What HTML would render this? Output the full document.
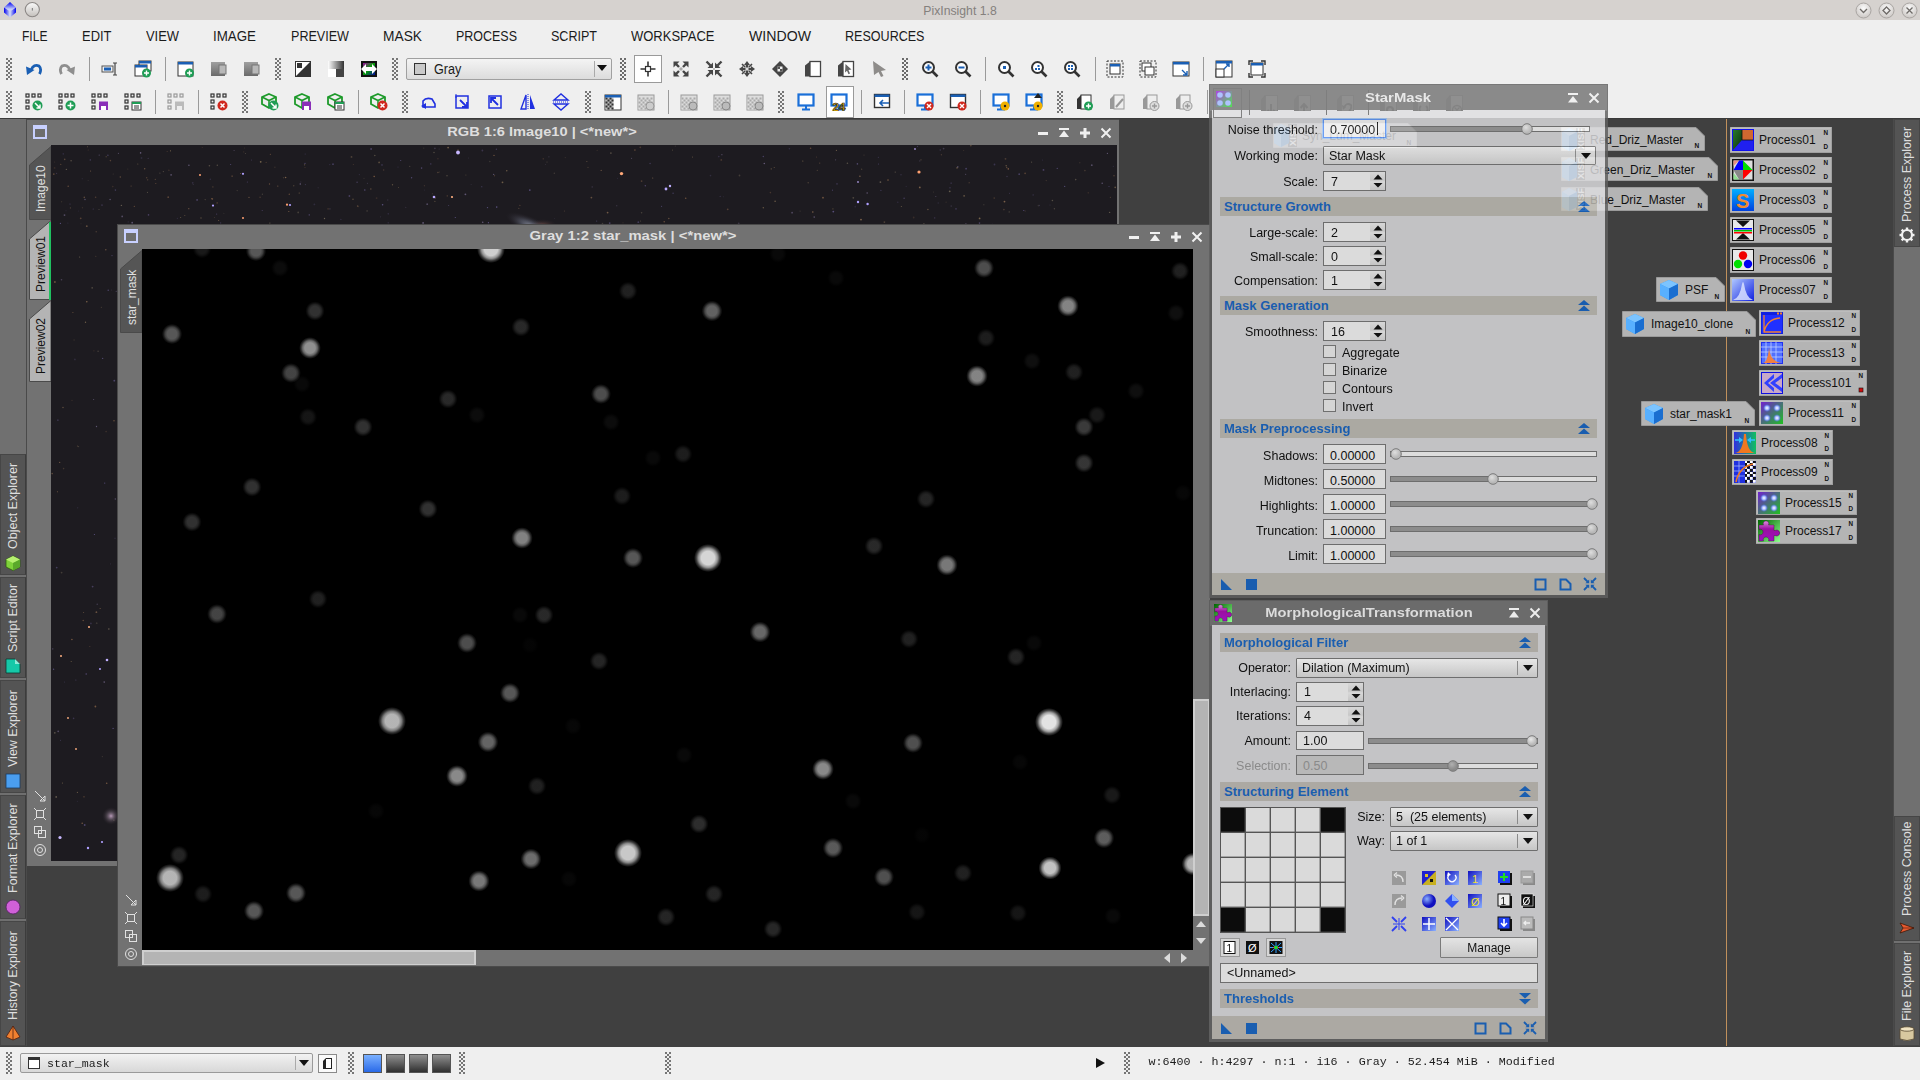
<!DOCTYPE html>
<html><head><meta charset="utf-8"><style>
html,body{margin:0;padding:0;}
body{width:1920px;height:1080px;overflow:hidden;position:relative;background:#404040;font-family:"Liberation Sans",sans-serif;}
div{position:absolute;box-sizing:border-box;}
.t{white-space:nowrap;}
</style></head><body>
<div style="left:0px;top:0px;width:1920px;height:20px;background:#d6d2cf;"></div>
<svg style="position:absolute;left:0px;top:0px;" width="44" height="20" viewBox="0 0 44 20"><defs><linearGradient id="lg1" x1="0" y1="0" x2="0" y2="1"><stop offset="0" stop-color="#0000f0"/><stop offset="0.75" stop-color="#c8d0f8"/></linearGradient><linearGradient id="lg2" x1="0" y1="0" x2="1" y2="0"><stop offset="0" stop-color="#0000f0"/><stop offset="1" stop-color="#d8e0f8"/></linearGradient><linearGradient id="lg3" x1="1" y1="0" x2="0" y2="0"><stop offset="0" stop-color="#0000f0"/><stop offset="1" stop-color="#d8e0f8"/></linearGradient><linearGradient id="cg" x1="0" y1="0" x2="0" y2="1"><stop offset="0" stop-color="#fafafa"/><stop offset="1" stop-color="#c4c0bc"/></linearGradient></defs><polygon points="10,2 16,7.5 10,11.5 4,7.5" fill="url(#lg1)"/><polygon points="4,7.5 10,11.5 10,17.5 4,12.5" fill="url(#lg2)"/><polygon points="16,7.5 10,11.5 10,17.5 16,12.5" fill="url(#lg3)"/><circle cx="32.3" cy="9.6" r="7.1" fill="url(#cg)" stroke="#8c8886" stroke-width="1.1"/><rect x="31.8" y="8" width="1.2" height="2.6" fill="#888"/></svg>
<div class="t" style="left:459.5px;width:1000px;text-align:center;top:5.04px;font-size:12px;line-height:12px;color:#84807d;font-weight:normal;font-family:'Liberation Sans',sans-serif;transform:scaleX(1.02);">PixInsight 1.8</div>
<svg style="position:absolute;left:1853.5px;top:0.5px;" width="19" height="19" viewBox="0 0 19 19"><defs><radialGradient id="cgv" cx="50%" cy="35%" r="60%"><stop offset="0" stop-color="#fbfbfb"/><stop offset="1" stop-color="#cfcbc8"/></radialGradient></defs><circle cx="9.5" cy="9.5" r="7.5" fill="url(#cgv)" stroke="#a9a5a2" stroke-width="1"/><polyline points="6,8 9.5,11.5 13,8" fill="none" stroke="#6e6a67" stroke-width="1.3"/></svg>
<svg style="position:absolute;left:1876.5px;top:0.5px;" width="19" height="19" viewBox="0 0 19 19"><defs><radialGradient id="cgd" cx="50%" cy="35%" r="60%"><stop offset="0" stop-color="#fbfbfb"/><stop offset="1" stop-color="#cfcbc8"/></radialGradient></defs><circle cx="9.5" cy="9.5" r="7.5" fill="url(#cgd)" stroke="#a9a5a2" stroke-width="1"/><polygon points="9.5,6 13,9.5 9.5,13 6,9.5" fill="none" stroke="#6e6a67" stroke-width="1.3"/></svg>
<svg style="position:absolute;left:1899.5px;top:0.5px;" width="19" height="19" viewBox="0 0 19 19"><defs><radialGradient id="cgx" cx="50%" cy="35%" r="60%"><stop offset="0" stop-color="#fbfbfb"/><stop offset="1" stop-color="#cfcbc8"/></radialGradient></defs><circle cx="9.5" cy="9.5" r="7.5" fill="url(#cgx)" stroke="#a9a5a2" stroke-width="1"/><path d="M6.5,6.5 L12.5,12.5 M12.5,6.5 L6.5,12.5" stroke="#6e6a67" stroke-width="1.3"/></svg>
<div style="left:0px;top:20px;width:1920px;height:99px;background:#efefef;"></div>
<div class="t" style="left:22px;top:29.15px;font-size:14px;line-height:14px;color:#1b1b1b;font-weight:normal;font-family:'Liberation Sans',sans-serif;transform-origin:0 0;transform:scaleX(0.8621);">FILE</div>
<div class="t" style="left:82px;top:29.15px;font-size:14px;line-height:14px;color:#1b1b1b;font-weight:normal;font-family:'Liberation Sans',sans-serif;transform-origin:0 0;transform:scaleX(0.9251);">EDIT</div>
<div class="t" style="left:146px;top:29.15px;font-size:14px;line-height:14px;color:#1b1b1b;font-weight:normal;font-family:'Liberation Sans',sans-serif;transform-origin:0 0;transform:scaleX(0.9223);">VIEW</div>
<div class="t" style="left:213px;top:29.15px;font-size:14px;line-height:14px;color:#1b1b1b;font-weight:normal;font-family:'Liberation Sans',sans-serif;transform-origin:0 0;transform:scaleX(0.9529);">IMAGE</div>
<div class="t" style="left:291px;top:29.15px;font-size:14px;line-height:14px;color:#1b1b1b;font-weight:normal;font-family:'Liberation Sans',sans-serif;transform-origin:0 0;transform:scaleX(0.8981);">PREVIEW</div>
<div class="t" style="left:383px;top:29.15px;font-size:14px;line-height:14px;color:#1b1b1b;font-weight:normal;font-family:'Liberation Sans',sans-serif;transform-origin:0 0;transform:scaleX(0.9827);">MASK</div>
<div class="t" style="left:456px;top:29.15px;font-size:14px;line-height:14px;color:#1b1b1b;font-weight:normal;font-family:'Liberation Sans',sans-serif;transform-origin:0 0;transform:scaleX(0.8909);">PROCESS</div>
<div class="t" style="left:551px;top:29.15px;font-size:14px;line-height:14px;color:#1b1b1b;font-weight:normal;font-family:'Liberation Sans',sans-serif;transform-origin:0 0;transform:scaleX(0.896);">SCRIPT</div>
<div class="t" style="left:631px;top:29.15px;font-size:14px;line-height:14px;color:#1b1b1b;font-weight:normal;font-family:'Liberation Sans',sans-serif;transform-origin:0 0;transform:scaleX(0.928);">WORKSPACE</div>
<div class="t" style="left:749px;top:29.15px;font-size:14px;line-height:14px;color:#1b1b1b;font-weight:normal;font-family:'Liberation Sans',sans-serif;transform-origin:0 0;transform:scaleX(1.0091);">WINDOW</div>
<div class="t" style="left:845px;top:29.15px;font-size:14px;line-height:14px;color:#1b1b1b;font-weight:normal;font-family:'Liberation Sans',sans-serif;transform-origin:0 0;transform:scaleX(0.8964);">RESOURCES</div>
<svg style="position:absolute;left:6px;top:58.0px;opacity:0.9;" width="6" height="22" viewBox="0 0 6 22"><rect x="0" y="0" width="2" height="2" fill="#6a6a6a"/><rect x="4" y="0" width="2" height="2" fill="#6a6a6a"/><rect x="2" y="2" width="2" height="2" fill="#6a6a6a"/><rect x="0" y="4" width="2" height="2" fill="#6a6a6a"/><rect x="4" y="4" width="2" height="2" fill="#6a6a6a"/><rect x="2" y="6" width="2" height="2" fill="#6a6a6a"/><rect x="0" y="8" width="2" height="2" fill="#6a6a6a"/><rect x="4" y="8" width="2" height="2" fill="#6a6a6a"/><rect x="2" y="10" width="2" height="2" fill="#6a6a6a"/><rect x="0" y="12" width="2" height="2" fill="#6a6a6a"/><rect x="4" y="12" width="2" height="2" fill="#6a6a6a"/><rect x="2" y="14" width="2" height="2" fill="#6a6a6a"/><rect x="0" y="16" width="2" height="2" fill="#6a6a6a"/><rect x="4" y="16" width="2" height="2" fill="#6a6a6a"/><rect x="2" y="18" width="2" height="2" fill="#6a6a6a"/><rect x="0" y="20" width="2" height="2" fill="#6a6a6a"/><rect x="4" y="20" width="2" height="2" fill="#6a6a6a"/></svg>
<svg style="position:absolute;left:275px;top:58.0px;opacity:0.9;" width="6" height="22" viewBox="0 0 6 22"><rect x="0" y="0" width="2" height="2" fill="#6a6a6a"/><rect x="4" y="0" width="2" height="2" fill="#6a6a6a"/><rect x="2" y="2" width="2" height="2" fill="#6a6a6a"/><rect x="0" y="4" width="2" height="2" fill="#6a6a6a"/><rect x="4" y="4" width="2" height="2" fill="#6a6a6a"/><rect x="2" y="6" width="2" height="2" fill="#6a6a6a"/><rect x="0" y="8" width="2" height="2" fill="#6a6a6a"/><rect x="4" y="8" width="2" height="2" fill="#6a6a6a"/><rect x="2" y="10" width="2" height="2" fill="#6a6a6a"/><rect x="0" y="12" width="2" height="2" fill="#6a6a6a"/><rect x="4" y="12" width="2" height="2" fill="#6a6a6a"/><rect x="2" y="14" width="2" height="2" fill="#6a6a6a"/><rect x="0" y="16" width="2" height="2" fill="#6a6a6a"/><rect x="4" y="16" width="2" height="2" fill="#6a6a6a"/><rect x="2" y="18" width="2" height="2" fill="#6a6a6a"/><rect x="0" y="20" width="2" height="2" fill="#6a6a6a"/><rect x="4" y="20" width="2" height="2" fill="#6a6a6a"/></svg>
<svg style="position:absolute;left:392px;top:58.0px;opacity:0.9;" width="6" height="22" viewBox="0 0 6 22"><rect x="0" y="0" width="2" height="2" fill="#6a6a6a"/><rect x="4" y="0" width="2" height="2" fill="#6a6a6a"/><rect x="2" y="2" width="2" height="2" fill="#6a6a6a"/><rect x="0" y="4" width="2" height="2" fill="#6a6a6a"/><rect x="4" y="4" width="2" height="2" fill="#6a6a6a"/><rect x="2" y="6" width="2" height="2" fill="#6a6a6a"/><rect x="0" y="8" width="2" height="2" fill="#6a6a6a"/><rect x="4" y="8" width="2" height="2" fill="#6a6a6a"/><rect x="2" y="10" width="2" height="2" fill="#6a6a6a"/><rect x="0" y="12" width="2" height="2" fill="#6a6a6a"/><rect x="4" y="12" width="2" height="2" fill="#6a6a6a"/><rect x="2" y="14" width="2" height="2" fill="#6a6a6a"/><rect x="0" y="16" width="2" height="2" fill="#6a6a6a"/><rect x="4" y="16" width="2" height="2" fill="#6a6a6a"/><rect x="2" y="18" width="2" height="2" fill="#6a6a6a"/><rect x="0" y="20" width="2" height="2" fill="#6a6a6a"/><rect x="4" y="20" width="2" height="2" fill="#6a6a6a"/></svg>
<svg style="position:absolute;left:620px;top:58.0px;opacity:0.9;" width="6" height="22" viewBox="0 0 6 22"><rect x="0" y="0" width="2" height="2" fill="#6a6a6a"/><rect x="4" y="0" width="2" height="2" fill="#6a6a6a"/><rect x="2" y="2" width="2" height="2" fill="#6a6a6a"/><rect x="0" y="4" width="2" height="2" fill="#6a6a6a"/><rect x="4" y="4" width="2" height="2" fill="#6a6a6a"/><rect x="2" y="6" width="2" height="2" fill="#6a6a6a"/><rect x="0" y="8" width="2" height="2" fill="#6a6a6a"/><rect x="4" y="8" width="2" height="2" fill="#6a6a6a"/><rect x="2" y="10" width="2" height="2" fill="#6a6a6a"/><rect x="0" y="12" width="2" height="2" fill="#6a6a6a"/><rect x="4" y="12" width="2" height="2" fill="#6a6a6a"/><rect x="2" y="14" width="2" height="2" fill="#6a6a6a"/><rect x="0" y="16" width="2" height="2" fill="#6a6a6a"/><rect x="4" y="16" width="2" height="2" fill="#6a6a6a"/><rect x="2" y="18" width="2" height="2" fill="#6a6a6a"/><rect x="0" y="20" width="2" height="2" fill="#6a6a6a"/><rect x="4" y="20" width="2" height="2" fill="#6a6a6a"/></svg>
<svg style="position:absolute;left:902px;top:58.0px;opacity:0.9;" width="6" height="22" viewBox="0 0 6 22"><rect x="0" y="0" width="2" height="2" fill="#6a6a6a"/><rect x="4" y="0" width="2" height="2" fill="#6a6a6a"/><rect x="2" y="2" width="2" height="2" fill="#6a6a6a"/><rect x="0" y="4" width="2" height="2" fill="#6a6a6a"/><rect x="4" y="4" width="2" height="2" fill="#6a6a6a"/><rect x="2" y="6" width="2" height="2" fill="#6a6a6a"/><rect x="0" y="8" width="2" height="2" fill="#6a6a6a"/><rect x="4" y="8" width="2" height="2" fill="#6a6a6a"/><rect x="2" y="10" width="2" height="2" fill="#6a6a6a"/><rect x="0" y="12" width="2" height="2" fill="#6a6a6a"/><rect x="4" y="12" width="2" height="2" fill="#6a6a6a"/><rect x="2" y="14" width="2" height="2" fill="#6a6a6a"/><rect x="0" y="16" width="2" height="2" fill="#6a6a6a"/><rect x="4" y="16" width="2" height="2" fill="#6a6a6a"/><rect x="2" y="18" width="2" height="2" fill="#6a6a6a"/><rect x="0" y="20" width="2" height="2" fill="#6a6a6a"/><rect x="4" y="20" width="2" height="2" fill="#6a6a6a"/></svg>
<div style="left:89px;top:57.0px;width:1px;height:24px;background:#9a9a9a;"></div>
<div style="left:165px;top:57.0px;width:1px;height:24px;background:#9a9a9a;"></div>
<div style="left:985px;top:57.0px;width:1px;height:24px;background:#9a9a9a;"></div>
<div style="left:1095px;top:57.0px;width:1px;height:24px;background:#9a9a9a;"></div>
<div style="left:1203px;top:57.0px;width:1px;height:24px;background:#9a9a9a;"></div>
<svg style="position:absolute;left:6px;top:91.0px;opacity:0.9;" width="6" height="22" viewBox="0 0 6 22"><rect x="0" y="0" width="2" height="2" fill="#6a6a6a"/><rect x="4" y="0" width="2" height="2" fill="#6a6a6a"/><rect x="2" y="2" width="2" height="2" fill="#6a6a6a"/><rect x="0" y="4" width="2" height="2" fill="#6a6a6a"/><rect x="4" y="4" width="2" height="2" fill="#6a6a6a"/><rect x="2" y="6" width="2" height="2" fill="#6a6a6a"/><rect x="0" y="8" width="2" height="2" fill="#6a6a6a"/><rect x="4" y="8" width="2" height="2" fill="#6a6a6a"/><rect x="2" y="10" width="2" height="2" fill="#6a6a6a"/><rect x="0" y="12" width="2" height="2" fill="#6a6a6a"/><rect x="4" y="12" width="2" height="2" fill="#6a6a6a"/><rect x="2" y="14" width="2" height="2" fill="#6a6a6a"/><rect x="0" y="16" width="2" height="2" fill="#6a6a6a"/><rect x="4" y="16" width="2" height="2" fill="#6a6a6a"/><rect x="2" y="18" width="2" height="2" fill="#6a6a6a"/><rect x="0" y="20" width="2" height="2" fill="#6a6a6a"/><rect x="4" y="20" width="2" height="2" fill="#6a6a6a"/></svg>
<svg style="position:absolute;left:242px;top:91.0px;opacity:0.9;" width="6" height="22" viewBox="0 0 6 22"><rect x="0" y="0" width="2" height="2" fill="#6a6a6a"/><rect x="4" y="0" width="2" height="2" fill="#6a6a6a"/><rect x="2" y="2" width="2" height="2" fill="#6a6a6a"/><rect x="0" y="4" width="2" height="2" fill="#6a6a6a"/><rect x="4" y="4" width="2" height="2" fill="#6a6a6a"/><rect x="2" y="6" width="2" height="2" fill="#6a6a6a"/><rect x="0" y="8" width="2" height="2" fill="#6a6a6a"/><rect x="4" y="8" width="2" height="2" fill="#6a6a6a"/><rect x="2" y="10" width="2" height="2" fill="#6a6a6a"/><rect x="0" y="12" width="2" height="2" fill="#6a6a6a"/><rect x="4" y="12" width="2" height="2" fill="#6a6a6a"/><rect x="2" y="14" width="2" height="2" fill="#6a6a6a"/><rect x="0" y="16" width="2" height="2" fill="#6a6a6a"/><rect x="4" y="16" width="2" height="2" fill="#6a6a6a"/><rect x="2" y="18" width="2" height="2" fill="#6a6a6a"/><rect x="0" y="20" width="2" height="2" fill="#6a6a6a"/><rect x="4" y="20" width="2" height="2" fill="#6a6a6a"/></svg>
<svg style="position:absolute;left:402px;top:91.0px;opacity:0.9;" width="6" height="22" viewBox="0 0 6 22"><rect x="0" y="0" width="2" height="2" fill="#6a6a6a"/><rect x="4" y="0" width="2" height="2" fill="#6a6a6a"/><rect x="2" y="2" width="2" height="2" fill="#6a6a6a"/><rect x="0" y="4" width="2" height="2" fill="#6a6a6a"/><rect x="4" y="4" width="2" height="2" fill="#6a6a6a"/><rect x="2" y="6" width="2" height="2" fill="#6a6a6a"/><rect x="0" y="8" width="2" height="2" fill="#6a6a6a"/><rect x="4" y="8" width="2" height="2" fill="#6a6a6a"/><rect x="2" y="10" width="2" height="2" fill="#6a6a6a"/><rect x="0" y="12" width="2" height="2" fill="#6a6a6a"/><rect x="4" y="12" width="2" height="2" fill="#6a6a6a"/><rect x="2" y="14" width="2" height="2" fill="#6a6a6a"/><rect x="0" y="16" width="2" height="2" fill="#6a6a6a"/><rect x="4" y="16" width="2" height="2" fill="#6a6a6a"/><rect x="2" y="18" width="2" height="2" fill="#6a6a6a"/><rect x="0" y="20" width="2" height="2" fill="#6a6a6a"/><rect x="4" y="20" width="2" height="2" fill="#6a6a6a"/></svg>
<svg style="position:absolute;left:585px;top:91.0px;opacity:0.9;" width="6" height="22" viewBox="0 0 6 22"><rect x="0" y="0" width="2" height="2" fill="#6a6a6a"/><rect x="4" y="0" width="2" height="2" fill="#6a6a6a"/><rect x="2" y="2" width="2" height="2" fill="#6a6a6a"/><rect x="0" y="4" width="2" height="2" fill="#6a6a6a"/><rect x="4" y="4" width="2" height="2" fill="#6a6a6a"/><rect x="2" y="6" width="2" height="2" fill="#6a6a6a"/><rect x="0" y="8" width="2" height="2" fill="#6a6a6a"/><rect x="4" y="8" width="2" height="2" fill="#6a6a6a"/><rect x="2" y="10" width="2" height="2" fill="#6a6a6a"/><rect x="0" y="12" width="2" height="2" fill="#6a6a6a"/><rect x="4" y="12" width="2" height="2" fill="#6a6a6a"/><rect x="2" y="14" width="2" height="2" fill="#6a6a6a"/><rect x="0" y="16" width="2" height="2" fill="#6a6a6a"/><rect x="4" y="16" width="2" height="2" fill="#6a6a6a"/><rect x="2" y="18" width="2" height="2" fill="#6a6a6a"/><rect x="0" y="20" width="2" height="2" fill="#6a6a6a"/><rect x="4" y="20" width="2" height="2" fill="#6a6a6a"/></svg>
<svg style="position:absolute;left:778px;top:91.0px;opacity:0.9;" width="6" height="22" viewBox="0 0 6 22"><rect x="0" y="0" width="2" height="2" fill="#6a6a6a"/><rect x="4" y="0" width="2" height="2" fill="#6a6a6a"/><rect x="2" y="2" width="2" height="2" fill="#6a6a6a"/><rect x="0" y="4" width="2" height="2" fill="#6a6a6a"/><rect x="4" y="4" width="2" height="2" fill="#6a6a6a"/><rect x="2" y="6" width="2" height="2" fill="#6a6a6a"/><rect x="0" y="8" width="2" height="2" fill="#6a6a6a"/><rect x="4" y="8" width="2" height="2" fill="#6a6a6a"/><rect x="2" y="10" width="2" height="2" fill="#6a6a6a"/><rect x="0" y="12" width="2" height="2" fill="#6a6a6a"/><rect x="4" y="12" width="2" height="2" fill="#6a6a6a"/><rect x="2" y="14" width="2" height="2" fill="#6a6a6a"/><rect x="0" y="16" width="2" height="2" fill="#6a6a6a"/><rect x="4" y="16" width="2" height="2" fill="#6a6a6a"/><rect x="2" y="18" width="2" height="2" fill="#6a6a6a"/><rect x="0" y="20" width="2" height="2" fill="#6a6a6a"/><rect x="4" y="20" width="2" height="2" fill="#6a6a6a"/></svg>
<svg style="position:absolute;left:1057px;top:91.0px;opacity:0.9;" width="6" height="22" viewBox="0 0 6 22"><rect x="0" y="0" width="2" height="2" fill="#6a6a6a"/><rect x="4" y="0" width="2" height="2" fill="#6a6a6a"/><rect x="2" y="2" width="2" height="2" fill="#6a6a6a"/><rect x="0" y="4" width="2" height="2" fill="#6a6a6a"/><rect x="4" y="4" width="2" height="2" fill="#6a6a6a"/><rect x="2" y="6" width="2" height="2" fill="#6a6a6a"/><rect x="0" y="8" width="2" height="2" fill="#6a6a6a"/><rect x="4" y="8" width="2" height="2" fill="#6a6a6a"/><rect x="2" y="10" width="2" height="2" fill="#6a6a6a"/><rect x="0" y="12" width="2" height="2" fill="#6a6a6a"/><rect x="4" y="12" width="2" height="2" fill="#6a6a6a"/><rect x="2" y="14" width="2" height="2" fill="#6a6a6a"/><rect x="0" y="16" width="2" height="2" fill="#6a6a6a"/><rect x="4" y="16" width="2" height="2" fill="#6a6a6a"/><rect x="2" y="18" width="2" height="2" fill="#6a6a6a"/><rect x="0" y="20" width="2" height="2" fill="#6a6a6a"/><rect x="4" y="20" width="2" height="2" fill="#6a6a6a"/></svg>
<div style="left:155px;top:90.0px;width:1px;height:24px;background:#9a9a9a;"></div>
<div style="left:198px;top:90.0px;width:1px;height:24px;background:#9a9a9a;"></div>
<div style="left:358px;top:90.0px;width:1px;height:24px;background:#9a9a9a;"></div>
<div style="left:668px;top:90.0px;width:1px;height:24px;background:#9a9a9a;"></div>
<div style="left:861px;top:90.0px;width:1px;height:24px;background:#9a9a9a;"></div>
<div style="left:904px;top:90.0px;width:1px;height:24px;background:#9a9a9a;"></div>
<div style="left:980px;top:90.0px;width:1px;height:24px;background:#9a9a9a;"></div>
<div style="left:1207px;top:90.0px;width:1px;height:24px;background:#9a9a9a;"></div>
<svg style="position:absolute;left:25.0px;top:60.0px;" width="18" height="18" viewBox="0 0 18 18"><path d="M6,10 Q9,3.5 14,6 Q17,9 14.5,14" fill="none" stroke="#1a5fb4" stroke-width="2.8"/><polygon points="1,6.5 9.5,10 2,15" fill="#1a5fb4"/></svg>
<svg style="position:absolute;left:58.0px;top:60.0px;" width="18" height="18" viewBox="0 0 18 18"><path d="M12,10 Q9,3.5 4,6 Q1,9 3.5,14" fill="none" stroke="#8e8e8e" stroke-width="2.8"/><polygon points="17,6.5 8.5,10 16,15" fill="#8e8e8e"/></svg>
<svg style="position:absolute;left:101.0px;top:60.0px;" width="18" height="18" viewBox="0 0 18 18"><rect x="1" y="6" width="11" height="6" fill="none" stroke="#555" stroke-width="1"/><rect x="3" y="7.5" width="7" height="3" fill="#1a5fb4"/><path d="M12,3 h4 M14,3 v12 M12,15 h4" stroke="#444" stroke-width="1.2"/></svg>
<svg style="position:absolute;left:134.0px;top:60.0px;" width="18" height="18" viewBox="0 0 18 18"><rect x="5" y="1" width="12" height="10" fill="#fff" stroke="#333"/><rect x="5" y="1" width="12" height="2.5" fill="#1a5fb4"/><rect x="1" y="5" width="12" height="11" fill="#fff" stroke="#333"/><rect x="1" y="5" width="12" height="2.5" fill="#1a5fb4"/><circle cx="12.5" cy="13" r="4.5" fill="#1f9d55"/><path d="M12.5,10.5 v5 M10,13 h5" stroke="#fff" stroke-width="1.4"/></svg>
<svg style="position:absolute;left:177.0px;top:60.0px;" width="18" height="18" viewBox="0 0 18 18"><rect x="1" y="2" width="15" height="14" fill="#fff" stroke="#333"/><rect x="1" y="2" width="15" height="2.5" fill="#1a5fb4"/><circle cx="12.5" cy="13" r="4.5" fill="#1f9d55"/><path d="M12.5,10.5 v5 M10,13 h5" stroke="#fff" stroke-width="1.4"/></svg>
<svg style="position:absolute;left:210.0px;top:60.0px;" width="18" height="18" viewBox="0 0 18 18"><defs><linearGradient id="gg" x1="0" y1="0" x2="0" y2="1"><stop offset="0" stop-color="#a0a0a0"/><stop offset="1" stop-color="#6a6a6a"/></linearGradient></defs><rect x="1" y="2" width="14" height="14" fill="url(#gg)"/><rect x="9" y="5" width="7" height="9" fill="#b8b8b8" stroke="#777"/></svg>
<svg style="position:absolute;left:243.0px;top:60.0px;" width="18" height="18" viewBox="0 0 18 18"><defs><linearGradient id="gg" x1="0" y1="0" x2="0" y2="1"><stop offset="0" stop-color="#a0a0a0"/><stop offset="1" stop-color="#6a6a6a"/></linearGradient></defs><rect x="1" y="2" width="14" height="14" fill="url(#gg)"/><rect x="9" y="5" width="7" height="9" fill="#b8b8b8" stroke="#777"/></svg>
<svg style="position:absolute;left:294.0px;top:60.0px;" width="18" height="18" viewBox="0 0 18 18"><rect x="1" y="1" width="16" height="16" fill="#333"/><polygon points="2,16 16,2 2,2" fill="#fff"/><rect x="3" y="3" width="5" height="5" fill="#333"/><rect x="10" y="10" width="5" height="5" fill="#333"/></svg>
<svg style="position:absolute;left:327.0px;top:60.0px;" width="18" height="18" viewBox="0 0 18 18"><defs><linearGradient id="g2" x1="0" y1="0" x2="1" y2="0"><stop offset="0" stop-color="#fff"/><stop offset="1" stop-color="#333"/></linearGradient></defs><rect x="1" y="1" width="16" height="16" fill="url(#g2)"/><rect x="1" y="9" width="8" height="8" fill="#fff"/><rect x="9" y="9" width="8" height="8" fill="#444"/></svg>
<svg style="position:absolute;left:360.0px;top:60.0px;" width="18" height="18" viewBox="0 0 18 18"><defs><linearGradient id="g3" x1="0" y1="0" x2="1" y2="1"><stop offset="0" stop-color="#f0f"/><stop offset="0.5" stop-color="#0f0"/><stop offset="1" stop-color="#00f"/></linearGradient></defs><rect x="1" y="1" width="16" height="16" fill="#111"/><rect x="3" y="3" width="12" height="12" fill="url(#g3)" opacity="0.6"/><polygon points="1,9 6,4 6,7 12,7 12,4 17,9 12,14 12,11 6,11 6,14" fill="#fff"/></svg>
<div style="left:406px;top:58px;width:206px;height:22px;background:linear-gradient(#f4f4f4,#dcdcdc);border:1px solid #a0a0a0;border-radius:2px;"></div>
<div style="left:414px;top:63px;width:12px;height:12px;background:#c9c9c9;border:1px solid #333;"></div>
<div class="t" style="left:434px;top:62.15px;font-size:14px;line-height:14px;color:#1b1b1b;font-weight:normal;font-family:'Liberation Sans',sans-serif;transform-origin:0 0;transform:scaleX(0.9);">Gray</div>
<div style="left:594px;top:61px;width:1px;height:16px;background:#aaa;"></div>
<svg style="position:absolute;left:596px;top:64px;" width="12" height="8" viewBox="0 0 12 8"><polygon points="1,1 11,1 6,7" fill="#111"/></svg>
<svg style="position:absolute;left:620px;top:58.0px;opacity:0.9;" width="6" height="22" viewBox="0 0 6 22"><rect x="0" y="0" width="2" height="2" fill="#6a6a6a"/><rect x="4" y="0" width="2" height="2" fill="#6a6a6a"/><rect x="2" y="2" width="2" height="2" fill="#6a6a6a"/><rect x="0" y="4" width="2" height="2" fill="#6a6a6a"/><rect x="4" y="4" width="2" height="2" fill="#6a6a6a"/><rect x="2" y="6" width="2" height="2" fill="#6a6a6a"/><rect x="0" y="8" width="2" height="2" fill="#6a6a6a"/><rect x="4" y="8" width="2" height="2" fill="#6a6a6a"/><rect x="2" y="10" width="2" height="2" fill="#6a6a6a"/><rect x="0" y="12" width="2" height="2" fill="#6a6a6a"/><rect x="4" y="12" width="2" height="2" fill="#6a6a6a"/><rect x="2" y="14" width="2" height="2" fill="#6a6a6a"/><rect x="0" y="16" width="2" height="2" fill="#6a6a6a"/><rect x="4" y="16" width="2" height="2" fill="#6a6a6a"/><rect x="2" y="18" width="2" height="2" fill="#6a6a6a"/><rect x="0" y="20" width="2" height="2" fill="#6a6a6a"/><rect x="4" y="20" width="2" height="2" fill="#6a6a6a"/></svg>
<div style="left:634px;top:55px;width:28px;height:28px;background:#fff;border:1px solid #9a9a9a;"></div>
<svg style="position:absolute;left:639.0px;top:60.0px;" width="18" height="18" viewBox="0 0 18 18"><path d="M9,1.5 V16.5 M1.5,9 H16.5" stroke="#333" stroke-width="1.6"/><rect x="6.5" y="6.5" width="5" height="5" fill="#fff" stroke="#333" stroke-width="1.2"/></svg>
<svg style="position:absolute;left:672.0px;top:60.0px;" width="18" height="18" viewBox="0 0 18 18"><polygon points="1.5,1.5 7.5,1.5 1.5,7.5" fill="#454545"/><polygon points="16.5,1.5 10.5,1.5 16.5,7.5" fill="#454545"/><polygon points="1.5,16.5 7.5,16.5 1.5,10.5" fill="#454545"/><polygon points="16.5,16.5 10.5,16.5 16.5,10.5" fill="#454545"/><path d="M3,3 L7,7 M15,3 L11,7 M3,15 L7,11 M15,15 L11,11" stroke="#454545" stroke-width="2.4"/><rect x="7.5" y="7.5" width="3" height="3" fill="#aaa"/></svg>
<svg style="position:absolute;left:705.0px;top:60.0px;" width="18" height="18" viewBox="0 0 18 18"><path d="M1.5,1.5 L5.5,5.5 M16.5,1.5 L12.5,5.5 M1.5,16.5 L5.5,12.5 M16.5,16.5 L12.5,12.5" stroke="#454545" stroke-width="2.4"/><polygon points="8,8 8,2.5 2.5,8" fill="#454545"/><polygon points="10,8 10,2.5 15.5,8" fill="#454545"/><polygon points="8,10 8,15.5 2.5,10" fill="#454545"/><polygon points="10,10 10,15.5 15.5,10" fill="#454545"/><rect x="8" y="8" width="2" height="2" fill="#bbb"/></svg>
<svg style="position:absolute;left:738.0px;top:60.0px;" width="18" height="18" viewBox="0 0 18 18"><path d="M9,4 V14 M4,9 H14" stroke="#454545" stroke-width="2.6"/><polygon points="9,1 12,5 6,5" fill="#454545"/><polygon points="9,17 12,13 6,13" fill="#454545"/><polygon points="1,9 5,6 5,12" fill="#454545"/><polygon points="17,9 13,6 13,12" fill="#454545"/><path d="M4,4 L7,7 M14,4 L11,7 M4,14 L7,11 M14,14 L11,11" stroke="#454545" stroke-width="1.6"/><rect x="7.5" y="7.5" width="3" height="3" fill="#ddd"/></svg>
<svg style="position:absolute;left:771.0px;top:60.0px;" width="18" height="18" viewBox="0 0 18 18"><polygon points="9,1 17,9 9,17 1,9" fill="#454545"/><rect x="6.5" y="6.5" width="5" height="5" fill="#eee"/><rect x="6.5" y="6.5" width="2.5" height="2.5" fill="#555"/><rect x="9" y="9" width="2.5" height="2.5" fill="#555"/></svg>
<svg style="position:absolute;left:804.0px;top:60.0px;" width="18" height="18" viewBox="0 0 18 18"><polygon points="1,5.5 6,1.5 6,16.5 1,16.5" fill="#454545"/><rect x="6" y="1.5" width="10.5" height="15" fill="#fff" stroke="#454545" stroke-width="1.3"/></svg>
<svg style="position:absolute;left:837.0px;top:60.0px;" width="18" height="18" viewBox="0 0 18 18"><polygon points="1,5.5 6,1.5 6,16.5 1,16.5" fill="#454545"/><rect x="6" y="1.5" width="10.5" height="15" fill="#fff" stroke="#454545" stroke-width="1.3"/><polygon points="8.5,4 14.5,9.5 11.5,10 13,13.5 11.5,14.2 10,10.8 8,12.5" fill="#666"/></svg>
<svg style="position:absolute;left:870.0px;top:60.0px;" width="18" height="18" viewBox="0 0 18 18"><polygon points="3,1 16,10 11,11 13.5,16 11,17 8.5,12 4,15" fill="#8e8c8a"/></svg>
<svg style="position:absolute;left:902px;top:58.0px;opacity:0.9;" width="6" height="22" viewBox="0 0 6 22"><rect x="0" y="0" width="2" height="2" fill="#6a6a6a"/><rect x="4" y="0" width="2" height="2" fill="#6a6a6a"/><rect x="2" y="2" width="2" height="2" fill="#6a6a6a"/><rect x="0" y="4" width="2" height="2" fill="#6a6a6a"/><rect x="4" y="4" width="2" height="2" fill="#6a6a6a"/><rect x="2" y="6" width="2" height="2" fill="#6a6a6a"/><rect x="0" y="8" width="2" height="2" fill="#6a6a6a"/><rect x="4" y="8" width="2" height="2" fill="#6a6a6a"/><rect x="2" y="10" width="2" height="2" fill="#6a6a6a"/><rect x="0" y="12" width="2" height="2" fill="#6a6a6a"/><rect x="4" y="12" width="2" height="2" fill="#6a6a6a"/><rect x="2" y="14" width="2" height="2" fill="#6a6a6a"/><rect x="0" y="16" width="2" height="2" fill="#6a6a6a"/><rect x="4" y="16" width="2" height="2" fill="#6a6a6a"/><rect x="2" y="18" width="2" height="2" fill="#6a6a6a"/><rect x="0" y="20" width="2" height="2" fill="#6a6a6a"/><rect x="4" y="20" width="2" height="2" fill="#6a6a6a"/></svg>
<svg style="position:absolute;left:921.0px;top:60.0px;" width="18" height="18" viewBox="0 0 18 18"><circle cx="7.5" cy="7.5" r="5.5" fill="#fff" stroke="#333" stroke-width="2"/><path d="M11.5,11.5 L16.5,16.5" stroke="#333" stroke-width="2.6"/><path d="M7.5,4.5 v6 M4.5,7.5 h6" stroke="#1a5fb4" stroke-width="2"/></svg>
<svg style="position:absolute;left:954.0px;top:60.0px;" width="18" height="18" viewBox="0 0 18 18"><circle cx="7.5" cy="7.5" r="5.5" fill="#fff" stroke="#333" stroke-width="2"/><path d="M11.5,11.5 L16.5,16.5" stroke="#333" stroke-width="2.6"/><path d="M4.5,7.5 h6" stroke="#1a5fb4" stroke-width="2"/></svg>
<svg style="position:absolute;left:997.0px;top:60.0px;" width="18" height="18" viewBox="0 0 18 18"><circle cx="7.5" cy="7.5" r="5.5" fill="#fff" stroke="#333" stroke-width="2"/><path d="M11.5,11.5 L16.5,16.5" stroke="#333" stroke-width="2.6"/><rect x="6" y="6" width="3" height="3" fill="#1a5fb4"/></svg>
<svg style="position:absolute;left:1030.0px;top:60.0px;" width="18" height="18" viewBox="0 0 18 18"><circle cx="7.5" cy="7.5" r="5.5" fill="#fff" stroke="#333" stroke-width="2"/><path d="M11.5,11.5 L16.5,16.5" stroke="#333" stroke-width="2.6"/><rect x="7.5" y="5" width="2" height="2" fill="#1a5fb4"/><rect x="5" y="8" width="2" height="2" fill="#1a5fb4"/><rect x="8" y="8" width="2" height="2" fill="#1a5fb4"/></svg>
<svg style="position:absolute;left:1063.0px;top:60.0px;" width="18" height="18" viewBox="0 0 18 18"><circle cx="7.5" cy="7.5" r="5.5" fill="#fff" stroke="#333" stroke-width="2"/><path d="M11.5,11.5 L16.5,16.5" stroke="#333" stroke-width="2.6"/><rect x="5" y="5" width="2" height="2" fill="#1a5fb4"/><rect x="8" y="5" width="2" height="2" fill="#1a5fb4"/><rect x="5" y="8" width="2" height="2" fill="#1a5fb4"/><rect x="8" y="8" width="2" height="2" fill="#1a5fb4"/></svg>
<svg style="position:absolute;left:1106.0px;top:60.0px;" width="18" height="18" viewBox="0 0 18 18"><rect x="1" y="1" width="16" height="16" fill="none" stroke="#333" stroke-dasharray="2,1.5"/><rect x="4" y="4" width="10" height="10" fill="#fff" stroke="#333"/><rect x="4" y="4" width="10" height="2.5" fill="#1a5fb4"/></svg>
<svg style="position:absolute;left:1139.0px;top:60.0px;" width="18" height="18" viewBox="0 0 18 18"><rect x="1" y="1" width="16" height="16" fill="none" stroke="#333" stroke-dasharray="2,1.5"/><rect x="3" y="3" width="9" height="8" fill="#fff" stroke="#333"/><rect x="6" y="7" width="9" height="8" fill="#fff" stroke="#333"/></svg>
<svg style="position:absolute;left:1172.0px;top:60.0px;" width="18" height="18" viewBox="0 0 18 18"><rect x="1" y="2" width="16" height="14" fill="#fff" stroke="#333"/><rect x="1" y="2" width="16" height="2.5" fill="#1a5fb4"/><path d="M10,10 L15,15 M15,11 v4 h-4" stroke="#1a5fb4" stroke-width="1.4" fill="none"/></svg>
<svg style="position:absolute;left:1215.0px;top:60.0px;" width="18" height="18" viewBox="0 0 18 18"><rect x="1" y="1" width="16" height="16" fill="#fff" stroke="#333"/><rect x="1" y="1" width="16" height="2.5" fill="#1a5fb4"/><rect x="1" y="9" width="8" height="8" fill="#fff" stroke="#333"/><path d="M9,9 L14,4 M11,4 h3 v3" stroke="#1a5fb4" stroke-width="1.4" fill="none"/></svg>
<svg style="position:absolute;left:1248.0px;top:60.0px;" width="18" height="18" viewBox="0 0 18 18"><path d="M1,5 v-4 h4 M13,1 h4 v4 M17,13 v4 h-4 M5,17 h-4 v-4" stroke="#333" stroke-width="1.4" fill="none"/><rect x="3" y="3" width="12" height="12" fill="#fff" stroke="#333"/><rect x="3" y="3" width="12" height="2.5" fill="#1a5fb4"/></svg>
<svg style="position:absolute;left:25.0px;top:93.0px;" width="18" height="18" viewBox="0 0 18 18"><rect x="1" y="1" width="3" height="3" fill="none" stroke="#333" stroke-width="1.2"/><rect x="7" y="1" width="3" height="3" fill="none" stroke="#333" stroke-width="1.2"/><rect x="13" y="1" width="3" height="3" fill="none" stroke="#333" stroke-width="1.2"/><rect x="1" y="7" width="3" height="3" fill="none" stroke="#333" stroke-width="1.2"/><rect x="1" y="13" width="3" height="3" fill="none" stroke="#333" stroke-width="1.2"/><circle cx="12.5" cy="12.5" r="5" fill="#1f9d55"/><path d="M10,10 L15,15 M15,11.5 v3.5 h-3.5" stroke="#fff" stroke-width="1.5" fill="none"/></svg>
<svg style="position:absolute;left:58.0px;top:93.0px;" width="18" height="18" viewBox="0 0 18 18"><rect x="1" y="1" width="3" height="3" fill="none" stroke="#333" stroke-width="1.2"/><rect x="7" y="1" width="3" height="3" fill="none" stroke="#333" stroke-width="1.2"/><rect x="13" y="1" width="3" height="3" fill="none" stroke="#333" stroke-width="1.2"/><rect x="1" y="7" width="3" height="3" fill="none" stroke="#333" stroke-width="1.2"/><rect x="1" y="13" width="3" height="3" fill="none" stroke="#333" stroke-width="1.2"/><circle cx="12.5" cy="12.5" r="5" fill="#1f9d55"/><path d="M12.5,9.5 v6 M9.5,12.5 h6" stroke="#fff" stroke-width="1.5"/></svg>
<svg style="position:absolute;left:91.0px;top:93.0px;" width="18" height="18" viewBox="0 0 18 18"><rect x="1" y="1" width="3" height="3" fill="none" stroke="#333" stroke-width="1.2"/><rect x="7" y="1" width="3" height="3" fill="none" stroke="#333" stroke-width="1.2"/><rect x="13" y="1" width="3" height="3" fill="none" stroke="#333" stroke-width="1.2"/><rect x="1" y="7" width="3" height="3" fill="none" stroke="#333" stroke-width="1.2"/><rect x="1" y="13" width="3" height="3" fill="none" stroke="#333" stroke-width="1.2"/><rect x="8" y="8.5" width="9" height="8.5" fill="#8a2fb8"/><rect x="10" y="13" width="5" height="4" fill="#fff"/></svg>
<svg style="position:absolute;left:124.0px;top:93.0px;" width="18" height="18" viewBox="0 0 18 18"><rect x="1" y="1" width="3" height="3" fill="none" stroke="#333" stroke-width="1.2"/><rect x="7" y="1" width="3" height="3" fill="none" stroke="#333" stroke-width="1.2"/><rect x="13" y="1" width="3" height="3" fill="none" stroke="#333" stroke-width="1.2"/><rect x="1" y="7" width="3" height="3" fill="none" stroke="#333" stroke-width="1.2"/><rect x="1" y="13" width="3" height="3" fill="none" stroke="#333" stroke-width="1.2"/><rect x="8" y="9" width="9" height="8" fill="#fff" stroke="#333"/><rect x="8" y="9" width="9" height="2" fill="#1f9d55"/><path d="M10,13 h5 M10,15 h5" stroke="#333"/></svg>
<svg style="position:absolute;left:167.0px;top:93.0px;" width="18" height="18" viewBox="0 0 18 18"><rect x="1" y="1" width="3" height="3" fill="none" stroke="#999" stroke-width="1.2"/><rect x="7" y="1" width="3" height="3" fill="none" stroke="#999" stroke-width="1.2"/><rect x="13" y="1" width="3" height="3" fill="none" stroke="#999" stroke-width="1.2"/><rect x="1" y="7" width="3" height="3" fill="none" stroke="#999" stroke-width="1.2"/><rect x="1" y="13" width="3" height="3" fill="none" stroke="#999" stroke-width="1.2"/><rect x="8" y="8.5" width="9" height="8.5" fill="#bbb"/><rect x="10" y="13" width="5" height="4" fill="#eee"/></svg>
<svg style="position:absolute;left:210.0px;top:93.0px;" width="18" height="18" viewBox="0 0 18 18"><rect x="1" y="1" width="3" height="3" fill="none" stroke="#333" stroke-width="1.2"/><rect x="7" y="1" width="3" height="3" fill="none" stroke="#333" stroke-width="1.2"/><rect x="13" y="1" width="3" height="3" fill="none" stroke="#333" stroke-width="1.2"/><rect x="1" y="7" width="3" height="3" fill="none" stroke="#333" stroke-width="1.2"/><rect x="1" y="13" width="3" height="3" fill="none" stroke="#333" stroke-width="1.2"/><circle cx="12.5" cy="12.5" r="5" fill="#d0281e"/><path d="M10.5,10.5 L14.5,14.5 M14.5,10.5 L10.5,14.5" stroke="#fff" stroke-width="1.5"/></svg>
<svg style="position:absolute;left:261.0px;top:93.0px;" width="18" height="18" viewBox="0 0 18 18"><polygon points="8,1 15,4 15,11 8,15 1,11 1,4" fill="none" stroke="#1d9a2a" stroke-width="1.8"/><path d="M1,4 L8,7.5 L15,4 M8,7.5 V15" stroke="#1d9a2a" stroke-width="1.6" fill="none"/><circle cx="12.5" cy="12.5" r="5" fill="#1f9d55"/><path d="M10,10 L15,15 M15,11.5 v3.5 h-3.5" stroke="#fff" stroke-width="1.5" fill="none"/></svg>
<svg style="position:absolute;left:294.0px;top:93.0px;" width="18" height="18" viewBox="0 0 18 18"><polygon points="8,1 15,4 15,11 8,15 1,11 1,4" fill="none" stroke="#1d9a2a" stroke-width="1.8"/><path d="M1,4 L8,7.5 L15,4 M8,7.5 V15" stroke="#1d9a2a" stroke-width="1.6" fill="none"/><rect x="8" y="8.5" width="9" height="8.5" fill="#8a2fb8"/><rect x="10" y="13" width="5" height="4" fill="#fff"/></svg>
<svg style="position:absolute;left:327.0px;top:93.0px;" width="18" height="18" viewBox="0 0 18 18"><polygon points="8,1 15,4 15,11 8,15 1,11 1,4" fill="none" stroke="#1d9a2a" stroke-width="1.8"/><path d="M1,4 L8,7.5 L15,4 M8,7.5 V15" stroke="#1d9a2a" stroke-width="1.6" fill="none"/><rect x="8" y="9" width="9" height="8" fill="#fff" stroke="#333"/><rect x="8" y="9" width="9" height="2" fill="#1f9d55"/><path d="M10,13 h5 M10,15 h5" stroke="#333"/></svg>
<svg style="position:absolute;left:370.0px;top:93.0px;" width="18" height="18" viewBox="0 0 18 18"><polygon points="8,1 15,4 15,11 8,15 1,11 1,4" fill="none" stroke="#1d9a2a" stroke-width="1.8"/><path d="M1,4 L8,7.5 L15,4 M8,7.5 V15" stroke="#1d9a2a" stroke-width="1.6" fill="none"/><circle cx="12.5" cy="12.5" r="5" fill="#d0281e"/><path d="M10.5,10.5 L14.5,14.5 M14.5,10.5 L10.5,14.5" stroke="#fff" stroke-width="1.5"/></svg>
<svg style="position:absolute;left:420.0px;top:93.0px;" width="18" height="18" viewBox="0 0 18 18"><path d="M3,14 L3,8 Q6,4 12,6 L15,11 L15,14 Z" fill="none" stroke="#2030e0" stroke-width="1.6"/><polygon points="1,13 6,10 6,16" fill="#2030e0"/></svg>
<svg style="position:absolute;left:453.0px;top:93.0px;" width="18" height="18" viewBox="0 0 18 18"><rect x="3" y="3" width="12" height="12" fill="none" stroke="#2030e0" stroke-width="1.5"/><path d="M7,7 L14,14 M14,9 v5 h-5" stroke="#2030e0" stroke-width="1.8" fill="none"/><path d="M3,1 v4" stroke="#2030e0"/></svg>
<svg style="position:absolute;left:486.0px;top:93.0px;" width="18" height="18" viewBox="0 0 18 18"><rect x="3" y="3" width="12" height="12" fill="none" stroke="#2030e0" stroke-width="1.5"/><path d="M12,12 L5,5 M5,10 v-5 h5" stroke="#2030e0" stroke-width="1.8" fill="none"/></svg>
<svg style="position:absolute;left:519.0px;top:93.0px;" width="18" height="18" viewBox="0 0 18 18"><polygon points="7,2 7,16 2,16" fill="none" stroke="#2030e0" stroke-width="1.4"/><polygon points="11,2 11,16 16,16" fill="#2030e0"/><path d="M9,1 v16" stroke="#2030e0" stroke-dasharray="1,1"/></svg>
<svg style="position:absolute;left:552.0px;top:93.0px;" width="18" height="18" viewBox="0 0 18 18"><polygon points="2,7 9,1 16,7" fill="none" stroke="#2030e0" stroke-width="1.4"/><polygon points="2,11 9,17 16,11" fill="none" stroke="#2030e0" stroke-width="1.4"/><path d="M1,9 h16" stroke="#2030e0" stroke-dasharray="1,1"/></svg>
<svg style="position:absolute;left:604.0px;top:93.0px;" width="18" height="18" viewBox="0 0 18 18"><rect x="1" y="2" width="16" height="15" fill="#fff" stroke="#333"/><rect x="1.5" y="4.5" width="8" height="12" fill="#bbb"/><rect x="1.5" y="4.5" width="2" height="2" fill="#333"/><rect x="5.5" y="4.5" width="2" height="2" fill="#333"/><rect x="3.5" y="6.5" width="2" height="2" fill="#333"/><rect x="7.5" y="6.5" width="2" height="2" fill="#333"/><rect x="1.5" y="8.5" width="2" height="2" fill="#333"/><rect x="5.5" y="8.5" width="2" height="2" fill="#333"/><rect x="3.5" y="10.5" width="2" height="2" fill="#333"/><rect x="7.5" y="10.5" width="2" height="2" fill="#333"/><rect x="1.5" y="12.5" width="2" height="2" fill="#333"/><rect x="5.5" y="12.5" width="2" height="2" fill="#333"/><rect x="3.5" y="14.5" width="2" height="2" fill="#333"/><rect x="7.5" y="14.5" width="2" height="2" fill="#333"/><rect x="1" y="2" width="16" height="2.5" fill="#1a5fb4"/></svg>
<svg style="position:absolute;left:637.0px;top:93.0px;" width="18" height="18" viewBox="0 0 18 18"><rect x="1" y="2" width="16" height="15" fill="#ddd" stroke="#999"/><rect x="1.5" y="4.5" width="14" height="12" fill="#ddd"/><rect x="1.5" y="4.5" width="2" height="2" fill="#aaa"/><rect x="5.5" y="4.5" width="2" height="2" fill="#aaa"/><rect x="9.5" y="4.5" width="2" height="2" fill="#aaa"/><rect x="13.5" y="4.5" width="2" height="2" fill="#aaa"/><rect x="3.5" y="6.5" width="2" height="2" fill="#aaa"/><rect x="7.5" y="6.5" width="2" height="2" fill="#aaa"/><rect x="11.5" y="6.5" width="2" height="2" fill="#aaa"/><rect x="1.5" y="8.5" width="2" height="2" fill="#aaa"/><rect x="5.5" y="8.5" width="2" height="2" fill="#aaa"/><rect x="9.5" y="8.5" width="2" height="2" fill="#aaa"/><rect x="13.5" y="8.5" width="2" height="2" fill="#aaa"/><rect x="3.5" y="10.5" width="2" height="2" fill="#aaa"/><rect x="7.5" y="10.5" width="2" height="2" fill="#aaa"/><rect x="11.5" y="10.5" width="2" height="2" fill="#aaa"/><rect x="1.5" y="12.5" width="2" height="2" fill="#aaa"/><rect x="5.5" y="12.5" width="2" height="2" fill="#aaa"/><rect x="9.5" y="12.5" width="2" height="2" fill="#aaa"/><rect x="13.5" y="12.5" width="2" height="2" fill="#aaa"/><rect x="3.5" y="14.5" width="2" height="2" fill="#aaa"/><rect x="7.5" y="14.5" width="2" height="2" fill="#aaa"/><rect x="11.5" y="14.5" width="2" height="2" fill="#aaa"/><circle cx="13" cy="13" r="4" fill="#ccc" stroke="#999"/></svg>
<svg style="position:absolute;left:680.0px;top:93.0px;" width="18" height="18" viewBox="0 0 18 18"><rect x="1" y="2" width="16" height="15" fill="#ddd" stroke="#999"/><rect x="1.5" y="4.5" width="14" height="12" fill="#ddd"/><rect x="1.5" y="4.5" width="2" height="2" fill="#aaa"/><rect x="5.5" y="4.5" width="2" height="2" fill="#aaa"/><rect x="9.5" y="4.5" width="2" height="2" fill="#aaa"/><rect x="13.5" y="4.5" width="2" height="2" fill="#aaa"/><rect x="3.5" y="6.5" width="2" height="2" fill="#aaa"/><rect x="7.5" y="6.5" width="2" height="2" fill="#aaa"/><rect x="11.5" y="6.5" width="2" height="2" fill="#aaa"/><rect x="1.5" y="8.5" width="2" height="2" fill="#aaa"/><rect x="5.5" y="8.5" width="2" height="2" fill="#aaa"/><rect x="9.5" y="8.5" width="2" height="2" fill="#aaa"/><rect x="13.5" y="8.5" width="2" height="2" fill="#aaa"/><rect x="3.5" y="10.5" width="2" height="2" fill="#aaa"/><rect x="7.5" y="10.5" width="2" height="2" fill="#aaa"/><rect x="11.5" y="10.5" width="2" height="2" fill="#aaa"/><rect x="1.5" y="12.5" width="2" height="2" fill="#aaa"/><rect x="5.5" y="12.5" width="2" height="2" fill="#aaa"/><rect x="9.5" y="12.5" width="2" height="2" fill="#aaa"/><rect x="13.5" y="12.5" width="2" height="2" fill="#aaa"/><rect x="3.5" y="14.5" width="2" height="2" fill="#aaa"/><rect x="7.5" y="14.5" width="2" height="2" fill="#aaa"/><rect x="11.5" y="14.5" width="2" height="2" fill="#aaa"/><circle cx="13" cy="13" r="4" fill="#bbb" stroke="#888"/></svg>
<svg style="position:absolute;left:713.0px;top:93.0px;" width="18" height="18" viewBox="0 0 18 18"><rect x="1" y="2" width="16" height="15" fill="#ddd" stroke="#999"/><rect x="1.5" y="4.5" width="14" height="12" fill="#ddd"/><rect x="1.5" y="4.5" width="2" height="2" fill="#aaa"/><rect x="5.5" y="4.5" width="2" height="2" fill="#aaa"/><rect x="9.5" y="4.5" width="2" height="2" fill="#aaa"/><rect x="13.5" y="4.5" width="2" height="2" fill="#aaa"/><rect x="3.5" y="6.5" width="2" height="2" fill="#aaa"/><rect x="7.5" y="6.5" width="2" height="2" fill="#aaa"/><rect x="11.5" y="6.5" width="2" height="2" fill="#aaa"/><rect x="1.5" y="8.5" width="2" height="2" fill="#aaa"/><rect x="5.5" y="8.5" width="2" height="2" fill="#aaa"/><rect x="9.5" y="8.5" width="2" height="2" fill="#aaa"/><rect x="13.5" y="8.5" width="2" height="2" fill="#aaa"/><rect x="3.5" y="10.5" width="2" height="2" fill="#aaa"/><rect x="7.5" y="10.5" width="2" height="2" fill="#aaa"/><rect x="11.5" y="10.5" width="2" height="2" fill="#aaa"/><rect x="1.5" y="12.5" width="2" height="2" fill="#aaa"/><rect x="5.5" y="12.5" width="2" height="2" fill="#aaa"/><rect x="9.5" y="12.5" width="2" height="2" fill="#aaa"/><rect x="13.5" y="12.5" width="2" height="2" fill="#aaa"/><rect x="3.5" y="14.5" width="2" height="2" fill="#aaa"/><rect x="7.5" y="14.5" width="2" height="2" fill="#aaa"/><rect x="11.5" y="14.5" width="2" height="2" fill="#aaa"/><circle cx="13" cy="13" r="4" fill="#bbb" stroke="#888"/></svg>
<svg style="position:absolute;left:746.0px;top:93.0px;" width="18" height="18" viewBox="0 0 18 18"><rect x="1" y="2" width="16" height="15" fill="#ddd" stroke="#999"/><rect x="1.5" y="4.5" width="14" height="12" fill="#ddd"/><rect x="1.5" y="4.5" width="2" height="2" fill="#aaa"/><rect x="5.5" y="4.5" width="2" height="2" fill="#aaa"/><rect x="9.5" y="4.5" width="2" height="2" fill="#aaa"/><rect x="13.5" y="4.5" width="2" height="2" fill="#aaa"/><rect x="3.5" y="6.5" width="2" height="2" fill="#aaa"/><rect x="7.5" y="6.5" width="2" height="2" fill="#aaa"/><rect x="11.5" y="6.5" width="2" height="2" fill="#aaa"/><rect x="1.5" y="8.5" width="2" height="2" fill="#aaa"/><rect x="5.5" y="8.5" width="2" height="2" fill="#aaa"/><rect x="9.5" y="8.5" width="2" height="2" fill="#aaa"/><rect x="13.5" y="8.5" width="2" height="2" fill="#aaa"/><rect x="3.5" y="10.5" width="2" height="2" fill="#aaa"/><rect x="7.5" y="10.5" width="2" height="2" fill="#aaa"/><rect x="11.5" y="10.5" width="2" height="2" fill="#aaa"/><rect x="1.5" y="12.5" width="2" height="2" fill="#aaa"/><rect x="5.5" y="12.5" width="2" height="2" fill="#aaa"/><rect x="9.5" y="12.5" width="2" height="2" fill="#aaa"/><rect x="13.5" y="12.5" width="2" height="2" fill="#aaa"/><rect x="3.5" y="14.5" width="2" height="2" fill="#aaa"/><rect x="7.5" y="14.5" width="2" height="2" fill="#aaa"/><rect x="11.5" y="14.5" width="2" height="2" fill="#aaa"/><circle cx="13" cy="13" r="4" fill="#bbb" stroke="#888"/></svg>
<svg style="position:absolute;left:797.0px;top:93.0px;" width="18" height="18" viewBox="0 0 18 18"><rect x="1.5" y="1.5" width="15" height="11" fill="#fff" stroke="#1a6fd8" stroke-width="2.2"/><path d="M9,13 v3 M5,16.5 h8" stroke="#1a6fd8" stroke-width="2"/></svg>
<div style="left:826px;top:86px;width:28px;height:32px;background:#fff;border:1px solid #9a9a9a;"></div>
<svg style="position:absolute;left:830.0px;top:93.0px;" width="18" height="18" viewBox="0 0 18 18"><rect x="1.5" y="1.5" width="15" height="11" fill="#fff" stroke="#1a6fd8" stroke-width="2.2"/><path d="M9,13 v3 M5,16.5 h8" stroke="#1a6fd8" stroke-width="2"/><text x="2.5" y="17.5" font-size="11.5" font-weight="bold" fill="#ffc000" stroke="#222" stroke-width="0.7" font-family="Liberation Sans">24</text></svg>
<svg style="position:absolute;left:873.0px;top:93.0px;" width="18" height="18" viewBox="0 0 18 18"><rect x="1.5" y="1.5" width="15" height="13" fill="#fff" stroke="#333" stroke-width="1.4"/><rect x="1.5" y="1.5" width="15" height="2.5" fill="#1a5fb4"/><path d="M16,10 h-9 M10,7 l-3,3 l3,3" stroke="#1a5fb4" stroke-width="1.6" fill="none"/></svg>
<svg style="position:absolute;left:916.0px;top:93.0px;" width="18" height="18" viewBox="0 0 18 18"><rect x="1.5" y="1.5" width="15" height="11" fill="#fff" stroke="#1a6fd8" stroke-width="2.2"/><path d="M9,13 v3 M5,16.5 h8" stroke="#1a6fd8" stroke-width="2"/><circle cx="13" cy="13" r="4.5" fill="#d0281e"/><path d="M11,11 L15,15 M15,11 L11,15" stroke="#fff" stroke-width="1.4"/></svg>
<svg style="position:absolute;left:949.0px;top:93.0px;" width="18" height="18" viewBox="0 0 18 18"><rect x="1.5" y="1.5" width="15" height="13" fill="#fff" stroke="#333" stroke-width="1.4"/><rect x="1.5" y="1.5" width="15" height="2.5" fill="#1a5fb4"/><circle cx="13" cy="13" r="4.5" fill="#d0281e"/><path d="M11,11 L15,15 M15,11 L11,15" stroke="#fff" stroke-width="1.4"/></svg>
<svg style="position:absolute;left:992.0px;top:93.0px;" width="18" height="18" viewBox="0 0 18 18"><rect x="1.5" y="1.5" width="15" height="11" fill="#fff" stroke="#1a6fd8" stroke-width="2.2"/><path d="M9,13 v3 M5,16.5 h8" stroke="#1a6fd8" stroke-width="2"/><circle cx="13" cy="13" r="4.5" fill="#f0b000"/><circle cx="13" cy="13" r="1.2" fill="#222"/></svg>
<svg style="position:absolute;left:1025.0px;top:93.0px;" width="18" height="18" viewBox="0 0 18 18"><rect x="1.5" y="1.5" width="15" height="11" fill="#fff" stroke="#1a6fd8" stroke-width="2.2"/><path d="M9,13 v3 M5,16.5 h8" stroke="#1a6fd8" stroke-width="2"/><circle cx="13" cy="13" r="4.5" fill="#f0b000"/><circle cx="13" cy="13" r="1.2" fill="#222"/><polygon points="13,0 17,5 9,5" fill="#222"/></svg>
<svg style="position:absolute;left:1076.0px;top:93.0px;" width="18" height="18" viewBox="0 0 18 18"><polygon points="1,6 5,2 15,2 15,16 1,16" fill="#333"/><rect x="5" y="2" width="10" height="14" fill="#fff" stroke="#333"/><circle cx="12.5" cy="13" r="4.5" fill="#1f9d55"/><path d="M12.5,10.5 v5 M10,13 h5" stroke="#fff" stroke-width="1.4"/></svg>
<svg style="position:absolute;left:1109.0px;top:93.0px;" width="18" height="18" viewBox="0 0 18 18"><polygon points="1,6 5,2 15,2 15,16 1,16" fill="#999"/><rect x="5" y="2" width="10" height="14" fill="#eee" stroke="#999"/><path d="M7,14 L14,6" stroke="#999" stroke-width="2"/></svg>
<svg style="position:absolute;left:1142.0px;top:93.0px;" width="18" height="18" viewBox="0 0 18 18"><polygon points="1,6 5,2 15,2 15,16 1,16" fill="#999"/><rect x="5" y="2" width="10" height="14" fill="#eee" stroke="#999"/><circle cx="12.5" cy="13" r="4.5" fill="#ddd" stroke="#999"/><path d="M12.5,10.5 v5 M10,13 h5" stroke="#999" stroke-width="1.4"/></svg>
<svg style="position:absolute;left:1175.0px;top:93.0px;" width="18" height="18" viewBox="0 0 18 18"><polygon points="1,6 5,2 15,2 15,16 1,16" fill="#999"/><rect x="5" y="2" width="10" height="14" fill="#eee" stroke="#999"/><circle cx="12.5" cy="13" r="4.5" fill="#ddd" stroke="#999"/><path d="M12.5,10.5 v5 M10,13 h5" stroke="#999" stroke-width="1.4"/></svg>
<div style="left:0px;top:118px;width:1920px;height:1px;background:#3a3a3a;"></div>
<div style="left:0px;top:119px;width:1920px;height:927px;background:#404040;"></div>
<div style="left:0px;top:119px;width:26px;height:335px;background:#707070;"></div>
<div style="left:26px;top:119px;width:1px;height:927px;background:#4a4a4a;"></div>
<div style="left:0px;top:454px;width:26px;height:592px;background:#6f6f6f;"></div>
<div style="left:0px;top:454px;width:26px;height:121px;background:#545454;border:1px solid #464646;border-right:1px solid #3c3c3c;"></div>
<svg style="position:absolute;left:5px;top:555px;" width="16" height="16" viewBox="0 0 16 16"><polygon points="8,1 15,4.5 15,12 8,15.5 1,12 1,4.5" fill="#7ed23a" stroke="#2d5a10" stroke-width="0.8"/><polygon points="8,1 15,4.5 8,8 1,4.5" fill="#b6f070"/><polygon points="8,8 15,4.5 15,12 8,15.5" fill="#5aa82a"/></svg>
<div class="t" style="left:7.2px;top:549px;font-size:12.5px;line-height:12.5px;color:#dedede;font-family:'Liberation Sans',sans-serif;font-weight:normal;transform-origin:0 0;transform:rotate(-90deg);">Object Explorer</div>
<div style="left:0px;top:577px;width:26px;height:101px;background:#545454;border:1px solid #464646;border-right:1px solid #3c3c3c;"></div>
<svg style="position:absolute;left:5px;top:658px;" width="16" height="16" viewBox="0 0 16 16"><polygon points="1,1 10,1 15,6 15,15 1,15" fill="#15c8a8" stroke="#0a3a30" stroke-width="0.8"/><polygon points="10,1 15,6 10,6" fill="#8fead8"/></svg>
<div class="t" style="left:7.2px;top:652px;font-size:12.5px;line-height:12.5px;color:#dedede;font-family:'Liberation Sans',sans-serif;font-weight:normal;transform-origin:0 0;transform:rotate(-90deg);">Script Editor</div>
<div style="left:0px;top:680px;width:26px;height:113px;background:#545454;border:1px solid #464646;border-right:1px solid #3c3c3c;"></div>
<svg style="position:absolute;left:5px;top:773px;" width="16" height="16" viewBox="0 0 16 16"><rect x="1" y="1" width="14" height="14" fill="#4a9ef0" stroke="#1a3a60" stroke-width="0.8"/></svg>
<div class="t" style="left:7.2px;top:767px;font-size:12.5px;line-height:12.5px;color:#dedede;font-family:'Liberation Sans',sans-serif;font-weight:normal;transform-origin:0 0;transform:rotate(-90deg);">View Explorer</div>
<div style="left:0px;top:795px;width:26px;height:124px;background:#545454;border:1px solid #464646;border-right:1px solid #3c3c3c;"></div>
<svg style="position:absolute;left:5px;top:899px;" width="16" height="16" viewBox="0 0 16 16"><circle cx="8" cy="8" r="7" fill="#d060d8" stroke="#502060" stroke-width="0.8"/></svg>
<div class="t" style="left:7.2px;top:893px;font-size:12.5px;line-height:12.5px;color:#dedede;font-family:'Liberation Sans',sans-serif;font-weight:normal;transform-origin:0 0;transform:rotate(-90deg);">Format Explorer</div>
<div style="left:0px;top:921px;width:26px;height:125px;background:#545454;border:1px solid #464646;border-right:1px solid #3c3c3c;"></div>
<svg style="position:absolute;left:5px;top:1025px;" width="16" height="16" viewBox="0 0 16 16"><polygon points="8,1 15,12 8,15 1,12" fill="#f08030" stroke="#502010" stroke-width="0.8"/><path d="M8,1 V15" stroke="#502010" stroke-width="0.8"/></svg>
<div class="t" style="left:7.2px;top:1020px;font-size:12.5px;line-height:12.5px;color:#dedede;font-family:'Liberation Sans',sans-serif;font-weight:normal;transform-origin:0 0;transform:rotate(-90deg);">History Explorer</div>
<div style="left:1894px;top:119px;width:26px;height:927px;background:#707070;"></div>
<div style="left:1893px;top:119px;width:1px;height:927px;background:#4a4a4a;"></div>
<div style="left:1894px;top:119px;width:26px;height:128px;background:#545454;border:1px solid #464646;"></div>
<svg style="position:absolute;left:1899px;top:227px;" width="16" height="16" viewBox="0 0 16 16"><circle cx="8" cy="8" r="5" fill="none" stroke="#f0f0f0" stroke-width="2.2"/><rect x="6.8" y="0.5" width="2.4" height="3" fill="#f0f0f0" transform="rotate(0 8 8)"/><rect x="6.8" y="0.5" width="2.4" height="3" fill="#f0f0f0" transform="rotate(45 8 8)"/><rect x="6.8" y="0.5" width="2.4" height="3" fill="#f0f0f0" transform="rotate(90 8 8)"/><rect x="6.8" y="0.5" width="2.4" height="3" fill="#f0f0f0" transform="rotate(135 8 8)"/><rect x="6.8" y="0.5" width="2.4" height="3" fill="#f0f0f0" transform="rotate(180 8 8)"/><rect x="6.8" y="0.5" width="2.4" height="3" fill="#f0f0f0" transform="rotate(225 8 8)"/><rect x="6.8" y="0.5" width="2.4" height="3" fill="#f0f0f0" transform="rotate(270 8 8)"/><rect x="6.8" y="0.5" width="2.4" height="3" fill="#f0f0f0" transform="rotate(315 8 8)"/></svg>
<div class="t" style="left:1900.8px;top:222px;font-size:12.5px;line-height:12.5px;color:#dedede;font-family:'Liberation Sans',sans-serif;font-weight:normal;transform-origin:0 0;transform:rotate(-90deg);">Process Explorer</div>
<div style="left:1894px;top:816px;width:26px;height:125px;background:#545454;border:1px solid #464646;"></div>
<svg style="position:absolute;left:1899px;top:920px;" width="16" height="16" viewBox="0 0 16 16"><polygon points="1,3 15,8 1,13 4,8" fill="#e85a30" stroke="#401808" stroke-width="0.8"/><path d="M4,8 L15,8" stroke="#401808" stroke-width="0.6"/></svg>
<div class="t" style="left:1900.8px;top:916px;font-size:12.5px;line-height:12.5px;color:#dedede;font-family:'Liberation Sans',sans-serif;font-weight:normal;transform-origin:0 0;transform:rotate(-90deg);">Process Console</div>
<div style="left:1894px;top:943px;width:26px;height:103px;background:#545454;border:1px solid #464646;"></div>
<svg style="position:absolute;left:1898px;top:1025px;" width="18" height="18" viewBox="0 0 18 18"><path d="M2,4 Q9,1 16,4 V14 Q9,17 2,14 Z" fill="#d8c8a0" stroke="#554830" stroke-width="0.8"/><ellipse cx="9" cy="4" rx="7" ry="2.2" fill="#efe2c0" stroke="#554830" stroke-width="0.8"/></svg>
<div class="t" style="left:1900.8px;top:1021px;font-size:12.5px;line-height:12.5px;color:#dedede;font-family:'Liberation Sans',sans-serif;font-weight:normal;transform-origin:0 0;transform:rotate(-90deg);">File Explorer</div>
<div style="left:1726px;top:119px;width:1px;height:927px;background:#c0905c;"></div>
<div style="left:26px;top:119px;width:1093px;height:747px;background:#727272;border-top:1px solid #4a4a4a;border-left:1px solid #4a4a4a;"></div>
<div style="left:33px;top:125px;width:14px;height:14px;background:#c8d0ff;border:2px solid #c8d0ff;border-top-width:4px;"><div style="left:0;top:0;width:10px;height:8px;background:#6e6e6e;"></div></div>
<div class="t" style="left:41.5px;width:1000px;text-align:center;top:125.00px;font-size:13px;line-height:13px;color:#dedede;font-weight:bold;font-family:'Liberation Sans',sans-serif;transform:scaleX(1.125);">RGB 1:6 Image10 | &lt;*new*&gt;</div>
<svg style="position:absolute;left:1037px;top:127px;" width="12" height="12" viewBox="0 0 12 12"><rect x="1" y="5" width="10" height="3" fill="#f0f0f0"/></svg>
<svg style="position:absolute;left:1058px;top:127px;" width="12" height="12" viewBox="0 0 12 12"><rect x="1" y="1" width="10" height="2" fill="#f0f0f0"/><polygon points="6,3.5 11,10 1,10" fill="#f0f0f0"/></svg>
<svg style="position:absolute;left:1079px;top:127px;" width="12" height="12" viewBox="0 0 12 12"><path d="M6,1 V11 M1,6 H11" stroke="#f0f0f0" stroke-width="3"/></svg>
<svg style="position:absolute;left:1100px;top:127px;" width="12" height="12" viewBox="0 0 12 12"><path d="M1.5,1.5 L10.5,10.5 M10.5,1.5 L1.5,10.5" stroke="#f0f0f0" stroke-width="2"/></svg>
<svg style="position:absolute;left:51px;top:145px;" width="1066" height="716" viewBox="0 0 1066 716"><rect width="1066" height="716" fill="#1d1b20"/><circle cx="160.8" cy="53.4" r="0.5" fill="#c89060" opacity="0.48"/><circle cx="61.8" cy="41.6" r="0.8" fill="#c89060" opacity="0.18"/><circle cx="96.7" cy="34.8" r="0.6" fill="#d0a070" opacity="0.38"/><circle cx="621.5" cy="5.1" r="0.6" fill="#c0a070" opacity="0.31"/><circle cx="915.1" cy="23.7" r="0.9" fill="#9080d0" opacity="0.37"/><circle cx="870.0" cy="14.8" r="0.6" fill="#c0a070" opacity="0.38"/><circle cx="583.9" cy="5.1" r="0.8" fill="#c89060" opacity="0.40"/><circle cx="455.8" cy="25.8" r="0.7" fill="#c0a070" opacity="0.52"/><circle cx="846.8" cy="57.3" r="0.7" fill="#9080d0" opacity="0.18"/><circle cx="932.9" cy="59.8" r="0.5" fill="#b0a080" opacity="0.39"/><circle cx="445.7" cy="62.1" r="0.8" fill="#9080d0" opacity="0.52"/><circle cx="712.3" cy="62.7" r="0.7" fill="#c0a070" opacity="0.47"/><circle cx="373.3" cy="40.7" r="0.5" fill="#d0a070" opacity="0.33"/><circle cx="32.2" cy="475.5" r="0.7" fill="#c89060" opacity="0.44"/><circle cx="1058.6" cy="67.4" r="0.7" fill="#b0a080" opacity="0.44"/><circle cx="492.2" cy="13.8" r="0.6" fill="#c89060" opacity="0.35"/><circle cx="137.9" cy="20.3" r="0.8" fill="#a090c0" opacity="0.52"/><circle cx="478.8" cy="45.1" r="0.9" fill="#9080d0" opacity="0.48"/><circle cx="442.7" cy="29.4" r="0.6" fill="#a090c0" opacity="0.53"/><circle cx="161.3" cy="54.0" r="0.9" fill="#c89060" opacity="0.34"/><circle cx="300.5" cy="11.9" r="0.9" fill="#c0a070" opacity="0.30"/><circle cx="133.8" cy="70.5" r="0.5" fill="#c0a070" opacity="0.41"/><circle cx="928.5" cy="78.1" r="0.8" fill="#8070b0" opacity="0.47"/><circle cx="420.1" cy="39.5" r="0.5" fill="#a090c0" opacity="0.17"/><circle cx="30.0" cy="78.7" r="0.5" fill="#c0a070" opacity="0.17"/><circle cx="572.0" cy="77.8" r="0.6" fill="#c0a070" opacity="0.16"/><circle cx="158.4" cy="20.7" r="0.8" fill="#b0a080" opacity="0.39"/><circle cx="905.0" cy="81.4" r="0.7" fill="#a090c0" opacity="0.34"/><circle cx="108.9" cy="28.1" r="0.6" fill="#b0a080" opacity="0.34"/><circle cx="218.8" cy="78.1" r="0.9" fill="#b0a080" opacity="0.21"/><circle cx="51.6" cy="213.4" r="0.7" fill="#8070b0" opacity="0.50"/><circle cx="968.2" cy="29.2" r="0.9" fill="#9080d0" opacity="0.36"/><circle cx="237.8" cy="66.5" r="0.6" fill="#d0a070" opacity="0.49"/><circle cx="50.3" cy="162.3" r="0.5" fill="#c0a070" opacity="0.35"/><circle cx="53.7" cy="338.1" r="0.7" fill="#9080d0" opacity="0.43"/><circle cx="998.9" cy="81.0" r="0.5" fill="#b0a080" opacity="0.18"/><circle cx="209.7" cy="16.8" r="0.9" fill="#c0a070" opacity="0.54"/><circle cx="32.6" cy="467.5" r="0.5" fill="#d0a070" opacity="0.41"/><circle cx="53.2" cy="537.1" r="0.8" fill="#a090c0" opacity="0.51"/><circle cx="22.6" cy="573.4" r="0.8" fill="#8070b0" opacity="0.31"/><circle cx="90.5" cy="13.0" r="0.9" fill="#9080d0" opacity="0.16"/><circle cx="54.8" cy="104.7" r="0.8" fill="#d0a070" opacity="0.39"/><circle cx="373.5" cy="45.0" r="0.5" fill="#9080d0" opacity="0.16"/><circle cx="995.2" cy="35.6" r="0.6" fill="#d0a070" opacity="0.23"/><circle cx="226.8" cy="41.1" r="0.7" fill="#d0a070" opacity="0.38"/><circle cx="889.3" cy="5.0" r="0.8" fill="#8070b0" opacity="0.29"/><circle cx="868.8" cy="42.4" r="0.9" fill="#d0a070" opacity="0.52"/><circle cx="161.9" cy="41.9" r="0.6" fill="#d0a070" opacity="0.33"/><circle cx="827.3" cy="12.3" r="0.5" fill="#9080d0" opacity="0.34"/><circle cx="347.5" cy="42.5" r="0.5" fill="#c0a070" opacity="0.34"/><circle cx="3.9" cy="137.0" r="0.9" fill="#c89060" opacity="0.46"/><circle cx="29.7" cy="73.3" r="0.9" fill="#c89060" opacity="0.33"/><circle cx="41.2" cy="142.8" r="0.9" fill="#b0a080" opacity="0.33"/><circle cx="34.5" cy="177.3" r="0.7" fill="#c0a070" opacity="0.50"/><circle cx="60.7" cy="145.1" r="0.5" fill="#a090c0" opacity="0.20"/><circle cx="336.8" cy="55.0" r="0.7" fill="#a090c0" opacity="0.18"/><circle cx="61.0" cy="110.6" r="0.7" fill="#8070b0" opacity="0.41"/><circle cx="941.1" cy="79.3" r="0.5" fill="#9080d0" opacity="0.45"/><circle cx="519.4" cy="81.2" r="0.8" fill="#d0a070" opacity="0.24"/><circle cx="27.5" cy="301.6" r="0.7" fill="#b0a080" opacity="0.28"/><circle cx="590.6" cy="36.1" r="0.9" fill="#c89060" opacity="0.30"/><circle cx="546.1" cy="5.3" r="0.5" fill="#d0a070" opacity="0.24"/><circle cx="289.9" cy="74.3" r="0.6" fill="#9080d0" opacity="0.26"/><circle cx="57.8" cy="484.0" r="0.9" fill="#b0a080" opacity="0.31"/><circle cx="38.8" cy="501.5" r="0.6" fill="#c89060" opacity="0.26"/><circle cx="77.2" cy="76.9" r="0.7" fill="#8070b0" opacity="0.19"/><circle cx="912.7" cy="5.5" r="0.5" fill="#d0a070" opacity="0.20"/><circle cx="589.6" cy="76.0" r="0.5" fill="#b0a080" opacity="0.40"/><circle cx="254.2" cy="9.0" r="0.6" fill="#9080d0" opacity="0.25"/><circle cx="332.6" cy="25.0" r="0.8" fill="#d0a070" opacity="0.23"/><circle cx="189.6" cy="28.5" r="0.5" fill="#c89060" opacity="0.55"/><circle cx="781.5" cy="45.2" r="0.6" fill="#9080d0" opacity="0.36"/><circle cx="7.2" cy="586.3" r="0.9" fill="#a090c0" opacity="0.41"/><circle cx="26.7" cy="362.8" r="0.6" fill="#8070b0" opacity="0.24"/><circle cx="887.2" cy="58.0" r="0.7" fill="#8070b0" opacity="0.21"/><circle cx="56.9" cy="10.2" r="0.7" fill="#8070b0" opacity="0.45"/><circle cx="59.1" cy="54.5" r="0.7" fill="#a090c0" opacity="0.50"/><circle cx="738.4" cy="3.7" r="0.8" fill="#9080d0" opacity="0.21"/><circle cx="388.2" cy="27.0" r="0.5" fill="#c0a070" opacity="0.28"/><circle cx="21.0" cy="255.3" r="0.5" fill="#c89060" opacity="0.28"/><circle cx="535.9" cy="16.5" r="0.5" fill="#c0a070" opacity="0.46"/><circle cx="95.7" cy="32.8" r="0.7" fill="#c89060" opacity="0.31"/><circle cx="248.2" cy="48.0" r="0.6" fill="#c0a070" opacity="0.49"/><circle cx="763.2" cy="72.1" r="0.8" fill="#a090c0" opacity="0.46"/><circle cx="772.0" cy="52.7" r="0.9" fill="#c89060" opacity="0.48"/><circle cx="782.3" cy="66.6" r="0.9" fill="#9080d0" opacity="0.51"/><circle cx="866.6" cy="1.3" r="0.6" fill="#8070b0" opacity="0.38"/><circle cx="44.6" cy="52.2" r="0.8" fill="#c89060" opacity="0.30"/><circle cx="669.2" cy="51.4" r="0.7" fill="#8070b0" opacity="0.25"/><circle cx="850.3" cy="61.4" r="0.5" fill="#c0a070" opacity="0.51"/><circle cx="70.4" cy="60.4" r="0.7" fill="#b0a080" opacity="0.47"/><circle cx="806.4" cy="18.9" r="0.8" fill="#8070b0" opacity="0.54"/><circle cx="5.2" cy="651.9" r="0.9" fill="#b0a080" opacity="0.46"/><circle cx="211.4" cy="49.2" r="0.7" fill="#b0a080" opacity="0.25"/><circle cx="142.2" cy="39.6" r="0.5" fill="#a090c0" opacity="0.26"/><circle cx="720.3" cy="23.9" r="0.8" fill="#c0a070" opacity="0.26"/><circle cx="126.3" cy="73.3" r="0.5" fill="#9080d0" opacity="0.27"/><circle cx="1.2" cy="328.6" r="0.8" fill="#d0a070" opacity="0.35"/><circle cx="26.3" cy="656.3" r="0.5" fill="#9080d0" opacity="0.18"/><circle cx="558.7" cy="78.1" r="0.9" fill="#9080d0" opacity="0.39"/><circle cx="120.1" cy="29.9" r="0.8" fill="#a090c0" opacity="0.51"/><circle cx="169.6" cy="77.9" r="0.7" fill="#8070b0" opacity="0.33"/><circle cx="443.6" cy="30.8" r="0.5" fill="#c89060" opacity="0.49"/><circle cx="360.6" cy="32.7" r="0.7" fill="#9080d0" opacity="0.44"/><circle cx="69.3" cy="32.0" r="0.7" fill="#d0a070" opacity="0.39"/><circle cx="51.4" cy="611.6" r="0.7" fill="#b0a080" opacity="0.19"/><circle cx="158.7" cy="79.6" r="0.6" fill="#a090c0" opacity="0.35"/><circle cx="837.0" cy="35.1" r="0.8" fill="#c89060" opacity="0.47"/><circle cx="64.0" cy="393.2" r="0.8" fill="#8070b0" opacity="0.18"/><circle cx="802.3" cy="52.8" r="0.9" fill="#b0a080" opacity="0.34"/><circle cx="503.3" cy="28.2" r="0.7" fill="#b0a080" opacity="0.25"/><circle cx="254.4" cy="39.6" r="0.6" fill="#8070b0" opacity="0.31"/><circle cx="80.1" cy="41.0" r="0.6" fill="#d0a070" opacity="0.35"/><circle cx="354.8" cy="62.3" r="0.6" fill="#a090c0" opacity="0.21"/><circle cx="186.2" cy="45.6" r="0.7" fill="#b0a080" opacity="0.25"/><circle cx="13.7" cy="14.4" r="0.8" fill="#d0a070" opacity="0.32"/><circle cx="223.9" cy="22.2" r="0.7" fill="#d0a070" opacity="0.17"/><circle cx="383.9" cy="56.3" r="0.6" fill="#c0a070" opacity="0.40"/><circle cx="956.0" cy="31.5" r="0.7" fill="#8070b0" opacity="0.33"/><circle cx="59.4" cy="15.6" r="0.8" fill="#c89060" opacity="0.32"/><circle cx="33.3" cy="52.4" r="0.8" fill="#d0a070" opacity="0.36"/><circle cx="16.9" cy="78.1" r="0.5" fill="#9080d0" opacity="0.21"/><circle cx="49.1" cy="463.5" r="0.5" fill="#d0a070" opacity="0.51"/><circle cx="42.2" cy="64.1" r="0.5" fill="#9080d0" opacity="0.38"/><circle cx="323.8" cy="10.5" r="0.8" fill="#b0a080" opacity="0.36"/><circle cx="119.5" cy="5.8" r="0.6" fill="#c0a070" opacity="0.53"/><circle cx="238.3" cy="49.3" r="0.8" fill="#c89060" opacity="0.36"/><circle cx="337.2" cy="68.8" r="0.6" fill="#9080d0" opacity="0.34"/><circle cx="31.2" cy="33.8" r="0.5" fill="#8070b0" opacity="0.27"/><circle cx="943.2" cy="53.1" r="0.8" fill="#c89060" opacity="0.25"/><circle cx="15.4" cy="24.4" r="0.7" fill="#b0a080" opacity="0.44"/><circle cx="211.2" cy="65.4" r="0.5" fill="#8070b0" opacity="0.49"/><circle cx="1033.9" cy="25.6" r="0.8" fill="#d0a070" opacity="0.23"/><circle cx="810.7" cy="24.2" r="0.6" fill="#c0a070" opacity="0.35"/><circle cx="33.0" cy="651.8" r="0.6" fill="#c89060" opacity="0.53"/><circle cx="3.7" cy="16.9" r="0.5" fill="#c0a070" opacity="0.21"/><circle cx="196.3" cy="36.9" r="0.5" fill="#8070b0" opacity="0.50"/><circle cx="63.3" cy="235.7" r="0.9" fill="#9080d0" opacity="0.41"/><circle cx="34.0" cy="54.5" r="0.7" fill="#a090c0" opacity="0.49"/><circle cx="116.1" cy="6.4" r="0.5" fill="#c89060" opacity="0.29"/><circle cx="808.9" cy="31.2" r="0.8" fill="#d0a070" opacity="0.48"/><circle cx="751.8" cy="16.0" r="0.6" fill="#c0a070" opacity="0.52"/><circle cx="786.0" cy="38.9" r="0.8" fill="#8070b0" opacity="0.31"/><circle cx="37.2" cy="5.1" r="0.5" fill="#c89060" opacity="0.25"/><circle cx="23.1" cy="195.0" r="0.7" fill="#c0a070" opacity="0.17"/><circle cx="20.2" cy="516.6" r="0.5" fill="#c0a070" opacity="0.52"/><circle cx="249.3" cy="39.0" r="0.8" fill="#a090c0" opacity="0.53"/><circle cx="62.1" cy="583.4" r="0.6" fill="#9080d0" opacity="0.52"/><circle cx="992.5" cy="24.9" r="0.9" fill="#8070b0" opacity="0.46"/><circle cx="918.1" cy="37.8" r="0.5" fill="#d0a070" opacity="0.46"/><circle cx="417.5" cy="13.1" r="0.5" fill="#a090c0" opacity="0.18"/><circle cx="580.6" cy="13.2" r="0.5" fill="#a090c0" opacity="0.50"/><circle cx="89.6" cy="7.9" r="0.8" fill="#a090c0" opacity="0.55"/><circle cx="141.7" cy="37.8" r="0.9" fill="#8070b0" opacity="0.24"/><circle cx="45.2" cy="86.8" r="0.7" fill="#d0a070" opacity="0.27"/><circle cx="397.6" cy="60.5" r="0.6" fill="#9080d0" opacity="0.33"/><circle cx="163.4" cy="72.5" r="0.5" fill="#c0a070" opacity="0.23"/><circle cx="1058.0" cy="41.6" r="0.5" fill="#9080d0" opacity="0.41"/><circle cx="1056.4" cy="8.4" r="0.6" fill="#a090c0" opacity="0.50"/><circle cx="62.2" cy="28.9" r="0.5" fill="#b0a080" opacity="0.24"/><circle cx="1037.2" cy="47.8" r="0.6" fill="#c89060" opacity="0.30"/><circle cx="277.1" cy="63.8" r="0.9" fill="#c89060" opacity="0.19"/><circle cx="372.8" cy="3.1" r="0.6" fill="#b0a080" opacity="0.21"/><circle cx="2.6" cy="524.3" r="0.7" fill="#9080d0" opacity="0.48"/><circle cx="396.3" cy="50.9" r="0.8" fill="#c89060" opacity="0.23"/><circle cx="67.4" cy="8.3" r="0.6" fill="#a090c0" opacity="0.42"/><circle cx="97.2" cy="13.4" r="0.7" fill="#8070b0" opacity="0.26"/><circle cx="445.4" cy="4.2" r="0.7" fill="#8070b0" opacity="0.38"/><circle cx="19.4" cy="62.9" r="0.6" fill="#d0a070" opacity="0.30"/><circle cx="431.7" cy="77.2" r="0.8" fill="#a090c0" opacity="0.51"/><circle cx="96.5" cy="47.4" r="0.6" fill="#b0a080" opacity="0.33"/><circle cx="55.1" cy="11.7" r="0.5" fill="#d0a070" opacity="0.51"/><circle cx="988.4" cy="60.5" r="0.7" fill="#9080d0" opacity="0.21"/><circle cx="183.1" cy="5.5" r="0.6" fill="#a090c0" opacity="0.35"/><circle cx="892.6" cy="3.6" r="0.9" fill="#a090c0" opacity="0.28"/><circle cx="26.4" cy="647.4" r="0.6" fill="#c0a070" opacity="0.43"/><circle cx="913.1" cy="50.9" r="0.8" fill="#c0a070" opacity="0.49"/><circle cx="232.5" cy="32.8" r="0.7" fill="#c0a070" opacity="0.21"/><circle cx="263.4" cy="59.4" r="0.9" fill="#9080d0" opacity="0.17"/><circle cx="45.7" cy="478.2" r="0.9" fill="#b0a080" opacity="0.20"/><circle cx="905.0" cy="63.8" r="0.9" fill="#8070b0" opacity="0.32"/><circle cx="414.9" cy="30.1" r="0.5" fill="#c0a070" opacity="0.33"/><circle cx="1051.2" cy="38.2" r="0.8" fill="#a090c0" opacity="0.46"/><circle cx="55.1" cy="286.6" r="0.8" fill="#c89060" opacity="0.20"/><circle cx="855.2" cy="41.4" r="0.6" fill="#8070b0" opacity="0.17"/><circle cx="781.9" cy="63.8" r="0.9" fill="#c0a070" opacity="0.18"/><circle cx="44.4" cy="561.5" r="0.9" fill="#c89060" opacity="0.49"/><circle cx="868.8" cy="15.9" r="0.6" fill="#a090c0" opacity="0.27"/><circle cx="768.7" cy="18.1" r="0.7" fill="#d0a070" opacity="0.29"/><circle cx="955.7" cy="22.5" r="0.7" fill="#d0a070" opacity="0.33"/><circle cx="980.6" cy="17.1" r="0.6" fill="#b0a080" opacity="0.40"/><circle cx="39.3" cy="14.9" r="0.7" fill="#9080d0" opacity="0.40"/><circle cx="954.5" cy="13.8" r="0.9" fill="#d0a070" opacity="0.26"/><circle cx="914.9" cy="79.2" r="0.9" fill="#a090c0" opacity="0.37"/><circle cx="955.2" cy="20.7" r="0.8" fill="#c0a070" opacity="0.40"/><circle cx="396.0" cy="30.8" r="0.7" fill="#b0a080" opacity="0.38"/><circle cx="86.8" cy="18.9" r="0.5" fill="#c0a070" opacity="0.45"/><circle cx="550.2" cy="25.4" r="0.7" fill="#d0a070" opacity="0.38"/><circle cx="796.4" cy="18.2" r="0.8" fill="#b0a080" opacity="0.40"/><circle cx="388.1" cy="3.9" r="0.5" fill="#a090c0" opacity="0.24"/><circle cx="2.8" cy="29.1" r="0.9" fill="#c89060" opacity="0.36"/><circle cx="622.1" cy="48.3" r="0.8" fill="#9080d0" opacity="0.30"/><circle cx="15.0" cy="65.7" r="0.5" fill="#8070b0" opacity="0.21"/><circle cx="154.2" cy="54.6" r="0.7" fill="#b0a080" opacity="0.31"/><circle cx="3.8" cy="587.8" r="0.9" fill="#b0a080" opacity="0.39"/><circle cx="999.0" cy="60.1" r="0.5" fill="#9080d0" opacity="0.22"/><circle cx="566.6" cy="33.3" r="0.5" fill="#9080d0" opacity="0.21"/><circle cx="587.3" cy="77.2" r="0.9" fill="#9080d0" opacity="0.32"/><circle cx="540.4" cy="52.6" r="0.9" fill="#d0a070" opacity="0.40"/><circle cx="320.1" cy="4.0" r="0.9" fill="#8070b0" opacity="0.46"/><circle cx="900.2" cy="61.1" r="0.8" fill="#a090c0" opacity="0.18"/><circle cx="1062.4" cy="21.4" r="0.7" fill="#8070b0" opacity="0.17"/><circle cx="62.9" cy="675.1" r="0.7" fill="#b0a080" opacity="0.43"/><circle cx="724.1" cy="56.2" r="0.7" fill="#c0a070" opacity="0.54"/><circle cx="1028.8" cy="17.8" r="0.7" fill="#c0a070" opacity="0.16"/><circle cx="57.2" cy="145.2" r="0.7" fill="#9080d0" opacity="0.45"/><circle cx="414.4" cy="49.3" r="0.9" fill="#a090c0" opacity="0.51"/><circle cx="895.1" cy="57.2" r="0.6" fill="#d0a070" opacity="0.16"/><circle cx="328.1" cy="17.4" r="0.9" fill="#c0a070" opacity="0.38"/><circle cx="9.8" cy="19.3" r="0.6" fill="#c89060" opacity="0.40"/><circle cx="151.2" cy="2.4" r="0.5" fill="#c89060" opacity="0.21"/><circle cx="785.4" cy="5.4" r="0.6" fill="#c0a070" opacity="0.45"/><circle cx="55.7" cy="638.2" r="0.8" fill="#c89060" opacity="0.50"/><circle cx="219.3" cy="9.2" r="0.5" fill="#c89060" opacity="0.53"/><circle cx="42.9" cy="205.8" r="0.6" fill="#c89060" opacity="0.20"/><circle cx="358.7" cy="21.4" r="0.7" fill="#b0a080" opacity="0.25"/><circle cx="810.0" cy="74.6" r="0.9" fill="#d0a070" opacity="0.54"/><circle cx="306.6" cy="61.1" r="0.8" fill="#d0a070" opacity="0.32"/><circle cx="104.8" cy="38.5" r="0.6" fill="#c89060" opacity="0.37"/><circle cx="882.5" cy="47.1" r="0.5" fill="#b0a080" opacity="0.22"/><circle cx="307.4" cy="61.5" r="0.8" fill="#c89060" opacity="0.15"/><circle cx="741.1" cy="67.7" r="0.9" fill="#a090c0" opacity="0.39"/><circle cx="1006.2" cy="23.3" r="0.6" fill="#9080d0" opacity="0.53"/><circle cx="117.2" cy="52.2" r="0.9" fill="#c89060" opacity="0.35"/><circle cx="42.7" cy="254.6" r="0.5" fill="#a090c0" opacity="0.52"/><circle cx="688.5" cy="30.5" r="0.9" fill="#b0a080" opacity="0.26"/><circle cx="404.3" cy="72.5" r="0.6" fill="#9080d0" opacity="0.53"/><circle cx="804.3" cy="61.7" r="0.9" fill="#8070b0" opacity="0.16"/><circle cx="165.6" cy="69.1" r="0.7" fill="#8070b0" opacity="0.37"/><circle cx="467.8" cy="63.4" r="0.7" fill="#c0a070" opacity="0.24"/><circle cx="943.5" cy="19.5" r="0.9" fill="#9080d0" opacity="0.26"/><circle cx="166.3" cy="20.3" r="0.7" fill="#b0a080" opacity="0.39"/><circle cx="349.7" cy="15.5" r="0.6" fill="#8070b0" opacity="0.55"/><circle cx="6.9" cy="275.1" r="0.7" fill="#9080d0" opacity="0.47"/><circle cx="209.1" cy="52.3" r="0.8" fill="#c89060" opacity="0.26"/><circle cx="13.5" cy="70.1" r="0.9" fill="#a090c0" opacity="0.43"/><circle cx="20.1" cy="15.8" r="0.8" fill="#b0a080" opacity="0.39"/><circle cx="258.3" cy="69.9" r="0.8" fill="#8070b0" opacity="0.38"/><circle cx="45.4" cy="467.2" r="0.9" fill="#d0a070" opacity="0.41"/><circle cx="46.2" cy="459.3" r="0.7" fill="#a090c0" opacity="0.32"/><circle cx="104.3" cy="34.4" r="0.6" fill="#d0a070" opacity="0.31"/><circle cx="451.5" cy="37.3" r="0.9" fill="#c0a070" opacity="0.49"/><circle cx="991.6" cy="15.0" r="0.5" fill="#8070b0" opacity="0.28"/><circle cx="522.2" cy="79.9" r="0.6" fill="#c89060" opacity="0.25"/><circle cx="833.4" cy="77.1" r="0.9" fill="#c0a070" opacity="0.29"/><circle cx="218.5" cy="39.0" r="0.7" fill="#c89060" opacity="0.41"/><circle cx="437.4" cy="77.7" r="0.6" fill="#9080d0" opacity="0.55"/><circle cx="813.0" cy="10.0" r="0.5" fill="#c0a070" opacity="0.29"/><circle cx="407.0" cy="5.0" r="0.8" fill="#c89060" opacity="0.32"/><circle cx="719.4" cy="47.6" r="0.8" fill="#c89060" opacity="0.24"/><circle cx="35.8" cy="156.7" r="0.8" fill="#d0a070" opacity="0.53"/><circle cx="137.8" cy="63.7" r="0.6" fill="#d0a070" opacity="0.47"/><circle cx="599.1" cy="18.5" r="0.8" fill="#9080d0" opacity="0.29"/><circle cx="313.8" cy="45.0" r="0.8" fill="#9080d0" opacity="0.46"/><circle cx="906.8" cy="21.9" r="0.8" fill="#a090c0" opacity="0.42"/><circle cx="513.4" cy="66.0" r="0.6" fill="#d0a070" opacity="0.26"/><circle cx="341.5" cy="39.8" r="0.7" fill="#c0a070" opacity="0.40"/><circle cx="323.2" cy="31.6" r="0.7" fill="#c89060" opacity="0.48"/><circle cx="9.5" cy="595.2" r="0.5" fill="#8070b0" opacity="0.38"/><circle cx="76.8" cy="24.0" r="0.6" fill="#c0a070" opacity="0.19"/><circle cx="12.6" cy="323.6" r="0.8" fill="#d0a070" opacity="0.21"/><circle cx="11.4" cy="638.1" r="0.5" fill="#c0a070" opacity="0.54"/><circle cx="952.9" cy="64.6" r="0.8" fill="#d0a070" opacity="0.27"/><circle cx="565.8" cy="60.8" r="0.5" fill="#a090c0" opacity="0.42"/><circle cx="282.0" cy="19.2" r="0.9" fill="#9080d0" opacity="0.34"/><circle cx="497.9" cy="11.8" r="0.6" fill="#a090c0" opacity="0.25"/><circle cx="919.8" cy="0.5" r="0.9" fill="#d0a070" opacity="0.28"/><circle cx="316.4" cy="38.2" r="0.5" fill="#a090c0" opacity="0.32"/><circle cx="384.2" cy="53.0" r="0.7" fill="#c89060" opacity="0.39"/><circle cx="6.4" cy="346.7" r="0.5" fill="#d0a070" opacity="0.51"/><circle cx="443.0" cy="10.4" r="0.7" fill="#c89060" opacity="0.49"/><circle cx="829.9" cy="45.4" r="0.7" fill="#9080d0" opacity="0.26"/><circle cx="590.6" cy="67.8" r="0.8" fill="#b0a080" opacity="0.29"/><circle cx="537.0" cy="22.3" r="0.6" fill="#c0a070" opacity="0.29"/><circle cx="844.2" cy="27.1" r="0.6" fill="#b0a080" opacity="0.44"/><circle cx="676.7" cy="64.3" r="0.9" fill="#c89060" opacity="0.31"/><circle cx="37.1" cy="35.6" r="0.5" fill="#b0a080" opacity="0.19"/><circle cx="982.2" cy="49.9" r="0.9" fill="#8070b0" opacity="0.17"/><circle cx="41.6" cy="441.6" r="0.9" fill="#8070b0" opacity="0.42"/><circle cx="5.6" cy="28.3" r="0.6" fill="#8070b0" opacity="0.33"/><circle cx="193.3" cy="3.0" r="0.5" fill="#d0a070" opacity="0.19"/><circle cx="876.9" cy="64.5" r="0.7" fill="#c0a070" opacity="0.43"/><circle cx="36.5" cy="1.7" r="0.5" fill="#c0a070" opacity="0.41"/><circle cx="556.6" cy="67.6" r="0.9" fill="#d0a070" opacity="0.47"/><circle cx="431.4" cy="5.5" r="0.9" fill="#8070b0" opacity="0.30"/><circle cx="44.8" cy="111.2" r="0.5" fill="#d0a070" opacity="0.31"/><circle cx="503.4" cy="73.5" r="0.5" fill="#8070b0" opacity="0.16"/><circle cx="713.5" cy="80.9" r="0.5" fill="#d0a070" opacity="0.19"/><circle cx="19.0" cy="59.0" r="0.6" fill="#9080d0" opacity="0.33"/><circle cx="24.9" cy="535.0" r="0.5" fill="#8070b0" opacity="0.49"/><circle cx="594.3" cy="40.8" r="0.7" fill="#8070b0" opacity="0.52"/><circle cx="3.6" cy="22.9" r="0.9" fill="#c89060" opacity="0.16"/><circle cx="331.6" cy="59.8" r="0.8" fill="#9080d0" opacity="0.53"/><circle cx="337.2" cy="77.8" r="0.6" fill="#8070b0" opacity="0.33"/><circle cx="850.0" cy="29.8" r="0.8" fill="#8070b0" opacity="0.22"/><circle cx="829.4" cy="37.1" r="0.9" fill="#b0a080" opacity="0.46"/><circle cx="298.4" cy="51.0" r="0.9" fill="#8070b0" opacity="0.43"/><circle cx="645.8" cy="80.2" r="0.7" fill="#d0a070" opacity="0.21"/><circle cx="1040.8" cy="20.2" r="0.9" fill="#a090c0" opacity="0.42"/><circle cx="249.8" cy="37.0" r="0.7" fill="#8070b0" opacity="0.15"/><circle cx="167.7" cy="75.5" r="0.5" fill="#d0a070" opacity="0.50"/><circle cx="150.0" cy="73.0" r="0.9" fill="#c0a070" opacity="0.21"/><circle cx="974.1" cy="28.4" r="0.8" fill="#c89060" opacity="0.37"/><circle cx="13.6" cy="537.1" r="0.5" fill="#9080d0" opacity="0.27"/><circle cx="496.0" cy="16.9" r="0.5" fill="#b0a080" opacity="0.38"/><circle cx="31.3" cy="62.8" r="0.5" fill="#d0a070" opacity="0.29"/><circle cx="617.8" cy="73.5" r="0.8" fill="#d0a070" opacity="0.36"/><circle cx="215.2" cy="17.4" r="0.7" fill="#c89060" opacity="0.22"/><circle cx="601.7" cy="33.0" r="0.6" fill="#c0a070" opacity="0.49"/><circle cx="1063.0" cy="30.7" r="0.8" fill="#c89060" opacity="0.30"/><circle cx="10.6" cy="427.6" r="0.9" fill="#b0a080" opacity="0.26"/><circle cx="35.8" cy="81.2" r="0.9" fill="#d0a070" opacity="0.38"/><circle cx="278.9" cy="63.9" r="0.8" fill="#a090c0" opacity="0.19"/><circle cx="872.9" cy="79.0" r="0.7" fill="#b0a080" opacity="0.49"/><circle cx="192.7" cy="6.9" r="0.7" fill="#c89060" opacity="0.16"/><circle cx="31.2" cy="678.2" r="0.8" fill="#c89060" opacity="0.50"/><circle cx="48.0" cy="64.4" r="0.5" fill="#b0a080" opacity="0.38"/><circle cx="45.5" cy="281.5" r="0.7" fill="#a090c0" opacity="0.49"/><circle cx="67.4" cy="158.8" r="0.7" fill="#c89060" opacity="0.53"/><circle cx="589.3" cy="2.3" r="0.9" fill="#c89060" opacity="0.25"/><circle cx="689.4" cy="80.8" r="0.7" fill="#c89060" opacity="0.19"/><circle cx="1001.4" cy="55.5" r="0.8" fill="#b0a080" opacity="0.39"/><circle cx="112.4" cy="26.6" r="0.7" fill="#b0a080" opacity="0.31"/><circle cx="179.7" cy="19.6" r="0.5" fill="#9080d0" opacity="0.52"/><circle cx="972.8" cy="65.5" r="0.6" fill="#9080d0" opacity="0.52"/><circle cx="659.5" cy="30.6" r="0.8" fill="#8070b0" opacity="0.21"/><circle cx="63.0" cy="275.7" r="0.8" fill="#c89060" opacity="0.40"/><circle cx="21.9" cy="167.5" r="0.6" fill="#c89060" opacity="0.40"/><circle cx="784.6" cy="14.8" r="0.6" fill="#a090c0" opacity="0.37"/><circle cx="159.3" cy="34.3" r="0.7" fill="#9080d0" opacity="0.21"/><circle cx="316.1" cy="65.9" r="0.7" fill="#b0a080" opacity="0.35"/><circle cx="514.3" cy="12.6" r="0.6" fill="#c0a070" opacity="0.17"/><circle cx="890.4" cy="9.8" r="0.7" fill="#d0a070" opacity="0.23"/><circle cx="278.8" cy="19.6" r="0.7" fill="#9080d0" opacity="0.19"/><circle cx="172.9" cy="68.3" r="0.5" fill="#b0a080" opacity="0.21"/><circle cx="541.3" cy="41.9" r="0.9" fill="#a090c0" opacity="0.15"/><circle cx="383.9" cy="3.3" r="0.9" fill="#a090c0" opacity="0.24"/><circle cx="899.0" cy="42.8" r="0.6" fill="#9080d0" opacity="0.43"/><circle cx="883.7" cy="72.9" r="0.7" fill="#8070b0" opacity="0.35"/><circle cx="146.1" cy="54.9" r="0.9" fill="#8070b0" opacity="0.47"/><circle cx="10.7" cy="56.8" r="0.5" fill="#c0a070" opacity="0.31"/><circle cx="370.6" cy="23.1" r="0.8" fill="#8070b0" opacity="0.50"/><circle cx="436.5" cy="62.6" r="0.7" fill="#9080d0" opacity="0.50"/><circle cx="600.3" cy="80.8" r="0.7" fill="#c89060" opacity="0.22"/><circle cx="914.7" cy="29.2" r="0.5" fill="#a090c0" opacity="0.54"/><circle cx="761.8" cy="67.0" r="0.8" fill="#d0a070" opacity="0.52"/><circle cx="957.3" cy="23.9" r="0.8" fill="#c89060" opacity="0.53"/><circle cx="27.3" cy="66.0" r="0.5" fill="#9080d0" opacity="0.16"/><circle cx="194.4" cy="8.4" r="0.5" fill="#b0a080" opacity="0.37"/><circle cx="987.4" cy="60.6" r="0.9" fill="#b0a080" opacity="0.16"/><circle cx="494.6" cy="19.5" r="0.5" fill="#a090c0" opacity="0.19"/><circle cx="48.2" cy="10.1" r="0.7" fill="#a090c0" opacity="0.38"/><circle cx="129.6" cy="72.5" r="0.6" fill="#c0a070" opacity="0.39"/><circle cx="610.6" cy="61.2" r="0.5" fill="#9080d0" opacity="0.53"/><circle cx="26.4" cy="301.1" r="0.5" fill="#d0a070" opacity="0.39"/><circle cx="1003.4" cy="63.7" r="0.7" fill="#b0a080" opacity="0.31"/><circle cx="898.7" cy="46.3" r="0.9" fill="#b0a080" opacity="0.48"/><circle cx="551.5" cy="78.5" r="0.8" fill="#b0a080" opacity="0.25"/><circle cx="12.3" cy="8.9" r="0.8" fill="#9080d0" opacity="0.18"/><circle cx="713.3" cy="18.5" r="0.8" fill="#a090c0" opacity="0.54"/><circle cx="862.7" cy="72.5" r="0.9" fill="#c89060" opacity="0.16"/><circle cx="723.2" cy="22.4" r="0.5" fill="#c0a070" opacity="0.47"/><circle cx="267.1" cy="42.7" r="0.5" fill="#a090c0" opacity="0.24"/><circle cx="325.6" cy="53.1" r="0.9" fill="#c89060" opacity="0.17"/><circle cx="5.7" cy="422.6" r="0.9" fill="#9080d0" opacity="0.33"/><circle cx="313.0" cy="33.3" r="0.5" fill="#b0a080" opacity="0.26"/><circle cx="306.1" cy="37.2" r="0.8" fill="#8070b0" opacity="0.38"/><circle cx="757.2" cy="37.8" r="0.8" fill="#c0a070" opacity="0.27"/><circle cx="331.0" cy="19.9" r="0.9" fill="#9080d0" opacity="0.23"/><circle cx="624.3" cy="1.0" r="0.6" fill="#b0a080" opacity="0.21"/><circle cx="347.0" cy="22.1" r="0.5" fill="#9080d0" opacity="0.27"/><circle cx="71.2" cy="71.4" r="0.9" fill="#a090c0" opacity="0.41"/><circle cx="468.9" cy="60.3" r="0.6" fill="#c89060" opacity="0.36"/><circle cx="712.3" cy="11.5" r="0.7" fill="#9080d0" opacity="0.40"/><circle cx="35.2" cy="529.0" r="0.8" fill="#8070b0" opacity="0.52"/><circle cx="672.3" cy="51.8" r="0.5" fill="#8070b0" opacity="0.20"/><circle cx="816.2" cy="48.0" r="0.9" fill="#a090c0" opacity="0.31"/><circle cx="906.0" cy="22.9" r="0.8" fill="#c0a070" opacity="0.39"/><circle cx="47.1" cy="206.3" r="0.8" fill="#b0a080" opacity="0.27"/><circle cx="634.7" cy="53.2" r="0.8" fill="#c89060" opacity="0.46"/><circle cx="319.8" cy="44.0" r="0.9" fill="#d0a070" opacity="0.21"/><circle cx="247.2" cy="67.4" r="0.9" fill="#b0a080" opacity="0.28"/><circle cx="65.2" cy="146.3" r="0.5" fill="#a090c0" opacity="0.51"/><circle cx="273.5" cy="73.5" r="0.7" fill="#b0a080" opacity="0.52"/><circle cx="1064.2" cy="42.4" r="0.8" fill="#c0a070" opacity="0.44"/><circle cx="381.3" cy="48.8" r="0.5" fill="#b0a080" opacity="0.33"/><circle cx="559.9" cy="8.1" r="0.9" fill="#b0a080" opacity="0.35"/><circle cx="10.5" cy="134.8" r="0.8" fill="#a090c0" opacity="0.34"/><circle cx="958.5" cy="48.2" r="0.5" fill="#8070b0" opacity="0.36"/><circle cx="339.1" cy="80.2" r="0.6" fill="#d0a070" opacity="0.27"/><circle cx="953.5" cy="56.6" r="0.9" fill="#d0a070" opacity="0.52"/><circle cx="28.6" cy="112.0" r="0.6" fill="#b0a080" opacity="0.48"/><circle cx="200.5" cy="15.0" r="0.5" fill="#8070b0" opacity="0.38"/><circle cx="1059.3" cy="52.2" r="0.5" fill="#c89060" opacity="0.43"/><circle cx="20.9" cy="494.5" r="0.8" fill="#c89060" opacity="0.52"/><circle cx="39.9" cy="478.4" r="0.9" fill="#9080d0" opacity="0.22"/><circle cx="928.6" cy="73.4" r="0.9" fill="#c0a070" opacity="0.55"/><circle cx="641.5" cy="11.9" r="0.5" fill="#c0a070" opacity="0.45"/><circle cx="81.2" cy="77.7" r="0.9" fill="#a090c0" opacity="0.48"/><circle cx="853.1" cy="53.3" r="0.7" fill="#8070b0" opacity="0.46"/><circle cx="254.0" cy="22.6" r="0.5" fill="#c89060" opacity="0.26"/><circle cx="64.4" cy="45.1" r="0.8" fill="#9080d0" opacity="0.33"/><circle cx="234.6" cy="32.5" r="0.8" fill="#d0a070" opacity="0.53"/><circle cx="254.0" cy="18.3" r="0.6" fill="#9080d0" opacity="0.52"/><circle cx="958.2" cy="66.9" r="0.7" fill="#b0a080" opacity="0.32"/><circle cx="33.7" cy="680.0" r="0.9" fill="#9080d0" opacity="0.42"/><circle cx="329.6" cy="71.8" r="0.6" fill="#a090c0" opacity="0.16"/><circle cx="181.1" cy="31.1" r="0.7" fill="#c89060" opacity="0.54"/><circle cx="386.9" cy="27.5" r="0.8" fill="#d0a070" opacity="0.30"/><circle cx="1024.7" cy="34.6" r="0.8" fill="#b0a080" opacity="0.37"/><circle cx="302.3" cy="19.4" r="0.5" fill="#c89060" opacity="0.26"/><circle cx="166.2" cy="57.9" r="0.9" fill="#c89060" opacity="0.23"/><circle cx="8.7" cy="317.4" r="0.6" fill="#d0a070" opacity="0.47"/><circle cx="376.2" cy="59.2" r="0.9" fill="#a090c0" opacity="0.40"/><circle cx="1013.7" cy="41.4" r="0.6" fill="#9080d0" opacity="0.49"/><circle cx="67.9" cy="426.7" r="0.7" fill="#a090c0" opacity="0.39"/><circle cx="430.8" cy="41.8" r="0.5" fill="#9080d0" opacity="0.50"/><circle cx="97.5" cy="69.9" r="0.8" fill="#8070b0" opacity="0.46"/><circle cx="765.6" cy="11.9" r="0.5" fill="#c89060" opacity="0.31"/><circle cx="827.4" cy="19.0" r="0.5" fill="#9080d0" opacity="0.42"/><circle cx="974.2" cy="66.0" r="0.5" fill="#d0a070" opacity="0.27"/><circle cx="93.7" cy="23.7" r="0.7" fill="#d0a070" opacity="0.44"/><circle cx="900.1" cy="38.1" r="0.6" fill="#8070b0" opacity="0.50"/><circle cx="12.0" cy="262.5" r="0.7" fill="#d0a070" opacity="0.42"/><circle cx="1.7" cy="503.9" r="0.8" fill="#a090c0" opacity="0.25"/><circle cx="670.3" cy="14.9" r="0.9" fill="#c89060" opacity="0.26"/><circle cx="759.6" cy="3.3" r="0.8" fill="#c89060" opacity="0.39"/><circle cx="323.1" cy="31.2" r="0.6" fill="#c89060" opacity="0.37"/><circle cx="242.7" cy="40.8" r="0.8" fill="#c0a070" opacity="0.25"/><circle cx="613.2" cy="76.7" r="0.7" fill="#c89060" opacity="0.48"/><circle cx="59.5" cy="418.9" r="0.6" fill="#8070b0" opacity="0.17"/><circle cx="39.6" cy="26.1" r="0.5" fill="#d0a070" opacity="0.52"/><circle cx="793.0" cy="81.8" r="0.7" fill="#c0a070" opacity="0.48"/><circle cx="372.1" cy="77.9" r="0.9" fill="#a090c0" opacity="0.52"/><circle cx="884.8" cy="51.5" r="0.6" fill="#a090c0" opacity="0.35"/><circle cx="545.7" cy="76.1" r="0.6" fill="#9080d0" opacity="0.35"/><circle cx="749.1" cy="66.1" r="0.6" fill="#b0a080" opacity="0.22"/><circle cx="43.4" cy="389.5" r="0.6" fill="#9080d0" opacity="0.54"/><circle cx="438.8" cy="16.5" r="0.8" fill="#b0a080" opacity="0.20"/><circle cx="253.6" cy="19.8" r="0.6" fill="#c0a070" opacity="0.43"/><circle cx="23.9" cy="214.4" r="0.9" fill="#8070b0" opacity="0.21"/><circle cx="670.9" cy="9.7" r="0.6" fill="#a090c0" opacity="0.45"/><circle cx="165.0" cy="80.3" r="0.6" fill="#d0a070" opacity="0.46"/><circle cx="308.4" cy="29.6" r="0.7" fill="#9080d0" opacity="0.17"/><circle cx="117.9" cy="25.3" r="0.8" fill="#c89060" opacity="0.21"/><circle cx="386.9" cy="13.8" r="0.8" fill="#c89060" opacity="0.17"/><circle cx="51.0" cy="60.1" r="0.9" fill="#8070b0" opacity="0.28"/><circle cx="687.7" cy="78.5" r="0.9" fill="#a090c0" opacity="0.23"/><circle cx="383.0" cy="7.5" r="0.7" fill="#b0a080" opacity="0.40"/><circle cx="83.3" cy="61.3" r="0.6" fill="#c89060" opacity="0.46"/><circle cx="198.0" cy="52.3" r="0.6" fill="#d0a070" opacity="0.51"/><circle cx="766.3" cy="25.4" r="0.6" fill="#c0a070" opacity="0.28"/><circle cx="379.8" cy="18.9" r="0.7" fill="#9080d0" opacity="0.37"/><circle cx="17.2" cy="41.3" r="0.8" fill="#c89060" opacity="0.38"/><circle cx="64.3" cy="354.0" r="0.7" fill="#a090c0" opacity="0.44"/><circle cx="667.8" cy="11.6" r="0.8" fill="#9080d0" opacity="0.22"/><circle cx="427.9" cy="80.3" r="0.6" fill="#d0a070" opacity="0.33"/><circle cx="397.1" cy="2.6" r="0.9" fill="#c0a070" opacity="0.49"/><circle cx="302.0" cy="54.3" r="0.7" fill="#c0a070" opacity="0.43"/><circle cx="9.4" cy="78.4" r="0.6" fill="#9080d0" opacity="0.51"/><circle cx="407.0" cy="7.5" r="1.9" fill="#c8b8ff"/><circle cx="570.5" cy="28.6" r="1.7" fill="#ffa878"/><circle cx="615.0" cy="44.0" r="1.4" fill="#b8a8ff"/><circle cx="619.0" cy="41.0" r="1.2" fill="#c0b0ff"/><circle cx="868.0" cy="27.0" r="1.6" fill="#ffa070"/><circle cx="383.0" cy="52.0" r="1.3" fill="#b8a8ff"/><circle cx="401.0" cy="52.0" r="1.1" fill="#ffb080"/><circle cx="807.0" cy="57.0" r="1.2" fill="#b0a0ff"/><circle cx="816.6" cy="59.0" r="1.2" fill="#b0a0ff"/><circle cx="807.0" cy="37.0" r="0.9" fill="#a090d0"/><circle cx="864.0" cy="4.0" r="0.9" fill="#a090d0"/><circle cx="192.0" cy="28.8" r="1.1" fill="#b0a0ff"/><circle cx="149.0" cy="30.0" r="1.0" fill="#ffa070"/><circle cx="162.0" cy="60.6" r="1.1" fill="#b0a0ff"/><circle cx="236.0" cy="59.7" r="1.1" fill="#ffa070"/><circle cx="239.0" cy="60.0" r="1.1" fill="#b0a0ff"/><circle cx="192.0" cy="73.0" r="1.0" fill="#ffa070"/><circle cx="56.0" cy="515.0" r="1.3" fill="#c0b0ff"/><circle cx="49.0" cy="524.0" r="1.0" fill="#b0a0ff"/><circle cx="10.0" cy="511.0" r="1.0" fill="#ffb080"/><circle cx="38.0" cy="482.0" r="1.0" fill="#ffb080"/><circle cx="9.0" cy="692.5" r="1.6" fill="#c8b8ff"/><circle cx="37.0" cy="703.0" r="1.2" fill="#b0a0ff"/><circle cx="51.0" cy="697.0" r="1.1" fill="#b0a0ff"/><circle cx="25.0" cy="604.0" r="0.9" fill="#ffb080"/><circle cx="17.0" cy="573.0" r="0.9" fill="#ffb080"/><defs><radialGradient id="gal"><stop offset="0" stop-color="#c8d0e0" stop-opacity="0.9"/><stop offset="0.45" stop-color="#8890a8" stop-opacity="0.5"/><stop offset="1" stop-color="#302830" stop-opacity="0"/></radialGradient><radialGradient id="galr"><stop offset="0" stop-color="#b07060" stop-opacity="0.45"/><stop offset="1" stop-color="#302830" stop-opacity="0"/></radialGradient><radialGradient id="gal2"><stop offset="0" stop-color="#c8a8c8" stop-opacity="0.9"/><stop offset="0.5" stop-color="#807080" stop-opacity="0.4"/><stop offset="1" stop-color="#302830" stop-opacity="0"/></radialGradient></defs><ellipse cx="482" cy="82" rx="30" ry="9" fill="url(#gal)" opacity="0.75" transform="rotate(25 482 82)"/><ellipse cx="492" cy="80" rx="14" ry="6" fill="url(#galr)"/><circle cx="60" cy="671" r="9" fill="url(#gal2)"/></svg>
<svg style="position:absolute;left:29px;top:146px;" width="22" height="74" viewBox="0 0 22 74"><polygon points="0.5,19 22,0.5 22,73.5 0.5,73.5" fill="#555555" stroke="#4a4a4a" stroke-width="1"/></svg>
<div class="t" style="left:34.5px;top:212px;font-size:12px;line-height:12px;color:#e0e0e0;font-family:'Liberation Sans',sans-serif;font-weight:normal;transform-origin:0 0;transform:rotate(-90deg);">Image10</div>
<svg style="position:absolute;left:29px;top:220px;" width="22" height="80" viewBox="0 0 22 80"><polygon points="0.5,19 22,0.5 22,79.5 0.5,79.5" fill="#b4b4b4" stroke="#4a4a4a" stroke-width="1"/></svg>
<div class="t" style="left:34.5px;top:292px;font-size:12px;line-height:12px;color:#111;font-family:'Liberation Sans',sans-serif;font-weight:normal;transform-origin:0 0;transform:rotate(-90deg);">Preview01</div>
<div style="left:49px;top:222px;width:2px;height:78px;background:#20c060;"></div>
<svg style="position:absolute;left:29px;top:300px;" width="22" height="82" viewBox="0 0 22 82"><polygon points="0.5,19 22,0.5 22,81.5 0.5,81.5" fill="#b4b4b4" stroke="#4a4a4a" stroke-width="1"/></svg>
<div class="t" style="left:34.5px;top:374px;font-size:12px;line-height:12px;color:#111;font-family:'Liberation Sans',sans-serif;font-weight:normal;transform-origin:0 0;transform:rotate(-90deg);">Preview02</div>
<svg style="position:absolute;left:33px;top:789px;" width="14" height="14" viewBox="0 0 14 14"><path d="M2,2 L12,12 M12,7 V12 H7" stroke="#e0e0e0" fill="none" stroke-width="1"/><path d="M7,12 L12,7" stroke="#e0e0e0" stroke-width="1"/></svg>
<svg style="position:absolute;left:33px;top:807px;" width="14" height="14" viewBox="0 0 14 14"><rect x="3.5" y="3.5" width="7" height="7" fill="none" stroke="#e0e0e0"/><path d="M1,1 L3.5,3.5 M13,1 L10.5,3.5 M1,13 L3.5,10.5 M13,13 L10.5,10.5" stroke="#e0e0e0"/></svg>
<svg style="position:absolute;left:33px;top:825px;" width="14" height="14" viewBox="0 0 14 14"><rect x="1.5" y="1.5" width="7" height="7" fill="none" stroke="#e0e0e0"/><rect x="5.5" y="5.5" width="7" height="7" fill="none" stroke="#e0e0e0"/></svg>
<svg style="position:absolute;left:33px;top:843px;" width="14" height="14" viewBox="0 0 14 14"><circle cx="7" cy="7" r="5.5" fill="none" stroke="#e0e0e0"/><circle cx="7" cy="7" r="2.5" fill="none" stroke="#e0e0e0"/></svg>
<div style="left:117px;top:224px;width:1093px;height:743px;background:#727272;border-top:1px solid #4a4a4a;border-left:1px solid #4a4a4a;"></div>
<div style="left:124px;top:229px;width:14px;height:14px;background:#c8d0ff;border:2px solid #c8d0ff;border-top-width:4px;"><div style="left:0;top:0;width:10px;height:8px;background:#6e6e6e;"></div></div>
<div class="t" style="left:133px;width:1000px;text-align:center;top:229.00px;font-size:13px;line-height:13px;color:#dedede;font-weight:bold;font-family:'Liberation Sans',sans-serif;transform:scaleX(1.14);">Gray 1:2 star_mask | &lt;*new*&gt;</div>
<svg style="position:absolute;left:1128px;top:231px;" width="12" height="12" viewBox="0 0 12 12"><rect x="1" y="5" width="10" height="3" fill="#f0f0f0"/></svg>
<svg style="position:absolute;left:1149px;top:231px;" width="12" height="12" viewBox="0 0 12 12"><rect x="1" y="1" width="10" height="2" fill="#f0f0f0"/><polygon points="6,3.5 11,10 1,10" fill="#f0f0f0"/></svg>
<svg style="position:absolute;left:1170px;top:231px;" width="12" height="12" viewBox="0 0 12 12"><path d="M6,1 V11 M1,6 H11" stroke="#f0f0f0" stroke-width="3"/></svg>
<svg style="position:absolute;left:1191px;top:231px;" width="12" height="12" viewBox="0 0 12 12"><path d="M1.5,1.5 L10.5,10.5 M10.5,1.5 L1.5,10.5" stroke="#f0f0f0" stroke-width="2"/></svg>
<svg style="position:absolute;left:142px;top:249px;" width="1051" height="701" viewBox="0 0 1051 701"><defs><radialGradient id="sg"><stop offset="0" stop-color="#fff"/><stop offset="0.48" stop-color="#fff"/><stop offset="0.68" stop-color="#fff" stop-opacity="0.7"/><stop offset="0.84" stop-color="#fff" stop-opacity="0.28"/><stop offset="1" stop-color="#fff" stop-opacity="0"/></radialGradient></defs><rect width="1051" height="701" fill="#000"/><circle cx="60" cy="0" r="9.3" fill="url(#sg)" opacity="0.099"/><circle cx="114" cy="2" r="10.2" fill="url(#sg)" opacity="0.343"/><circle cx="138" cy="19" r="9.0" fill="url(#sg)" opacity="0.048"/><circle cx="173" cy="62" r="9.7" fill="url(#sg)" opacity="0.193"/><circle cx="30" cy="85" r="10.2" fill="url(#sg)" opacity="0.343"/><circle cx="168" cy="99" r="10.9" fill="url(#sg)" opacity="0.562"/><circle cx="149" cy="124" r="10.0" fill="url(#sg)" opacity="0.265"/><circle cx="160" cy="135" r="8.9" fill="url(#sg)" opacity="0.037"/><circle cx="306" cy="150" r="9.6" fill="url(#sg)" opacity="0.159"/><circle cx="335" cy="166" r="9.0" fill="url(#sg)" opacity="0.048"/><circle cx="166" cy="168" r="9.2" fill="url(#sg)" opacity="0.085"/><circle cx="221" cy="178" r="9.7" fill="url(#sg)" opacity="0.193"/><circle cx="110" cy="238" r="9.7" fill="url(#sg)" opacity="0.193"/><circle cx="349" cy="0" r="14.0" fill="url(#sg)" opacity="0.811"/><circle cx="636" cy="5" r="8.9" fill="url(#sg)" opacity="0.037"/><circle cx="694" cy="29" r="8.9" fill="url(#sg)" opacity="0.037"/><circle cx="486" cy="42" r="9.4" fill="url(#sg)" opacity="0.128"/><circle cx="570" cy="62" r="10.4" fill="url(#sg)" opacity="0.384"/><circle cx="379" cy="78" r="9.6" fill="url(#sg)" opacity="0.159"/><circle cx="459" cy="145" r="10.1" fill="url(#sg)" opacity="0.303"/><circle cx="469" cy="173" r="9.0" fill="url(#sg)" opacity="0.048"/><circle cx="541" cy="205" r="9.4" fill="url(#sg)" opacity="0.113"/><circle cx="511" cy="209" r="8.9" fill="url(#sg)" opacity="0.037"/><circle cx="842" cy="19" r="10.1" fill="url(#sg)" opacity="0.303"/><circle cx="1038" cy="22" r="9.4" fill="url(#sg)" opacity="0.128"/><circle cx="926" cy="57" r="10.8" fill="url(#sg)" opacity="0.516"/><circle cx="1034" cy="64" r="9.1" fill="url(#sg)" opacity="0.060"/><circle cx="844" cy="89" r="9.4" fill="url(#sg)" opacity="0.113"/><circle cx="890" cy="112" r="9.1" fill="url(#sg)" opacity="0.060"/><circle cx="835" cy="127" r="10.8" fill="url(#sg)" opacity="0.516"/><circle cx="932" cy="123" r="9.4" fill="url(#sg)" opacity="0.128"/><circle cx="994" cy="142" r="9.1" fill="url(#sg)" opacity="0.060"/><circle cx="955" cy="166" r="9.3" fill="url(#sg)" opacity="0.099"/><circle cx="942" cy="178" r="9.8" fill="url(#sg)" opacity="0.228"/><circle cx="942" cy="214" r="9.8" fill="url(#sg)" opacity="0.210"/><circle cx="50" cy="273" r="9.7" fill="url(#sg)" opacity="0.193"/><circle cx="286" cy="260" r="9.7" fill="url(#sg)" opacity="0.193"/><circle cx="176" cy="350" r="9.4" fill="url(#sg)" opacity="0.128"/><circle cx="75" cy="365" r="10.0" fill="url(#sg)" opacity="0.265"/><circle cx="325" cy="394" r="10.1" fill="url(#sg)" opacity="0.303"/><circle cx="250" cy="472" r="14.0" fill="url(#sg)" opacity="0.708"/><circle cx="480" cy="247" r="9.4" fill="url(#sg)" opacity="0.113"/><circle cx="380" cy="289" r="10.8" fill="url(#sg)" opacity="0.507"/><circle cx="491" cy="309" r="10.2" fill="url(#sg)" opacity="0.343"/><circle cx="566" cy="309" r="14.0" fill="url(#sg)" opacity="0.837"/><circle cx="378" cy="366" r="8.9" fill="url(#sg)" opacity="0.037"/><circle cx="402" cy="366" r="9.6" fill="url(#sg)" opacity="0.159"/><circle cx="618" cy="383" r="10.5" fill="url(#sg)" opacity="0.405"/><circle cx="388" cy="396" r="8.8" fill="url(#sg)" opacity="0.018"/><circle cx="457" cy="412" r="9.5" fill="url(#sg)" opacity="0.144"/><circle cx="368" cy="444" r="10.2" fill="url(#sg)" opacity="0.343"/><circle cx="431" cy="477" r="8.9" fill="url(#sg)" opacity="0.027"/><circle cx="784" cy="250" r="9.5" fill="url(#sg)" opacity="0.144"/><circle cx="1041" cy="244" r="8.9" fill="url(#sg)" opacity="0.027"/><circle cx="732" cy="297" r="9.6" fill="url(#sg)" opacity="0.159"/><circle cx="805" cy="316" r="10.7" fill="url(#sg)" opacity="0.471"/><circle cx="767" cy="390" r="9.4" fill="url(#sg)" opacity="0.128"/><circle cx="892" cy="394" r="8.9" fill="url(#sg)" opacity="0.037"/><circle cx="874" cy="408" r="9.5" fill="url(#sg)" opacity="0.144"/><circle cx="907" cy="473" r="14.0" fill="url(#sg)" opacity="0.890"/><circle cx="346" cy="493" r="10.4" fill="url(#sg)" opacity="0.393"/><circle cx="315" cy="527" r="10.9" fill="url(#sg)" opacity="0.539"/><circle cx="234" cy="562" r="8.9" fill="url(#sg)" opacity="0.027"/><circle cx="37" cy="606" r="9.5" fill="url(#sg)" opacity="0.144"/><circle cx="28" cy="629" r="14.0" fill="url(#sg)" opacity="0.708"/><circle cx="61" cy="645" r="9.4" fill="url(#sg)" opacity="0.113"/><circle cx="112" cy="662" r="10.2" fill="url(#sg)" opacity="0.343"/><circle cx="154" cy="644" r="10.2" fill="url(#sg)" opacity="0.343"/><circle cx="337" cy="632" r="10.7" fill="url(#sg)" opacity="0.471"/><circle cx="542" cy="506" r="8.9" fill="url(#sg)" opacity="0.037"/><circle cx="681" cy="520" r="10.9" fill="url(#sg)" opacity="0.539"/><circle cx="395" cy="537" r="9.4" fill="url(#sg)" opacity="0.128"/><circle cx="557" cy="575" r="9.6" fill="url(#sg)" opacity="0.176"/><circle cx="486" cy="604" r="14.0" fill="url(#sg)" opacity="0.785"/><circle cx="389" cy="610" r="10.5" fill="url(#sg)" opacity="0.427"/><circle cx="691" cy="599" r="10.3" fill="url(#sg)" opacity="0.351"/><circle cx="427" cy="630" r="8.9" fill="url(#sg)" opacity="0.027"/><circle cx="572" cy="645" r="9.5" fill="url(#sg)" opacity="0.144"/><circle cx="524" cy="668" r="9.5" fill="url(#sg)" opacity="0.144"/><circle cx="631" cy="680" r="9.5" fill="url(#sg)" opacity="0.153"/><circle cx="771" cy="494" r="10.1" fill="url(#sg)" opacity="0.311"/><circle cx="878" cy="513" r="8.9" fill="url(#sg)" opacity="0.027"/><circle cx="711" cy="552" r="8.9" fill="url(#sg)" opacity="0.037"/><circle cx="970" cy="546" r="9.3" fill="url(#sg)" opacity="0.099"/><circle cx="780" cy="586" r="8.8" fill="url(#sg)" opacity="0.018"/><circle cx="962" cy="589" r="10.3" fill="url(#sg)" opacity="0.363"/><circle cx="908" cy="619" r="11.5" fill="url(#sg)" opacity="0.759"/><circle cx="742" cy="628" r="10.1" fill="url(#sg)" opacity="0.311"/><circle cx="821" cy="624" r="9.4" fill="url(#sg)" opacity="0.128"/><circle cx="1051" cy="615" r="11.3" fill="url(#sg)" opacity="0.708"/><circle cx="775" cy="663" r="9.2" fill="url(#sg)" opacity="0.085"/><circle cx="876" cy="664" r="9.2" fill="url(#sg)" opacity="0.085"/><circle cx="971" cy="667" r="8.9" fill="url(#sg)" opacity="0.037"/></svg>
<div style="left:1193px;top:249px;width:16px;height:701px;background:#727272;"></div>
<div style="left:1193px;top:699px;width:16px;height:217px;background:#b4b4b4;border:2px solid #cfcfcf;border-right-width:1px;"></div>
<svg style="position:absolute;left:1195px;top:919px;" width="12" height="10" viewBox="0 0 12 10"><polygon points="6,2 11,8 1,8" fill="#dcdcdc"/></svg>
<svg style="position:absolute;left:1195px;top:936px;" width="12" height="10" viewBox="0 0 12 10"><polygon points="1,2 11,2 6,8" fill="#dcdcdc"/></svg>
<div style="left:142px;top:950px;width:1051px;height:16px;background:#727272;"></div>
<div style="left:142px;top:950px;width:334px;height:15px;background:#b4b4b4;border:2px solid #cfcfcf;border-bottom-width:1px;"></div>
<svg style="position:absolute;left:1161px;top:952px;" width="12" height="12" viewBox="0 0 12 12"><polygon points="9,1 9,11 3,6" fill="#dcdcdc"/></svg>
<svg style="position:absolute;left:1178px;top:952px;" width="12" height="12" viewBox="0 0 12 12"><polygon points="3,1 3,11 9,6" fill="#dcdcdc"/></svg>
<svg style="position:absolute;left:120px;top:250px;" width="22" height="83" viewBox="0 0 22 83"><polygon points="0.5,19 22,0.5 22,82.5 0.5,82.5" fill="#555555" stroke="#4a4a4a" stroke-width="1"/></svg>
<div class="t" style="left:125.5px;top:325px;font-size:12px;line-height:12px;color:#e0e0e0;font-family:'Liberation Sans',sans-serif;font-weight:normal;transform-origin:0 0;transform:rotate(-90deg);">star_mask</div>
<svg style="position:absolute;left:124px;top:893px;" width="14" height="14" viewBox="0 0 14 14"><path d="M2,2 L12,12 M12,7 V12 H7" stroke="#e0e0e0" fill="none" stroke-width="1"/><path d="M7,12 L12,7" stroke="#e0e0e0" stroke-width="1"/></svg>
<svg style="position:absolute;left:124px;top:911px;" width="14" height="14" viewBox="0 0 14 14"><rect x="3.5" y="3.5" width="7" height="7" fill="none" stroke="#e0e0e0"/><path d="M1,1 L3.5,3.5 M13,1 L10.5,3.5 M1,13 L3.5,10.5 M13,13 L10.5,10.5" stroke="#e0e0e0"/></svg>
<svg style="position:absolute;left:124px;top:929px;" width="14" height="14" viewBox="0 0 14 14"><rect x="1.5" y="1.5" width="7" height="7" fill="none" stroke="#e0e0e0"/><rect x="5.5" y="5.5" width="7" height="7" fill="none" stroke="#e0e0e0"/></svg>
<svg style="position:absolute;left:124px;top:947px;" width="14" height="14" viewBox="0 0 14 14"><circle cx="7" cy="7" r="5.5" fill="none" stroke="#e0e0e0"/><circle cx="7" cy="7" r="2.5" fill="none" stroke="#e0e0e0"/></svg>
<div style="left:117px;top:966px;width:1093px;height:1px;background:#4a4a4a;"></div>
<svg style="position:absolute;left:1273px;top:123px;" width="144" height="25" viewBox="0 0 144 25"><polygon points="0.5,0.5 135,0.5 143.5,9 143.5,24.5 0.5,24.5" fill="#b4b4b4" stroke="#9a9a9a" stroke-width="1"/><rect x="15" y="1" width="9" height="23" fill="#555"/><g transform="translate(1,1)"><polygon points="7,0 15,4 15,19 7,23 0,19 0,4" fill="#58a8f0"/><polygon points="7,0 15,4 7,8 0,4" fill="#a0d0ff"/><polygon points="0,4 7,8 7,23 0,19" fill="#78c0ff"/><polygon points="7,8 15,4 15,19 7,23" fill="#3888d8"/></g><text x="22.5" y="23" font-size="9.5" font-weight="bold" fill="#fff" transform="rotate(-90 22.5 23)" font-family="Liberation Sans">XISF</text><text x="133.5" y="22" font-size="6.5" font-weight="bold" fill="#111" font-family="Liberation Sans">N</text></svg>
<div class="t" style="left:1302px;top:129.84px;font-size:12px;line-height:12px;color:#111;font-weight:normal;font-family:'Liberation Sans',sans-serif;transform-origin:0 0;">Syn_Lum_Master</div>
<svg style="position:absolute;left:1561px;top:127px;" width="144" height="24" viewBox="0 0 144 24"><polygon points="0.5,0.5 135,0.5 143.5,9 143.5,23.5 0.5,23.5" fill="#b4b4b4" stroke="#9a9a9a" stroke-width="1"/><rect x="15" y="1" width="9" height="22" fill="#555"/><g transform="translate(1,1)"><polygon points="7,0 15,4 15,19 7,23 0,19 0,4" fill="#58a8f0"/><polygon points="7,0 15,4 7,8 0,4" fill="#a0d0ff"/><polygon points="0,4 7,8 7,23 0,19" fill="#78c0ff"/><polygon points="7,8 15,4 15,19 7,23" fill="#3888d8"/></g><text x="22.5" y="22" font-size="9.5" font-weight="bold" fill="#fff" transform="rotate(-90 22.5 22)" font-family="Liberation Sans">XISF</text><text x="133.5" y="21" font-size="6.5" font-weight="bold" fill="#111" font-family="Liberation Sans">N</text></svg>
<div class="t" style="left:1590px;top:133.84px;font-size:12px;line-height:12px;color:#111;font-weight:normal;font-family:'Liberation Sans',sans-serif;transform-origin:0 0;">Red_Driz_Master</div>
<svg style="position:absolute;left:1561px;top:157px;" width="157" height="24" viewBox="0 0 157 24"><polygon points="0.5,0.5 148,0.5 156.5,9 156.5,23.5 0.5,23.5" fill="#b4b4b4" stroke="#9a9a9a" stroke-width="1"/><rect x="15" y="1" width="9" height="22" fill="#555"/><g transform="translate(1,1)"><polygon points="7,0 15,4 15,19 7,23 0,19 0,4" fill="#58a8f0"/><polygon points="7,0 15,4 7,8 0,4" fill="#a0d0ff"/><polygon points="0,4 7,8 7,23 0,19" fill="#78c0ff"/><polygon points="7,8 15,4 15,19 7,23" fill="#3888d8"/></g><text x="22.5" y="22" font-size="9.5" font-weight="bold" fill="#fff" transform="rotate(-90 22.5 22)" font-family="Liberation Sans">XISF</text><text x="146.5" y="21" font-size="6.5" font-weight="bold" fill="#111" font-family="Liberation Sans">N</text></svg>
<div class="t" style="left:1590px;top:163.84px;font-size:12px;line-height:12px;color:#111;font-weight:normal;font-family:'Liberation Sans',sans-serif;transform-origin:0 0;">Green_Driz_Master</div>
<svg style="position:absolute;left:1561px;top:187px;" width="147" height="24" viewBox="0 0 147 24"><polygon points="0.5,0.5 138,0.5 146.5,9 146.5,23.5 0.5,23.5" fill="#b4b4b4" stroke="#9a9a9a" stroke-width="1"/><rect x="15" y="1" width="9" height="22" fill="#555"/><g transform="translate(1,1)"><polygon points="7,0 15,4 15,19 7,23 0,19 0,4" fill="#58a8f0"/><polygon points="7,0 15,4 7,8 0,4" fill="#a0d0ff"/><polygon points="0,4 7,8 7,23 0,19" fill="#78c0ff"/><polygon points="7,8 15,4 15,19 7,23" fill="#3888d8"/></g><text x="22.5" y="22" font-size="9.5" font-weight="bold" fill="#fff" transform="rotate(-90 22.5 22)" font-family="Liberation Sans">XISF</text><text x="136.5" y="21" font-size="6.5" font-weight="bold" fill="#111" font-family="Liberation Sans">N</text></svg>
<div class="t" style="left:1590px;top:193.84px;font-size:12px;line-height:12px;color:#111;font-weight:normal;font-family:'Liberation Sans',sans-serif;transform-origin:0 0;">Blue_Driz_Master</div>
<svg style="position:absolute;left:1656px;top:277px;" width="69" height="25" viewBox="0 0 69 25"><polygon points="0.5,0.5 60,0.5 68.5,9 68.5,24.5 0.5,24.5" fill="#b4b4b4" stroke="#9a9a9a" stroke-width="1"/><g transform="translate(3,2)"><polygon points="10,1 19,5 19,16 10,21 1,16 1,5" fill="#3a9af0"/><polygon points="10,1 19,5 10,9.5 1,5" fill="#7cc4ff"/><polygon points="10,9.5 19,5 19,16 10,21" fill="#1a6ed0"/><polygon points="1,5 10,9.5 10,21 1,16" fill="#58b0ff"/></g><text x="58.5" y="22" font-size="6.5" font-weight="bold" fill="#111" font-family="Liberation Sans">N</text></svg>
<div class="t" style="left:1685px;top:283.84px;font-size:12px;line-height:12px;color:#111;font-weight:normal;font-family:'Liberation Sans',sans-serif;transform-origin:0 0;">PSF</div>
<svg style="position:absolute;left:1622px;top:311px;" width="134" height="26" viewBox="0 0 134 26"><polygon points="0.5,0.5 125,0.5 133.5,9 133.5,25.5 0.5,25.5" fill="#b4b4b4" stroke="#9a9a9a" stroke-width="1"/><g transform="translate(3,2)"><polygon points="10,1 19,5 19,16 10,21 1,16 1,5" fill="#3a9af0"/><polygon points="10,1 19,5 10,9.5 1,5" fill="#7cc4ff"/><polygon points="10,9.5 19,5 19,16 10,21" fill="#1a6ed0"/><polygon points="1,5 10,9.5 10,21 1,16" fill="#58b0ff"/></g><text x="123.5" y="23" font-size="6.5" font-weight="bold" fill="#111" font-family="Liberation Sans">N</text></svg>
<div class="t" style="left:1651px;top:317.84px;font-size:12px;line-height:12px;color:#111;font-weight:normal;font-family:'Liberation Sans',sans-serif;transform-origin:0 0;">Image10_clone</div>
<svg style="position:absolute;left:1641px;top:401px;" width="114" height="25" viewBox="0 0 114 25"><polygon points="0.5,0.5 105,0.5 113.5,9 113.5,24.5 0.5,24.5" fill="#b4b4b4" stroke="#9a9a9a" stroke-width="1"/><g transform="translate(3,2)"><polygon points="10,1 19,5 19,16 10,21 1,16 1,5" fill="#3a9af0"/><polygon points="10,1 19,5 10,9.5 1,5" fill="#7cc4ff"/><polygon points="10,9.5 19,5 19,16 10,21" fill="#1a6ed0"/><polygon points="1,5 10,9.5 10,21 1,16" fill="#58b0ff"/></g><text x="103.5" y="22" font-size="6.5" font-weight="bold" fill="#111" font-family="Liberation Sans">N</text></svg>
<div class="t" style="left:1670px;top:407.84px;font-size:12px;line-height:12px;color:#111;font-weight:normal;font-family:'Liberation Sans',sans-serif;transform-origin:0 0;">star_mask1</div>
<svg style="position:absolute;left:1730px;top:127px;" width="102" height="26" viewBox="0 0 102 26"><rect x="0.5" y="0.5" width="101" height="25" fill="#b4b4b4" stroke="#a0a0a0"/><path d="M1,25 V1 H101" stroke="#c4c4c4" fill="none"/><g transform="translate(2,2)"><defs><linearGradient id="p1g" x1="0" y1="0" x2="1" y2="1"><stop offset="0" stop-color="#2a7a2a"/><stop offset="1" stop-color="#0a300a"/></linearGradient></defs><rect x="0" y="0" width="22" height="22" fill="#1010f0"/><rect x="1" y="1" width="20" height="20" fill="#2020f0"/><polygon points="1,1 10,1 10,11 1,21" fill="url(#p1g)"/><rect x="10" y="1" width="11" height="10" fill="#d06830"/><path d="M10,1 V11 H21" stroke="#111" stroke-width="0.8" fill="none"/></g><text x="93.5" y="8.3" font-size="6.3" font-weight="bold" fill="#111" font-family="Liberation Sans">N</text><text x="93.5" y="22" font-size="6.3" font-weight="bold" fill="#111" font-family="Liberation Sans">D</text></svg>
<div class="t" style="left:1759px;top:134.34px;font-size:12px;line-height:12px;color:#111;font-weight:normal;font-family:'Liberation Sans',sans-serif;transform-origin:0 0;">Process01</div>
<svg style="position:absolute;left:1730px;top:157px;" width="102" height="26" viewBox="0 0 102 26"><rect x="0.5" y="0.5" width="101" height="25" fill="#b4b4b4" stroke="#a0a0a0"/><path d="M1,25 V1 H101" stroke="#c4c4c4" fill="none"/><g transform="translate(2,2)"><rect x="0" y="0" width="22" height="22" fill="#111"/><rect x="1.5" y="1.5" width="19" height="19" fill="#ddd"/><polygon points="11,1.5 11,11 1.5,11 7,1.5" fill="#0000ff"/><polygon points="11,1.5 20.5,11 11,11" fill="#00e000"/><polygon points="11,11 20.5,11 11,20.5" fill="#ff0000"/><polygon points="1.5,11 11,11 11,20.5 7,20.5" fill="#888"/><polygon points="1.5,1.5 7,1.5 1.5,7" fill="#e89080"/><polygon points="1.5,14 7,20.5 1.5,20.5" fill="#90e090"/></g><text x="93.5" y="8.3" font-size="6.3" font-weight="bold" fill="#111" font-family="Liberation Sans">N</text><text x="93.5" y="22" font-size="6.3" font-weight="bold" fill="#111" font-family="Liberation Sans">D</text></svg>
<div class="t" style="left:1759px;top:164.34px;font-size:12px;line-height:12px;color:#111;font-weight:normal;font-family:'Liberation Sans',sans-serif;transform-origin:0 0;">Process02</div>
<svg style="position:absolute;left:1730px;top:187px;" width="102" height="26" viewBox="0 0 102 26"><rect x="0.5" y="0.5" width="101" height="25" fill="#b4b4b4" stroke="#a0a0a0"/><path d="M1,25 V1 H101" stroke="#c4c4c4" fill="none"/><g transform="translate(2,2)"><defs><linearGradient id="p3g" x1="0" y1="0" x2="0" y2="1"><stop offset="0" stop-color="#00b0ff"/><stop offset="1" stop-color="#0040e0"/></linearGradient></defs><rect width="22" height="22" fill="url(#p3g)"/><text x="4" y="19" font-size="20" font-weight="bold" fill="#f08a30" font-family="Liberation Sans">S</text></g><text x="93.5" y="8.3" font-size="6.3" font-weight="bold" fill="#111" font-family="Liberation Sans">N</text><text x="93.5" y="22" font-size="6.3" font-weight="bold" fill="#111" font-family="Liberation Sans">D</text></svg>
<div class="t" style="left:1759px;top:194.34px;font-size:12px;line-height:12px;color:#111;font-weight:normal;font-family:'Liberation Sans',sans-serif;transform-origin:0 0;">Process03</div>
<svg style="position:absolute;left:1730px;top:217px;" width="102" height="26" viewBox="0 0 102 26"><rect x="0.5" y="0.5" width="101" height="25" fill="#b4b4b4" stroke="#a0a0a0"/><path d="M1,25 V1 H101" stroke="#c4c4c4" fill="none"/><g transform="translate(2,2)"><rect width="22" height="22" fill="#111"/><rect x="1" y="1" width="20" height="20" fill="#e8e8e8"/><polygon points="4,1.5 18,1.5 11,8" fill="#111"/><polygon points="4,20.5 18,20.5 11,14" fill="#111"/><rect x="2" y="9" width="18" height="1.5" fill="#0000ff"/><rect x="2" y="11" width="18" height="1.5" fill="#00c000"/><rect x="2" y="13" width="18" height="1.5" fill="#ff0000"/></g><text x="93.5" y="8.3" font-size="6.3" font-weight="bold" fill="#111" font-family="Liberation Sans">N</text><text x="93.5" y="22" font-size="6.3" font-weight="bold" fill="#111" font-family="Liberation Sans">D</text></svg>
<div class="t" style="left:1759px;top:224.34px;font-size:12px;line-height:12px;color:#111;font-weight:normal;font-family:'Liberation Sans',sans-serif;transform-origin:0 0;">Process05</div>
<svg style="position:absolute;left:1730px;top:247px;" width="102" height="26" viewBox="0 0 102 26"><rect x="0.5" y="0.5" width="101" height="25" fill="#b4b4b4" stroke="#a0a0a0"/><path d="M1,25 V1 H101" stroke="#c4c4c4" fill="none"/><g transform="translate(2,2)"><rect width="22" height="22" fill="#111"/><rect x="1" y="1" width="20" height="20" fill="#e8e8e8"/><circle cx="11" cy="6.5" r="4.2" fill="#f00000"/><circle cx="6" cy="15" r="4.2" fill="#00e000"/><circle cx="16" cy="15" r="4.2" fill="#0000f0"/></g><text x="93.5" y="8.3" font-size="6.3" font-weight="bold" fill="#111" font-family="Liberation Sans">N</text><text x="93.5" y="22" font-size="6.3" font-weight="bold" fill="#111" font-family="Liberation Sans">D</text></svg>
<div class="t" style="left:1759px;top:254.34px;font-size:12px;line-height:12px;color:#111;font-weight:normal;font-family:'Liberation Sans',sans-serif;transform-origin:0 0;">Process06</div>
<svg style="position:absolute;left:1730px;top:277px;" width="102" height="26" viewBox="0 0 102 26"><rect x="0.5" y="0.5" width="101" height="25" fill="#b4b4b4" stroke="#a0a0a0"/><path d="M1,25 V1 H101" stroke="#c4c4c4" fill="none"/><g transform="translate(2,2)"><defs><linearGradient id="p7g" x1="0" y1="0" x2="1" y2="1"><stop offset="0" stop-color="#b0c8ff"/><stop offset="1" stop-color="#1020e0"/></linearGradient></defs><rect width="22" height="22" fill="url(#p7g)"/><path d="M1,21 Q8,19 10,5 Q11,1 12,5 Q14,19 21,21 Z" fill="#d8e0ff" opacity="0.85"/></g><text x="93.5" y="8.3" font-size="6.3" font-weight="bold" fill="#111" font-family="Liberation Sans">N</text><text x="93.5" y="22" font-size="6.3" font-weight="bold" fill="#111" font-family="Liberation Sans">D</text></svg>
<div class="t" style="left:1759px;top:284.34px;font-size:12px;line-height:12px;color:#111;font-weight:normal;font-family:'Liberation Sans',sans-serif;transform-origin:0 0;">Process07</div>
<svg style="position:absolute;left:1759px;top:310px;" width="101" height="26" viewBox="0 0 101 26"><rect x="0.5" y="0.5" width="100" height="25" fill="#b4b4b4" stroke="#a0a0a0"/><path d="M1,25 V1 H100" stroke="#c4c4c4" fill="none"/><g transform="translate(2,2)"><rect width="22" height="22" fill="#1020e0"/><rect x="1" y="3" width="20" height="18" fill="#2030ff"/><rect x="16" y="0.5" width="2" height="2" fill="#f08030"/><rect x="19" y="0.5" width="2" height="2" fill="#f08030"/><path d="M3,20 Q6,7 19,6 M3,3 V20 H20" stroke="#f08030" stroke-width="1.3" fill="none"/></g><text x="92.5" y="8.3" font-size="6.3" font-weight="bold" fill="#111" font-family="Liberation Sans">N</text><text x="92.5" y="22" font-size="6.3" font-weight="bold" fill="#111" font-family="Liberation Sans">D</text></svg>
<div class="t" style="left:1788px;top:317.34px;font-size:12px;line-height:12px;color:#111;font-weight:normal;font-family:'Liberation Sans',sans-serif;transform-origin:0 0;">Process12</div>
<svg style="position:absolute;left:1759px;top:340px;" width="101" height="26" viewBox="0 0 101 26"><rect x="0.5" y="0.5" width="100" height="25" fill="#b4b4b4" stroke="#a0a0a0"/><path d="M1,25 V1 H100" stroke="#c4c4c4" fill="none"/><g transform="translate(2,2)"><rect width="22" height="22" fill="#2030f0"/><rect x="1" y="1" width="20" height="20" fill="#5070ff"/><path d="M0,5 H22 M0,10 H22 M0,15 H22 M5,0 V22 M10,0 V22 M15,0 V22" stroke="#c0d0ff" stroke-width="0.8"/><path d="M2,21 Q7,20 8,5 Q9,20 21,21 Z" fill="#f08040"/></g><text x="92.5" y="8.3" font-size="6.3" font-weight="bold" fill="#111" font-family="Liberation Sans">N</text><text x="92.5" y="22" font-size="6.3" font-weight="bold" fill="#111" font-family="Liberation Sans">D</text></svg>
<div class="t" style="left:1788px;top:347.34px;font-size:12px;line-height:12px;color:#111;font-weight:normal;font-family:'Liberation Sans',sans-serif;transform-origin:0 0;">Process13</div>
<svg style="position:absolute;left:1759px;top:370px;" width="108" height="26" viewBox="0 0 108 26"><rect x="0.5" y="0.5" width="107" height="25" fill="#b4b4b4" stroke="#a0a0a0"/><path d="M1,25 V1 H107" stroke="#c4c4c4" fill="none"/><g transform="translate(2,2)"><rect width="22" height="22" fill="#1010e0"/><rect x="1" y="1" width="20" height="20" fill="#c8a8c8"/><polygon points="21,2 9,11 21,20 21,16 14,11 21,6" fill="#3040ff"/><polygon points="13,2 3,11 13,20 13,16 7,11 13,6" fill="#3040ff"/></g><text x="99.5" y="8.3" font-size="6.3" font-weight="bold" fill="#111" font-family="Liberation Sans">N</text><rect x="100" y="18" width="4" height="4" fill="#d01010" stroke="#111" stroke-width="0.6"/></svg>
<div class="t" style="left:1788px;top:377.34px;font-size:12px;line-height:12px;color:#111;font-weight:normal;font-family:'Liberation Sans',sans-serif;transform-origin:0 0;">Process101</div>
<svg style="position:absolute;left:1759px;top:400px;" width="101" height="26" viewBox="0 0 101 26"><rect x="0.5" y="0.5" width="100" height="25" fill="#b4b4b4" stroke="#a0a0a0"/><path d="M1,25 V1 H100" stroke="#c4c4c4" fill="none"/><g transform="translate(2,2)"><defs><linearGradient id="p11g" x1="0" y1="0" x2="1" y2="1"><stop offset="0" stop-color="#7020d0"/><stop offset="1" stop-color="#20c020"/></linearGradient><radialGradient id="p11d"><stop offset="0" stop-color="#fff"/><stop offset="0.5" stop-color="#9ab0ff"/><stop offset="1" stop-color="#4060ff" stop-opacity="0"/></radialGradient></defs><rect width="22" height="22" fill="url(#p11g)"/><circle cx="6" cy="6" r="4" fill="url(#p11d)"/><circle cx="16" cy="6" r="4" fill="url(#p11d)"/><circle cx="6" cy="16" r="4" fill="url(#p11d)"/><circle cx="16" cy="16" r="4" fill="url(#p11d)"/></g><text x="92.5" y="8.3" font-size="6.3" font-weight="bold" fill="#111" font-family="Liberation Sans">N</text><text x="92.5" y="22" font-size="6.3" font-weight="bold" fill="#111" font-family="Liberation Sans">D</text></svg>
<div class="t" style="left:1788px;top:407.34px;font-size:12px;line-height:12px;color:#111;font-weight:normal;font-family:'Liberation Sans',sans-serif;transform-origin:0 0;">Process11</div>
<svg style="position:absolute;left:1732px;top:430px;" width="101" height="25" viewBox="0 0 101 25"><rect x="0.5" y="0.5" width="100" height="24" fill="#b4b4b4" stroke="#a0a0a0"/><path d="M1,24 V1 H100" stroke="#c4c4c4" fill="none"/><g transform="translate(2,2)"><defs><linearGradient id="p8g" x1="0" y1="0" x2="1" y2="0"><stop offset="0" stop-color="#3030e0"/><stop offset="1" stop-color="#10c060"/></linearGradient></defs><rect width="22" height="22" fill="url(#p8g)"/><path d="M1,21 Q9,20 10,2 H12 Q13,20 21,21 Z" fill="#f07820"/><path d="M1,8 H6" stroke="#30c0ff" stroke-width="1.5"/><polygon points="9,8 5,5 5,11" fill="#30c0ff"/><path d="M21,8 H16" stroke="#30c0ff" stroke-width="1.5"/><polygon points="13,8 17,5 17,11" fill="#30c0ff"/></g><text x="92.5" y="8.3" font-size="6.3" font-weight="bold" fill="#111" font-family="Liberation Sans">N</text><text x="92.5" y="21" font-size="6.3" font-weight="bold" fill="#111" font-family="Liberation Sans">D</text></svg>
<div class="t" style="left:1761px;top:437.34px;font-size:12px;line-height:12px;color:#111;font-weight:normal;font-family:'Liberation Sans',sans-serif;transform-origin:0 0;">Process08</div>
<svg style="position:absolute;left:1732px;top:459px;" width="101" height="26" viewBox="0 0 101 26"><rect x="0.5" y="0.5" width="100" height="25" fill="#b4b4b4" stroke="#a0a0a0"/><path d="M1,25 V1 H100" stroke="#c4c4c4" fill="none"/><g transform="translate(2,2)"><rect width="22" height="22" fill="#2030e0"/><rect x="11" y="0" width="2.75" height="2.75" fill="#fff"/><rect x="13" y="0" width="2.75" height="2.75" fill="#111"/><rect x="16" y="0" width="2.75" height="2.75" fill="#fff"/><rect x="19" y="0" width="2.75" height="2.75" fill="#111"/><rect x="11" y="2" width="2.75" height="2.75" fill="#111"/><rect x="13" y="2" width="2.75" height="2.75" fill="#fff"/><rect x="16" y="2" width="2.75" height="2.75" fill="#111"/><rect x="19" y="2" width="2.75" height="2.75" fill="#fff"/><rect x="11" y="5" width="2.75" height="2.75" fill="#fff"/><rect x="13" y="5" width="2.75" height="2.75" fill="#111"/><rect x="16" y="5" width="2.75" height="2.75" fill="#fff"/><rect x="19" y="5" width="2.75" height="2.75" fill="#111"/><rect x="11" y="8" width="2.75" height="2.75" fill="#111"/><rect x="13" y="8" width="2.75" height="2.75" fill="#fff"/><rect x="16" y="8" width="2.75" height="2.75" fill="#111"/><rect x="19" y="8" width="2.75" height="2.75" fill="#fff"/><rect x="11" y="11" width="2.75" height="2.75" fill="#fff"/><rect x="13" y="11" width="2.75" height="2.75" fill="#111"/><rect x="16" y="11" width="2.75" height="2.75" fill="#fff"/><rect x="19" y="11" width="2.75" height="2.75" fill="#111"/><rect x="11" y="13" width="2.75" height="2.75" fill="#111"/><rect x="13" y="13" width="2.75" height="2.75" fill="#fff"/><rect x="16" y="13" width="2.75" height="2.75" fill="#111"/><rect x="19" y="13" width="2.75" height="2.75" fill="#fff"/><rect x="11" y="16" width="2.75" height="2.75" fill="#fff"/><rect x="13" y="16" width="2.75" height="2.75" fill="#111"/><rect x="16" y="16" width="2.75" height="2.75" fill="#fff"/><rect x="19" y="16" width="2.75" height="2.75" fill="#111"/><rect x="11" y="19" width="2.75" height="2.75" fill="#111"/><rect x="13" y="19" width="2.75" height="2.75" fill="#fff"/><rect x="16" y="19" width="2.75" height="2.75" fill="#111"/><rect x="19" y="19" width="2.75" height="2.75" fill="#fff"/><path d="M0,5 H11 M0,10 H11 M0,15 H11 M5,0 V22" stroke="#a0b0ff" stroke-width="0.8"/><path d="M2,21 Q5,6 19,3" stroke="#f07820" stroke-width="1.6" fill="none"/></g><text x="92.5" y="8.3" font-size="6.3" font-weight="bold" fill="#111" font-family="Liberation Sans">N</text><text x="92.5" y="22" font-size="6.3" font-weight="bold" fill="#111" font-family="Liberation Sans">D</text></svg>
<div class="t" style="left:1761px;top:466.34px;font-size:12px;line-height:12px;color:#111;font-weight:normal;font-family:'Liberation Sans',sans-serif;transform-origin:0 0;">Process09</div>
<svg style="position:absolute;left:1756px;top:490px;" width="101" height="25" viewBox="0 0 101 25"><rect x="0.5" y="0.5" width="100" height="24" fill="#b4b4b4" stroke="#a0a0a0"/><path d="M1,24 V1 H100" stroke="#c4c4c4" fill="none"/><g transform="translate(2,2)"><defs><linearGradient id="p15g" x1="0" y1="0" x2="1" y2="1"><stop offset="0" stop-color="#7020d0"/><stop offset="1" stop-color="#20c020"/></linearGradient><radialGradient id="p15d"><stop offset="0" stop-color="#fff"/><stop offset="0.5" stop-color="#9ab0ff"/><stop offset="1" stop-color="#4060ff" stop-opacity="0"/></radialGradient></defs><rect width="22" height="22" fill="url(#p15g)"/><circle cx="6" cy="6" r="4" fill="url(#p15d)"/><circle cx="16" cy="6" r="4" fill="url(#p15d)"/><circle cx="6" cy="16" r="4" fill="url(#p15d)"/><circle cx="16" cy="16" r="4" fill="url(#p15d)"/></g><text x="92.5" y="8.3" font-size="6.3" font-weight="bold" fill="#111" font-family="Liberation Sans">N</text><text x="92.5" y="21" font-size="6.3" font-weight="bold" fill="#111" font-family="Liberation Sans">D</text></svg>
<div class="t" style="left:1785px;top:497.34px;font-size:12px;line-height:12px;color:#111;font-weight:normal;font-family:'Liberation Sans',sans-serif;transform-origin:0 0;">Process15</div>
<svg style="position:absolute;left:1756px;top:518px;" width="101" height="26" viewBox="0 0 101 26"><rect x="0.5" y="0.5" width="100" height="25" fill="#b4b4b4" stroke="#a0a0a0"/><path d="M1,25 V1 H100" stroke="#c4c4c4" fill="none"/><g transform="translate(2,2)"><g transform="scale(1)"><defs><linearGradient id="p17g" x1="0" y1="0" x2="1" y2="1"><stop offset="0" stop-color="#006400"/><stop offset="1" stop-color="#90ff90"/></linearGradient><linearGradient id="p17p" x1="0" y1="0" x2="0" y2="1"><stop offset="0" stop-color="#e090e0"/><stop offset="0.4" stop-color="#9a10a0"/><stop offset="1" stop-color="#a010c0"/></linearGradient></defs><rect width="22" height="22" fill="url(#p17g)"/><path d="M1,5 H5.5 A2.8,2.8 0 1 1 10.5,5 H16 V10.5 H17 A3,3 0 1 1 17,15.5 H16 V21 H10.5 A2.8,2.8 0 1 0 5.5,21 H1 V14.5 A2.8,2.8 0 1 0 1,9.5 Z" fill="url(#p17p)" stroke="#400040" stroke-width="0.4"/></g></g><text x="92.5" y="8.3" font-size="6.3" font-weight="bold" fill="#111" font-family="Liberation Sans">N</text><text x="92.5" y="22" font-size="6.3" font-weight="bold" fill="#111" font-family="Liberation Sans">D</text></svg>
<div class="t" style="left:1785px;top:525.34px;font-size:12px;line-height:12px;color:#111;font-weight:normal;font-family:'Liberation Sans',sans-serif;transform-origin:0 0;">Process17</div>
<div style="left:0;top:0;width:1920px;height:1080px;opacity:0.83;">
<div style="left:1209px;top:84px;width:399px;height:514px;background:#5f5f5f;border:1px solid #5f5f5f;"></div>
<div style="left:1210px;top:85px;width:397px;height:26px;background:#747474;"></div>
<div style="left:1212px;top:110px;width:393px;height:485px;background:#dedee0;"></div>
<div style="left:1213px;top:88px;width:29px;height:30px;border:1px solid #6a6a6a;"></div>
<svg style="position:absolute;left:1215px;top:90px;" width="24" height="24" viewBox="0 0 24 24"><defs><linearGradient id="smg" x1="0" y1="0" x2="1" y2="1"><stop offset="0" stop-color="#a020e0"/><stop offset="1" stop-color="#30e030"/></linearGradient></defs><rect x="1" y="1" width="16" height="16" fill="url(#smg)"/><circle cx="5" cy="5" r="2.8" fill="#a0b8ff"/><circle cx="13" cy="5" r="2.8" fill="#a0b8ff"/><circle cx="5" cy="13" r="2.8" fill="#a0b8ff"/><circle cx="13" cy="13" r="2.8" fill="#a0b8ff"/></svg>
<div style="left:1249px;top:90px;width:1px;height:25px;background:#666;"></div>
<div style="left:1326px;top:90px;width:1px;height:25px;background:#666;"></div>
<div style="left:1368px;top:90px;width:1px;height:25px;background:#666;"></div>
<svg style="position:absolute;left:1261px;top:95px;" width="18" height="16" viewBox="0 0 18 16"><polygon points="0,5 4,0 4,16 0,16" fill="#6e6e6e"/><rect x="4.5" y="0.5" width="12" height="16" fill="#7c7c7c" stroke="#707070"/><path d="M10,9 V19 M6.5,15 L10,19 L13.5,15" stroke="#6c6c6c" stroke-width="2" fill="none"/></svg>
<svg style="position:absolute;left:1294px;top:95px;" width="18" height="16" viewBox="0 0 18 16"><polygon points="0,5 4,0 4,16 0,16" fill="#6e6e6e"/><rect x="4.5" y="0.5" width="12" height="16" fill="#7c7c7c" stroke="#707070"/><path d="M10,19 V9 M6.5,13 L10,9 L13.5,13" stroke="#6c6c6c" stroke-width="2" fill="none"/></svg>
<svg style="position:absolute;left:1337px;top:95px;" width="18" height="16" viewBox="0 0 18 16"><polygon points="0,5 4,0 4,16 0,16" fill="#6e6e6e"/><rect x="4.5" y="0.5" width="12" height="16" fill="#7c7c7c" stroke="#707070"/><path d="M7,13 Q9,7 14,10 Q15,14 12,16" stroke="#6c6c6c" stroke-width="1.8" fill="none"/><polygon points="5,10 9,12 6,15" fill="#6c6c6c"/></svg>
<svg style="position:absolute;left:1380px;top:95px;" width="18" height="16" viewBox="0 0 18 16"><polygon points="0,5 4,0 4,16 0,16" fill="#6e6e6e"/><rect x="4.5" y="0.5" width="12" height="16" fill="#7c7c7c" stroke="#707070"/><circle cx="10" cy="15" r="3" fill="none" stroke="#6c6c6c" stroke-width="2.2"/></svg>
<svg style="position:absolute;left:1413px;top:95px;" width="18" height="16" viewBox="0 0 18 16"><polygon points="0,5 4,0 4,16 0,16" fill="#6e6e6e"/><rect x="4.5" y="0.5" width="12" height="16" fill="#7c7c7c" stroke="#707070"/><path d="M13,11 A4,4 0 1 1 8,11" stroke="#6c6c6c" stroke-width="1.8" fill="none"/></svg>
<svg style="position:absolute;left:1446px;top:95px;" width="18" height="16" viewBox="0 0 18 16"><polygon points="0,5 4,0 4,16 0,16" fill="#6e6e6e"/><rect x="4.5" y="0.5" width="12" height="16" fill="#7c7c7c" stroke="#707070"/><circle cx="11" cy="15" r="4.5" fill="none" stroke="#6c6c6c" stroke-width="1.3"/><path d="M8.5,12.5 L13.5,17.5 M13.5,12.5 L8.5,17.5" stroke="#6c6c6c" stroke-width="1.2"/></svg>
<div class="t" style="left:898px;width:1000px;text-align:center;top:91.00px;font-size:13px;line-height:13px;color:#e6e6e6;font-weight:bold;font-family:'Liberation Sans',sans-serif;transform:scaleX(1.14);">StarMask</div>
<svg style="position:absolute;left:1567px;top:92px;" width="12" height="12" viewBox="0 0 12 12"><rect x="1" y="1" width="10" height="2" fill="#f0f0f0"/><polygon points="6,4 11,10.5 1,10.5" fill="#f0f0f0"/></svg>
<svg style="position:absolute;left:1588px;top:92px;" width="12" height="12" viewBox="0 0 12 12"><path d="M1.5,1.5 L10.5,10.5 M10.5,1.5 L1.5,10.5" stroke="#f0f0f0" stroke-width="2"/></svg>
<div class="t" style="right:602px;top:123.92px;font-size:12.5px;line-height:12.5px;color:#070707;font-weight:normal;font-family:'Liberation Sans',sans-serif;transform-origin:100% 0;">Noise threshold:</div>
<div style="left:1323px;top:119px;width:63px;height:19px;background:#fcfcfc;border:1px solid #5f99ff;box-shadow:0 0 0 1px #acd1ff;"></div>
<div class="t" style="left:1330px;top:123.92px;font-size:12.5px;line-height:12.5px;color:#070707;font-weight:normal;font-family:'Liberation Sans',sans-serif;transform-origin:0 0;">0.70000</div>
<div style="left:1377px;top:122px;width:1px;height:13px;background:#111;"></div>
<div style="left:1390px;top:125.5px;width:200px;height:6px;background:#fefefe;border:1px solid #777777;"></div>
<div style="left:1390px;top:125.5px;width:137px;height:6px;background:#9c9c9c;border:1px solid #777777;"></div>
<svg style="position:absolute;left:1521px;top:122.5px;" width="12" height="12" viewBox="0 0 12 12"><defs><radialGradient id="hg15398" cx="40%" cy="35%"><stop offset="0" stop-color="#ffffff"/><stop offset="1" stop-color="#d1d1d1"/></radialGradient></defs><circle cx="6" cy="6" r="5.3" fill="url(#hg15398)" stroke="#868686" stroke-width="1"/></svg>
<div class="t" style="right:602px;top:149.92px;font-size:12.5px;line-height:12.5px;color:#070707;font-weight:normal;font-family:'Liberation Sans',sans-serif;transform-origin:100% 0;">Working mode:</div>
<div style="left:1323px;top:146px;width:273px;height:19px;background:linear-gradient(#ffffff,#e1e1e1);border:1px solid #777777;border-radius:1px;"></div>
<div style="left:1575px;top:149px;width:1px;height:13px;background:#999999;"></div>
<svg style="position:absolute;left:1580px;top:151.5px;" width="12" height="8" viewBox="0 0 12 8"><polygon points="1,1 11,1 6,7" fill="#070707"/></svg>
<div class="t" style="left:1329px;top:149.92px;font-size:12.5px;line-height:12.5px;color:#070707;font-weight:normal;font-family:'Liberation Sans',sans-serif;transform-origin:0 0;">Star Mask</div>
<div class="t" style="right:602px;top:175.92px;font-size:12.5px;line-height:12.5px;color:#070707;font-weight:normal;font-family:'Liberation Sans',sans-serif;transform-origin:100% 0;">Scale:</div>
<div style="left:1323px;top:171px;width:63px;height:20px;background:#fcfcfc;border:1px solid #777777;"></div>
<div style="left:1370px;top:172px;width:15px;height:18px;background:linear-gradient(#f7f7f7,#e4e4e4 45%,#f7f7f7 55%,#dfdfdf);"></div>
<svg style="position:absolute;left:1372px;top:173px;" width="12" height="16" viewBox="0 0 12 16"><polygon points="6,1.5 10.5,6.5 1.5,6.5" fill="#070707"/><polygon points="1.5,10 10.5,10 6,14.5" fill="#070707"/></svg>
<div class="t" style="left:1331px;top:175.92px;font-size:12.5px;line-height:12.5px;color:#070707;font-weight:normal;font-family:'Liberation Sans',sans-serif;transform-origin:0 0;">7</div>
<div style="left:1220px;top:197px;width:377px;height:19px;background:#c2bfb7;"></div>
<div class="t" style="left:1224px;top:200.00px;font-size:13px;line-height:13px;color:#1264c7;font-weight:bold;font-family:'Liberation Sans',sans-serif;transform-origin:0 0;">Structure Growth</div>
<svg style="position:absolute;left:1577px;top:199.5px;" width="14" height="14" viewBox="0 0 14 14"><polygon points="7,1 13,6 1,6" fill="#1264c7"/><polygon points="7,6.5 13,12 1,12" fill="#1264c7"/></svg>
<div class="t" style="right:602px;top:227.42px;font-size:12.5px;line-height:12.5px;color:#070707;font-weight:normal;font-family:'Liberation Sans',sans-serif;transform-origin:100% 0;">Large-scale:</div>
<div style="left:1323px;top:222px;width:63px;height:20px;background:#fcfcfc;border:1px solid #777777;"></div>
<div style="left:1370px;top:223px;width:15px;height:18px;background:linear-gradient(#f7f7f7,#e4e4e4 45%,#f7f7f7 55%,#dfdfdf);"></div>
<svg style="position:absolute;left:1372px;top:224px;" width="12" height="16" viewBox="0 0 12 16"><polygon points="6,1.5 10.5,6.5 1.5,6.5" fill="#070707"/><polygon points="1.5,10 10.5,10 6,14.5" fill="#070707"/></svg>
<div class="t" style="left:1331px;top:227.42px;font-size:12.5px;line-height:12.5px;color:#070707;font-weight:normal;font-family:'Liberation Sans',sans-serif;transform-origin:0 0;">2</div>
<div class="t" style="right:602px;top:251.42px;font-size:12.5px;line-height:12.5px;color:#070707;font-weight:normal;font-family:'Liberation Sans',sans-serif;transform-origin:100% 0;">Small-scale:</div>
<div style="left:1323px;top:246px;width:63px;height:20px;background:#fcfcfc;border:1px solid #777777;"></div>
<div style="left:1370px;top:247px;width:15px;height:18px;background:linear-gradient(#f7f7f7,#e4e4e4 45%,#f7f7f7 55%,#dfdfdf);"></div>
<svg style="position:absolute;left:1372px;top:248px;" width="12" height="16" viewBox="0 0 12 16"><polygon points="6,1.5 10.5,6.5 1.5,6.5" fill="#070707"/><polygon points="1.5,10 10.5,10 6,14.5" fill="#070707"/></svg>
<div class="t" style="left:1331px;top:251.42px;font-size:12.5px;line-height:12.5px;color:#070707;font-weight:normal;font-family:'Liberation Sans',sans-serif;transform-origin:0 0;">0</div>
<div class="t" style="right:602px;top:275.42px;font-size:12.5px;line-height:12.5px;color:#070707;font-weight:normal;font-family:'Liberation Sans',sans-serif;transform-origin:100% 0;">Compensation:</div>
<div style="left:1323px;top:270px;width:63px;height:20px;background:#fcfcfc;border:1px solid #777777;"></div>
<div style="left:1370px;top:271px;width:15px;height:18px;background:linear-gradient(#f7f7f7,#e4e4e4 45%,#f7f7f7 55%,#dfdfdf);"></div>
<svg style="position:absolute;left:1372px;top:272px;" width="12" height="16" viewBox="0 0 12 16"><polygon points="6,1.5 10.5,6.5 1.5,6.5" fill="#070707"/><polygon points="1.5,10 10.5,10 6,14.5" fill="#070707"/></svg>
<div class="t" style="left:1331px;top:275.42px;font-size:12.5px;line-height:12.5px;color:#070707;font-weight:normal;font-family:'Liberation Sans',sans-serif;transform-origin:0 0;">1</div>
<div style="left:1220px;top:296px;width:377px;height:19px;background:#c2bfb7;"></div>
<div class="t" style="left:1224px;top:299.00px;font-size:13px;line-height:13px;color:#1264c7;font-weight:bold;font-family:'Liberation Sans',sans-serif;transform-origin:0 0;">Mask Generation</div>
<svg style="position:absolute;left:1577px;top:298.5px;" width="14" height="14" viewBox="0 0 14 14"><polygon points="7,1 13,6 1,6" fill="#1264c7"/><polygon points="7,6.5 13,12 1,12" fill="#1264c7"/></svg>
<div class="t" style="right:602px;top:326.42px;font-size:12.5px;line-height:12.5px;color:#070707;font-weight:normal;font-family:'Liberation Sans',sans-serif;transform-origin:100% 0;">Smoothness:</div>
<div style="left:1323px;top:321px;width:63px;height:20px;background:#fcfcfc;border:1px solid #777777;"></div>
<div style="left:1370px;top:322px;width:15px;height:18px;background:linear-gradient(#f7f7f7,#e4e4e4 45%,#f7f7f7 55%,#dfdfdf);"></div>
<svg style="position:absolute;left:1372px;top:323px;" width="12" height="16" viewBox="0 0 12 16"><polygon points="6,1.5 10.5,6.5 1.5,6.5" fill="#070707"/><polygon points="1.5,10 10.5,10 6,14.5" fill="#070707"/></svg>
<div class="t" style="left:1331px;top:326.42px;font-size:12.5px;line-height:12.5px;color:#070707;font-weight:normal;font-family:'Liberation Sans',sans-serif;transform-origin:0 0;">16</div>
<div style="left:1323px;top:345px;width:13px;height:13px;background:#f5f5f5;border:1px solid #7a7a7a;"></div>
<div class="t" style="left:1342px;top:346.92px;font-size:12.5px;line-height:12.5px;color:#070707;font-weight:normal;font-family:'Liberation Sans',sans-serif;transform-origin:0 0;">Aggregate</div>
<div style="left:1323px;top:363px;width:13px;height:13px;background:#f5f5f5;border:1px solid #7a7a7a;"></div>
<div class="t" style="left:1342px;top:365.42px;font-size:12.5px;line-height:12.5px;color:#070707;font-weight:normal;font-family:'Liberation Sans',sans-serif;transform-origin:0 0;">Binarize</div>
<div style="left:1323px;top:381px;width:13px;height:13px;background:#f5f5f5;border:1px solid #7a7a7a;"></div>
<div class="t" style="left:1342px;top:383.42px;font-size:12.5px;line-height:12.5px;color:#070707;font-weight:normal;font-family:'Liberation Sans',sans-serif;transform-origin:0 0;">Contours</div>
<div style="left:1323px;top:399px;width:13px;height:13px;background:#f5f5f5;border:1px solid #7a7a7a;"></div>
<div class="t" style="left:1342px;top:401.42px;font-size:12.5px;line-height:12.5px;color:#070707;font-weight:normal;font-family:'Liberation Sans',sans-serif;transform-origin:0 0;">Invert</div>
<div style="left:1220px;top:419px;width:377px;height:19px;background:#c2bfb7;"></div>
<div class="t" style="left:1224px;top:422.00px;font-size:13px;line-height:13px;color:#1264c7;font-weight:bold;font-family:'Liberation Sans',sans-serif;transform-origin:0 0;">Mask Preprocessing</div>
<svg style="position:absolute;left:1577px;top:421.5px;" width="14" height="14" viewBox="0 0 14 14"><polygon points="7,1 13,6 1,6" fill="#1264c7"/><polygon points="7,6.5 13,12 1,12" fill="#1264c7"/></svg>
<div class="t" style="right:602px;top:449.92px;font-size:12.5px;line-height:12.5px;color:#070707;font-weight:normal;font-family:'Liberation Sans',sans-serif;transform-origin:100% 0;">Shadows:</div>
<div style="left:1323px;top:444px;width:63px;height:20px;background:#fcfcfc;border:1px solid #777777;"></div>
<div class="t" style="left:1330px;top:449.92px;font-size:12.5px;line-height:12.5px;color:#070707;font-weight:normal;font-family:'Liberation Sans',sans-serif;transform-origin:0 0;">0.00000</div>
<div style="left:1390px;top:451px;width:207px;height:6px;background:#fefefe;border:1px solid #777777;"></div>
<div style="left:1390px;top:451px;width:5.5px;height:6px;background:#9c9c9c;border:1px solid #777777;"></div>
<svg style="position:absolute;left:1389.5px;top:448px;" width="12" height="12" viewBox="0 0 12 12"><defs><radialGradient id="hg14409" cx="40%" cy="35%"><stop offset="0" stop-color="#ffffff"/><stop offset="1" stop-color="#d1d1d1"/></radialGradient></defs><circle cx="6" cy="6" r="5.3" fill="url(#hg14409)" stroke="#868686" stroke-width="1"/></svg>
<div class="t" style="right:602px;top:474.92px;font-size:12.5px;line-height:12.5px;color:#070707;font-weight:normal;font-family:'Liberation Sans',sans-serif;transform-origin:100% 0;">Midtones:</div>
<div style="left:1323px;top:469px;width:63px;height:20px;background:#fcfcfc;border:1px solid #777777;"></div>
<div class="t" style="left:1330px;top:474.92px;font-size:12.5px;line-height:12.5px;color:#070707;font-weight:normal;font-family:'Liberation Sans',sans-serif;transform-origin:0 0;">0.50000</div>
<div style="left:1390px;top:476px;width:207px;height:6px;background:#fefefe;border:1px solid #777777;"></div>
<div style="left:1390px;top:476px;width:103px;height:6px;background:#9c9c9c;border:1px solid #777777;"></div>
<svg style="position:absolute;left:1487px;top:473px;" width="12" height="12" viewBox="0 0 12 12"><defs><radialGradient id="hg15409" cx="40%" cy="35%"><stop offset="0" stop-color="#ffffff"/><stop offset="1" stop-color="#d1d1d1"/></radialGradient></defs><circle cx="6" cy="6" r="5.3" fill="url(#hg15409)" stroke="#868686" stroke-width="1"/></svg>
<div class="t" style="right:602px;top:499.92px;font-size:12.5px;line-height:12.5px;color:#070707;font-weight:normal;font-family:'Liberation Sans',sans-serif;transform-origin:100% 0;">Highlights:</div>
<div style="left:1323px;top:494px;width:63px;height:20px;background:#fcfcfc;border:1px solid #777777;"></div>
<div class="t" style="left:1330px;top:499.92px;font-size:12.5px;line-height:12.5px;color:#070707;font-weight:normal;font-family:'Liberation Sans',sans-serif;transform-origin:0 0;">1.00000</div>
<div style="left:1390px;top:501px;width:207px;height:6px;background:#fefefe;border:1px solid #777777;"></div>
<div style="left:1390px;top:501px;width:201.5px;height:6px;background:#9c9c9c;border:1px solid #777777;"></div>
<svg style="position:absolute;left:1585.5px;top:498px;" width="12" height="12" viewBox="0 0 12 12"><defs><radialGradient id="hg16419" cx="40%" cy="35%"><stop offset="0" stop-color="#ffffff"/><stop offset="1" stop-color="#d1d1d1"/></radialGradient></defs><circle cx="6" cy="6" r="5.3" fill="url(#hg16419)" stroke="#868686" stroke-width="1"/></svg>
<div class="t" style="right:602px;top:524.92px;font-size:12.5px;line-height:12.5px;color:#070707;font-weight:normal;font-family:'Liberation Sans',sans-serif;transform-origin:100% 0;">Truncation:</div>
<div style="left:1323px;top:519px;width:63px;height:20px;background:#fcfcfc;border:1px solid #777777;"></div>
<div class="t" style="left:1330px;top:524.92px;font-size:12.5px;line-height:12.5px;color:#070707;font-weight:normal;font-family:'Liberation Sans',sans-serif;transform-origin:0 0;">1.00000</div>
<div style="left:1390px;top:526px;width:207px;height:6px;background:#fefefe;border:1px solid #777777;"></div>
<div style="left:1390px;top:526px;width:201.5px;height:6px;background:#9c9c9c;border:1px solid #777777;"></div>
<svg style="position:absolute;left:1585.5px;top:523px;" width="12" height="12" viewBox="0 0 12 12"><defs><radialGradient id="hg16444" cx="40%" cy="35%"><stop offset="0" stop-color="#ffffff"/><stop offset="1" stop-color="#d1d1d1"/></radialGradient></defs><circle cx="6" cy="6" r="5.3" fill="url(#hg16444)" stroke="#868686" stroke-width="1"/></svg>
<div class="t" style="right:602px;top:549.92px;font-size:12.5px;line-height:12.5px;color:#070707;font-weight:normal;font-family:'Liberation Sans',sans-serif;transform-origin:100% 0;">Limit:</div>
<div style="left:1323px;top:544px;width:63px;height:20px;background:#fcfcfc;border:1px solid #777777;"></div>
<div class="t" style="left:1330px;top:549.92px;font-size:12.5px;line-height:12.5px;color:#070707;font-weight:normal;font-family:'Liberation Sans',sans-serif;transform-origin:0 0;">1.00000</div>
<div style="left:1390px;top:551px;width:207px;height:6px;background:#fefefe;border:1px solid #777777;"></div>
<div style="left:1390px;top:551px;width:201.5px;height:6px;background:#9c9c9c;border:1px solid #777777;"></div>
<svg style="position:absolute;left:1585.5px;top:548px;" width="12" height="12" viewBox="0 0 12 12"><defs><radialGradient id="hg16469" cx="40%" cy="35%"><stop offset="0" stop-color="#ffffff"/><stop offset="1" stop-color="#d1d1d1"/></radialGradient></defs><circle cx="6" cy="6" r="5.3" fill="url(#hg16469)" stroke="#868686" stroke-width="1"/></svg>
<div style="left:1212px;top:573px;width:393px;height:22px;background:#c2bfb7;"></div>
<svg style="position:absolute;left:1220px;top:578.0px;" width="13" height="13" viewBox="0 0 13 13"><polygon points="1,12 12,12 1,1" fill="#1264c7"/></svg>
<svg style="position:absolute;left:1245px;top:578.0px;" width="13" height="13" viewBox="0 0 13 13"><rect x="1" y="1" width="11" height="11" fill="#1264c7"/></svg>
<svg style="position:absolute;left:1533.5px;top:578.0px;" width="13" height="13" viewBox="0 0 13 13"><rect x="1.5" y="1.5" width="10" height="10" fill="none" stroke="#1264c7" stroke-width="2"/></svg>
<svg style="position:absolute;left:1558.5px;top:578.0px;" width="13" height="13" viewBox="0 0 13 13"><polygon points="1.5,1.5 7,1.5 11.5,6 11.5,11.5 1.5,11.5" fill="none" stroke="#1264c7" stroke-width="2"/></svg>
<svg style="position:absolute;left:1583px;top:577.0px;" width="14" height="14" viewBox="0 0 14 14"><path d="M1,1 L4.8,4.8 M13,1 L9.2,4.8 M1,13 L4.8,9.2 M13,13 L9.2,9.2" stroke="#1264c7" stroke-width="1.9"/><polygon points="6.2,6.2 6.2,2.4 2.4,6.2" fill="#1264c7"/><polygon points="7.8,6.2 7.8,2.4 11.6,6.2" fill="#1264c7"/><polygon points="6.2,7.8 6.2,11.6 2.4,7.8" fill="#1264c7"/><polygon points="7.8,7.8 7.8,11.6 11.6,7.8" fill="#1264c7"/></svg>
</div>
<div style="left:0;top:0;width:1920px;height:1080px;opacity:1;">
<div style="left:1209px;top:600px;width:339px;height:442px;background:#5e5e5e;"></div>
<div style="left:1210px;top:601px;width:337px;height:25px;background:#6b6b6b;"></div>
<div style="left:1212px;top:625px;width:333px;height:414px;background:#c4c4c6;"></div>
<svg style="position:absolute;left:1214px;top:604px;" width="18" height="18" viewBox="0 0 18 18"><g transform="scale(0.818182)"><defs><linearGradient id="mtpg" x1="0" y1="0" x2="1" y2="1"><stop offset="0" stop-color="#006400"/><stop offset="1" stop-color="#90ff90"/></linearGradient><linearGradient id="mtpp" x1="0" y1="0" x2="0" y2="1"><stop offset="0" stop-color="#e090e0"/><stop offset="0.4" stop-color="#9a10a0"/><stop offset="1" stop-color="#a010c0"/></linearGradient></defs><rect width="22" height="22" fill="url(#mtpg)"/><path d="M1,5 H5.5 A2.8,2.8 0 1 1 10.5,5 H16 V10.5 H17 A3,3 0 1 1 17,15.5 H16 V21 H10.5 A2.8,2.8 0 1 0 5.5,21 H1 V14.5 A2.8,2.8 0 1 0 1,9.5 Z" fill="url(#mtpp)" stroke="#400040" stroke-width="0.4"/></g></svg>
<div class="t" style="left:869px;width:1000px;text-align:center;top:606.00px;font-size:13px;line-height:13px;color:#dcdcdc;font-weight:bold;font-family:'Liberation Sans',sans-serif;transform:scaleX(1.13);">MorphologicalTransformation</div>
<svg style="position:absolute;left:1508px;top:607px;" width="12" height="12" viewBox="0 0 12 12"><rect x="1" y="1" width="10" height="2" fill="#ececec"/><polygon points="6,4 11,10.5 1,10.5" fill="#ececec"/></svg>
<svg style="position:absolute;left:1529px;top:607px;" width="12" height="12" viewBox="0 0 12 12"><path d="M1.5,1.5 L10.5,10.5 M10.5,1.5 L1.5,10.5" stroke="#ececec" stroke-width="2"/></svg>
<div style="left:1220px;top:633px;width:318px;height:19px;background:#aca9a3;"></div>
<div class="t" style="left:1224px;top:636.00px;font-size:13px;line-height:13px;color:#1a5eb0;font-weight:bold;font-family:'Liberation Sans',sans-serif;transform-origin:0 0;">Morphological Filter</div>
<svg style="position:absolute;left:1518px;top:635.5px;" width="14" height="14" viewBox="0 0 14 14"><polygon points="7,1 13,6 1,6" fill="#1a5eb0"/><polygon points="7,6.5 13,12 1,12" fill="#1a5eb0"/></svg>
<div class="t" style="right:629px;top:661.92px;font-size:12.5px;line-height:12.5px;color:#111;font-weight:normal;font-family:'Liberation Sans',sans-serif;transform-origin:100% 0;">Operator:</div>
<div style="left:1296px;top:658px;width:242px;height:20px;background:linear-gradient(#e6e6e6,#c6c6c6);border:1px solid #6e6e6e;border-radius:1px;"></div>
<div style="left:1517px;top:661px;width:1px;height:14px;background:#8a8a8a;"></div>
<svg style="position:absolute;left:1522px;top:664.0px;" width="12" height="8" viewBox="0 0 12 8"><polygon points="1,1 11,1 6,7" fill="#111"/></svg>
<div class="t" style="left:1302px;top:661.92px;font-size:12.5px;line-height:12.5px;color:#111;font-weight:normal;font-family:'Liberation Sans',sans-serif;transform-origin:0 0;">Dilation (Maximum)</div>
<div class="t" style="right:629px;top:685.92px;font-size:12.5px;line-height:12.5px;color:#111;font-weight:normal;font-family:'Liberation Sans',sans-serif;transform-origin:100% 0;">Interlacing:</div>
<div style="left:1296px;top:682px;width:68px;height:20px;background:#dcdcdc;border:1px solid #6e6e6e;"></div>
<div style="left:1348px;top:683px;width:15px;height:18px;background:linear-gradient(#d8d8d8,#c8c8c8 45%,#d8d8d8 55%,#c4c4c4);"></div>
<svg style="position:absolute;left:1350px;top:684px;" width="12" height="16" viewBox="0 0 12 16"><polygon points="6,1.5 10.5,6.5 1.5,6.5" fill="#111"/><polygon points="1.5,10 10.5,10 6,14.5" fill="#111"/></svg>
<div class="t" style="left:1304px;top:685.92px;font-size:12.5px;line-height:12.5px;color:#111;font-weight:normal;font-family:'Liberation Sans',sans-serif;transform-origin:0 0;">1</div>
<div class="t" style="right:629px;top:709.92px;font-size:12.5px;line-height:12.5px;color:#111;font-weight:normal;font-family:'Liberation Sans',sans-serif;transform-origin:100% 0;">Iterations:</div>
<div style="left:1296px;top:706px;width:68px;height:20px;background:#dcdcdc;border:1px solid #6e6e6e;"></div>
<div style="left:1348px;top:707px;width:15px;height:18px;background:linear-gradient(#d8d8d8,#c8c8c8 45%,#d8d8d8 55%,#c4c4c4);"></div>
<svg style="position:absolute;left:1350px;top:708px;" width="12" height="16" viewBox="0 0 12 16"><polygon points="6,1.5 10.5,6.5 1.5,6.5" fill="#111"/><polygon points="1.5,10 10.5,10 6,14.5" fill="#111"/></svg>
<div class="t" style="left:1304px;top:709.92px;font-size:12.5px;line-height:12.5px;color:#111;font-weight:normal;font-family:'Liberation Sans',sans-serif;transform-origin:0 0;">4</div>
<div class="t" style="right:629px;top:734.92px;font-size:12.5px;line-height:12.5px;color:#111;font-weight:normal;font-family:'Liberation Sans',sans-serif;transform-origin:100% 0;">Amount:</div>
<div style="left:1296px;top:731px;width:68px;height:19px;background:#dcdcdc;border:1px solid #6e6e6e;"></div>
<div class="t" style="left:1303px;top:734.92px;font-size:12.5px;line-height:12.5px;color:#111;font-weight:normal;font-family:'Liberation Sans',sans-serif;transform-origin:0 0;">1.00</div>
<div style="left:1368px;top:737.5px;width:170px;height:6px;background:#dedede;border:1px solid #6e6e6e;"></div>
<div style="left:1368px;top:737.5px;width:164px;height:6px;background:#8c8c8c;border:1px solid #6e6e6e;"></div>
<svg style="position:absolute;left:1526px;top:734.5px;" width="12" height="12" viewBox="0 0 12 12"><defs><radialGradient id="hg16060" cx="40%" cy="35%"><stop offset="0" stop-color="#e8e8e8"/><stop offset="1" stop-color="#b8b8b8"/></radialGradient></defs><circle cx="6" cy="6" r="5.3" fill="url(#hg16060)" stroke="#7a7a7a" stroke-width="1"/></svg>
<div class="t" style="right:629px;top:759.92px;font-size:12.5px;line-height:12.5px;color:#8a8a8a;font-weight:normal;font-family:'Liberation Sans',sans-serif;transform-origin:100% 0;">Selection:</div>
<div style="left:1296px;top:755px;width:68px;height:20px;background:#b8b8b8;border:1px solid #6e6e6e;"></div>
<div class="t" style="left:1303px;top:759.92px;font-size:12.5px;line-height:12.5px;color:#8a8a8a;font-weight:normal;font-family:'Liberation Sans',sans-serif;transform-origin:0 0;">0.50</div>
<div style="left:1368px;top:762.5px;width:170px;height:6px;background:#dedede;border:1px solid #6e6e6e;"></div>
<div style="left:1368px;top:762.5px;width:85px;height:6px;background:#8c8c8c;border:1px solid #6e6e6e;"></div>
<svg style="position:absolute;left:1447px;top:759.5px;" width="12" height="12" viewBox="0 0 12 12"><defs><radialGradient id="hg15295" cx="40%" cy="35%"><stop offset="0" stop-color="#b0b0b0"/><stop offset="1" stop-color="#8a8a8a"/></radialGradient></defs><circle cx="6" cy="6" r="5.3" fill="url(#hg15295)" stroke="#7a7a7a" stroke-width="1"/></svg>
<div style="left:1220px;top:782px;width:318px;height:19px;background:#aca9a3;"></div>
<div class="t" style="left:1224px;top:785.00px;font-size:13px;line-height:13px;color:#1a5eb0;font-weight:bold;font-family:'Liberation Sans',sans-serif;transform-origin:0 0;">Structuring Element</div>
<svg style="position:absolute;left:1518px;top:784.5px;" width="14" height="14" viewBox="0 0 14 14"><polygon points="7,1 13,6 1,6" fill="#1a5eb0"/><polygon points="7,6.5 13,12 1,12" fill="#1a5eb0"/></svg>
<svg style="position:absolute;left:1220px;top:807px;" width="126" height="126" viewBox="0 0 126 126"><rect x="0" y="0" width="126" height="126" fill="#555"/><rect x="1" y="1" width="23.6" height="23.6" fill="#0c0c0c"/><rect x="26" y="1" width="23.6" height="23.6" fill="#dadada"/><rect x="51" y="1" width="23.6" height="23.6" fill="#dadada"/><rect x="76" y="1" width="23.6" height="23.6" fill="#dadada"/><rect x="101" y="1" width="23.6" height="23.6" fill="#0c0c0c"/><rect x="1" y="26" width="23.6" height="23.6" fill="#dadada"/><rect x="26" y="26" width="23.6" height="23.6" fill="#dadada"/><rect x="51" y="26" width="23.6" height="23.6" fill="#dadada"/><rect x="76" y="26" width="23.6" height="23.6" fill="#dadada"/><rect x="101" y="26" width="23.6" height="23.6" fill="#dadada"/><rect x="1" y="51" width="23.6" height="23.6" fill="#dadada"/><rect x="26" y="51" width="23.6" height="23.6" fill="#dadada"/><rect x="51" y="51" width="23.6" height="23.6" fill="#dadada"/><rect x="76" y="51" width="23.6" height="23.6" fill="#dadada"/><rect x="101" y="51" width="23.6" height="23.6" fill="#dadada"/><rect x="1" y="76" width="23.6" height="23.6" fill="#dadada"/><rect x="26" y="76" width="23.6" height="23.6" fill="#dadada"/><rect x="51" y="76" width="23.6" height="23.6" fill="#dadada"/><rect x="76" y="76" width="23.6" height="23.6" fill="#dadada"/><rect x="101" y="76" width="23.6" height="23.6" fill="#dadada"/><rect x="1" y="101" width="23.6" height="23.6" fill="#0c0c0c"/><rect x="26" y="101" width="23.6" height="23.6" fill="#dadada"/><rect x="51" y="101" width="23.6" height="23.6" fill="#dadada"/><rect x="76" y="101" width="23.6" height="23.6" fill="#dadada"/><rect x="101" y="101" width="23.6" height="23.6" fill="#0c0c0c"/></svg>
<div class="t" style="right:535px;top:810.92px;font-size:12.5px;line-height:12.5px;color:#111;font-weight:normal;font-family:'Liberation Sans',sans-serif;transform-origin:100% 0;">Size:</div>
<div style="left:1390px;top:807px;width:148px;height:20px;background:linear-gradient(#e6e6e6,#c6c6c6);border:1px solid #6e6e6e;border-radius:1px;"></div>
<div style="left:1517px;top:810px;width:1px;height:14px;background:#8a8a8a;"></div>
<svg style="position:absolute;left:1522px;top:813.0px;" width="12" height="8" viewBox="0 0 12 8"><polygon points="1,1 11,1 6,7" fill="#111"/></svg>
<div class="t" style="left:1396px;top:810.92px;font-size:12.5px;line-height:12.5px;color:#111;font-weight:normal;font-family:'Liberation Sans',sans-serif;transform-origin:0 0;">5&nbsp; (25 elements)</div>
<div class="t" style="right:535px;top:834.92px;font-size:12.5px;line-height:12.5px;color:#111;font-weight:normal;font-family:'Liberation Sans',sans-serif;transform-origin:100% 0;">Way:</div>
<div style="left:1390px;top:831px;width:148px;height:20px;background:linear-gradient(#e6e6e6,#c6c6c6);border:1px solid #6e6e6e;border-radius:1px;"></div>
<div style="left:1517px;top:834px;width:1px;height:14px;background:#8a8a8a;"></div>
<svg style="position:absolute;left:1522px;top:837.0px;" width="12" height="8" viewBox="0 0 12 8"><polygon points="1,1 11,1 6,7" fill="#111"/></svg>
<div class="t" style="left:1396px;top:834.92px;font-size:12.5px;line-height:12.5px;color:#111;font-weight:normal;font-family:'Liberation Sans',sans-serif;transform-origin:0 0;">1 of 1</div>
<svg style="position:absolute;left:1391px;top:869.5px;" width="16" height="16" viewBox="0 0 16 16"><rect x="1" y="1" width="14" height="14" fill="#9a9a9a"/><path d="M12,12 Q12,5 5,5 M3,5 L6,2.5 M3,5 L6,7.5" stroke="#e0e0e0" stroke-width="1.4" fill="none"/></svg>
<svg style="position:absolute;left:1421px;top:869.5px;" width="16" height="16" viewBox="0 0 16 16"><rect x="1" y="1" width="14" height="14" fill="#2020d0"/><polygon points="15,1 15,15 1,15" fill="#c8b020"/><rect x="4" y="4" width="3" height="3" fill="#e0c020"/><rect x="9" y="9" width="3" height="3" fill="#111"/></svg>
<svg style="position:absolute;left:1444px;top:869.5px;" width="16" height="16" viewBox="0 0 16 16"><defs><linearGradient id="bb" x1="0" y1="0" x2="1" y2="1"><stop offset="0" stop-color="#1010c0"/><stop offset="1" stop-color="#8ab0ff"/></linearGradient></defs><rect x="1" y="1" width="14" height="14" fill="url(#bb)"/><path d="M11,5 A4,4 0 1 1 5,5" stroke="#fff" stroke-width="1.3" fill="none"/><polygon points="4,2 7,5 3,6" fill="#fff"/></svg>
<svg style="position:absolute;left:1467px;top:869.5px;" width="16" height="16" viewBox="0 0 16 16"><defs><linearGradient id="bb" x1="0" y1="0" x2="1" y2="1"><stop offset="0" stop-color="#1010c0"/><stop offset="1" stop-color="#8ab0ff"/></linearGradient></defs><rect x="1" y="1" width="14" height="14" fill="url(#bb)"/><text x="5" y="13" font-size="11" fill="#f0e030" font-family="Liberation Sans">1</text></svg>
<svg style="position:absolute;left:1497px;top:869.5px;" width="16" height="16" viewBox="0 0 16 16"><rect x="3" y="3" width="12" height="12" fill="#111"/><rect x="1" y="1" width="12" height="12" fill="#2040f0"/><path d="M7,3 V11 M3,7 H11" stroke="#20e020" stroke-width="2"/></svg>
<svg style="position:absolute;left:1520px;top:869.5px;" width="16" height="16" viewBox="0 0 16 16"><rect x="3" y="3" width="12" height="12" fill="#888"/><rect x="1" y="1" width="12" height="12" fill="#aaa" stroke="#999"/><path d="M3,7 H11" stroke="#ddd" stroke-width="2"/></svg>
<svg style="position:absolute;left:1391px;top:892.5px;" width="16" height="16" viewBox="0 0 16 16"><rect x="1" y="1" width="14" height="14" fill="#9a9a9a"/><path d="M4,12 Q4,5 11,5 M13,5 L10,2.5 M13,5 L10,7.5" stroke="#e0e0e0" stroke-width="1.4" fill="none"/></svg>
<svg style="position:absolute;left:1421px;top:892.5px;" width="16" height="16" viewBox="0 0 16 16"><defs><radialGradient id="bc" cx="35%" cy="35%"><stop offset="0" stop-color="#8ab0ff"/><stop offset="1" stop-color="#1010c0"/></radialGradient></defs><circle cx="8" cy="8" r="7" fill="url(#bc)"/></svg>
<svg style="position:absolute;left:1444px;top:892.5px;" width="16" height="16" viewBox="0 0 16 16"><polygon points="8,1 15,8 8,15 1,8" fill="#3050f0"/><polygon points="8,1 15,8 8,8" fill="#8ab0ff"/></svg>
<svg style="position:absolute;left:1467px;top:892.5px;" width="16" height="16" viewBox="0 0 16 16"><defs><linearGradient id="bb" x1="0" y1="0" x2="1" y2="1"><stop offset="0" stop-color="#1010c0"/><stop offset="1" stop-color="#8ab0ff"/></linearGradient></defs><rect x="1" y="1" width="14" height="14" fill="url(#bb)"/><text x="4" y="13" font-size="11" fill="#f0e030" font-family="Liberation Sans">&#216;</text></svg>
<svg style="position:absolute;left:1497px;top:892.5px;" width="16" height="16" viewBox="0 0 16 16"><rect x="3" y="3" width="12" height="12" fill="#111"/><rect x="1" y="1" width="12" height="12" fill="#eee" stroke="#111"/><text x="3.5" y="11.5" font-size="10" fill="#111" font-family="Liberation Sans">1</text></svg>
<svg style="position:absolute;left:1520px;top:892.5px;" width="16" height="16" viewBox="0 0 16 16"><rect x="3" y="3" width="12" height="12" fill="#111"/><rect x="1" y="1" width="12" height="12" fill="#111" stroke="#eee" stroke-width="0.6"/><text x="2.5" y="11.5" font-size="10" fill="#fff" font-family="Liberation Sans">&#216;</text></svg>
<svg style="position:absolute;left:1391px;top:915.5px;" width="16" height="16" viewBox="0 0 16 16"><path d="M1,1 L6,6 M15,1 L10,6 M1,15 L6,10 M15,15 L10,10" stroke="#3040f0" stroke-width="1.8"/><path d="M8,2 V14 M2,8 H14" stroke="#3040f0" stroke-width="1"/></svg>
<svg style="position:absolute;left:1421px;top:915.5px;" width="16" height="16" viewBox="0 0 16 16"><defs><linearGradient id="bb" x1="0" y1="0" x2="1" y2="1"><stop offset="0" stop-color="#1010c0"/><stop offset="1" stop-color="#8ab0ff"/></linearGradient></defs><rect x="1" y="1" width="14" height="14" fill="url(#bb)"/><path d="M8,2 V14 M2,8 H14" stroke="#fff" stroke-width="1.5"/></svg>
<svg style="position:absolute;left:1444px;top:915.5px;" width="16" height="16" viewBox="0 0 16 16"><defs><linearGradient id="bb" x1="0" y1="0" x2="1" y2="1"><stop offset="0" stop-color="#1010c0"/><stop offset="1" stop-color="#8ab0ff"/></linearGradient></defs><rect x="1" y="1" width="14" height="14" fill="url(#bb)"/><path d="M2,2 L14,14 M14,2 L2,14" stroke="#fff" stroke-width="1.3"/></svg>
<svg style="position:absolute;left:1497px;top:915.5px;" width="16" height="16" viewBox="0 0 16 16"><rect x="3" y="3" width="12" height="12" fill="#111"/><rect x="1" y="1" width="12" height="12" fill="#2040f0" stroke="#111"/><path d="M7,3 V10 M4,7 L7,10 L10,7" stroke="#fff" stroke-width="1.6" fill="none"/></svg>
<svg style="position:absolute;left:1520px;top:915.5px;" width="16" height="16" viewBox="0 0 16 16"><rect x="3" y="3" width="12" height="12" fill="#888"/><rect x="1" y="1" width="12" height="12" fill="#bbb" stroke="#888"/><path d="M10,7 H4 M6,5 L4,7 L6,9" stroke="#eee" stroke-width="1.4" fill="none"/></svg>
<div style="left:1220px;top:938px;width:20px;height:19px;background:#d6d6d6;border:1px solid #999;"></div>
<svg style="position:absolute;left:1222px;top:940px;" width="16" height="15" viewBox="0 0 16 15"><rect x="2" y="1.5" width="11" height="12" fill="#fff" stroke="#111"/><text x="4.5" y="12" font-size="10" fill="#111" font-family="Liberation Sans">1</text></svg>
<svg style="position:absolute;left:1244px;top:939px;" width="18" height="17" viewBox="0 0 18 17"><rect x="2" y="2" width="13" height="13" fill="#111"/><text x="4" y="13" font-size="11" fill="#fff" font-family="Liberation Sans">&#216;</text></svg>
<div style="left:1266px;top:938px;width:20px;height:19px;background:#d6d6d6;border:1px solid #999;"></div>
<svg style="position:absolute;left:1268px;top:940px;" width="16" height="15" viewBox="0 0 16 15"><rect x="1.5" y="1" width="13" height="13" fill="#111"/><path d="M3,3 L13,12 M13,3 L3,12 M8,2 V13 M2,7.5 H14" stroke="#30a0ff" stroke-width="1"/><path d="M5,7.5 H11" stroke="#ff3030" stroke-width="1"/><circle cx="8" cy="7.5" r="1.8" fill="#20e020"/></svg>
<div style="left:1440px;top:937px;width:98px;height:21px;background:linear-gradient(#e4e4e4,#c8c8c8);border:1px solid #7a7a7a;border-radius:1px;"></div>
<div class="t" style="left:989px;width:1000px;text-align:center;top:941.84px;font-size:12px;line-height:12px;color:#111;font-weight:normal;font-family:'Liberation Sans',sans-serif;">Manage</div>
<div style="left:1220px;top:963px;width:318px;height:20px;background:#dcdcdc;border:1px solid #6e6e6e;"></div>
<div class="t" style="left:1227px;top:966.92px;font-size:12.5px;line-height:12.5px;color:#111;font-weight:normal;font-family:'Liberation Sans',sans-serif;transform-origin:0 0;">&lt;Unnamed&gt;</div>
<div style="left:1220px;top:989px;width:318px;height:19px;background:#aca9a3;"></div>
<div class="t" style="left:1224px;top:992.00px;font-size:13px;line-height:13px;color:#1a5eb0;font-weight:bold;font-family:'Liberation Sans',sans-serif;transform-origin:0 0;">Thresholds</div>
<svg style="position:absolute;left:1518px;top:991.5px;" width="14" height="14" viewBox="0 0 14 14"><polygon points="1,1 13,1 7,6.5" fill="#1a5eb0"/><polygon points="1,7 13,7 7,12.5" fill="#1a5eb0"/></svg>
<div style="left:1212px;top:1016px;width:333px;height:23px;background:#aca9a3;"></div>
<svg style="position:absolute;left:1220px;top:1021.5px;" width="13" height="13" viewBox="0 0 13 13"><polygon points="1,12 12,12 1,1" fill="#1a5eb0"/></svg>
<svg style="position:absolute;left:1245px;top:1021.5px;" width="13" height="13" viewBox="0 0 13 13"><rect x="1" y="1" width="11" height="11" fill="#1a5eb0"/></svg>
<svg style="position:absolute;left:1473.5px;top:1021.5px;" width="13" height="13" viewBox="0 0 13 13"><rect x="1.5" y="1.5" width="10" height="10" fill="none" stroke="#1a5eb0" stroke-width="2"/></svg>
<svg style="position:absolute;left:1498.5px;top:1021.5px;" width="13" height="13" viewBox="0 0 13 13"><polygon points="1.5,1.5 7,1.5 11.5,6 11.5,11.5 1.5,11.5" fill="none" stroke="#1a5eb0" stroke-width="2"/></svg>
<svg style="position:absolute;left:1523px;top:1020.5px;" width="14" height="14" viewBox="0 0 14 14"><path d="M1,1 L4.8,4.8 M13,1 L9.2,4.8 M1,13 L4.8,9.2 M13,13 L9.2,9.2" stroke="#1a5eb0" stroke-width="1.9"/><polygon points="6.2,6.2 6.2,2.4 2.4,6.2" fill="#1a5eb0"/><polygon points="7.8,6.2 7.8,2.4 11.6,6.2" fill="#1a5eb0"/><polygon points="6.2,7.8 6.2,11.6 2.4,7.8" fill="#1a5eb0"/><polygon points="7.8,7.8 7.8,11.6 11.6,7.8" fill="#1a5eb0"/></svg>
</div>
<div style="left:0px;top:1047px;width:1920px;height:33px;background:#efefef;"></div>
<svg style="position:absolute;left:6px;top:1052.0px;opacity:0.9;" width="6" height="22" viewBox="0 0 6 22"><rect x="0" y="0" width="2" height="2" fill="#6a6a6a"/><rect x="4" y="0" width="2" height="2" fill="#6a6a6a"/><rect x="2" y="2" width="2" height="2" fill="#6a6a6a"/><rect x="0" y="4" width="2" height="2" fill="#6a6a6a"/><rect x="4" y="4" width="2" height="2" fill="#6a6a6a"/><rect x="2" y="6" width="2" height="2" fill="#6a6a6a"/><rect x="0" y="8" width="2" height="2" fill="#6a6a6a"/><rect x="4" y="8" width="2" height="2" fill="#6a6a6a"/><rect x="2" y="10" width="2" height="2" fill="#6a6a6a"/><rect x="0" y="12" width="2" height="2" fill="#6a6a6a"/><rect x="4" y="12" width="2" height="2" fill="#6a6a6a"/><rect x="2" y="14" width="2" height="2" fill="#6a6a6a"/><rect x="0" y="16" width="2" height="2" fill="#6a6a6a"/><rect x="4" y="16" width="2" height="2" fill="#6a6a6a"/><rect x="2" y="18" width="2" height="2" fill="#6a6a6a"/><rect x="0" y="20" width="2" height="2" fill="#6a6a6a"/><rect x="4" y="20" width="2" height="2" fill="#6a6a6a"/></svg>
<svg style="position:absolute;left:348px;top:1052.0px;opacity:0.9;" width="6" height="22" viewBox="0 0 6 22"><rect x="0" y="0" width="2" height="2" fill="#6a6a6a"/><rect x="4" y="0" width="2" height="2" fill="#6a6a6a"/><rect x="2" y="2" width="2" height="2" fill="#6a6a6a"/><rect x="0" y="4" width="2" height="2" fill="#6a6a6a"/><rect x="4" y="4" width="2" height="2" fill="#6a6a6a"/><rect x="2" y="6" width="2" height="2" fill="#6a6a6a"/><rect x="0" y="8" width="2" height="2" fill="#6a6a6a"/><rect x="4" y="8" width="2" height="2" fill="#6a6a6a"/><rect x="2" y="10" width="2" height="2" fill="#6a6a6a"/><rect x="0" y="12" width="2" height="2" fill="#6a6a6a"/><rect x="4" y="12" width="2" height="2" fill="#6a6a6a"/><rect x="2" y="14" width="2" height="2" fill="#6a6a6a"/><rect x="0" y="16" width="2" height="2" fill="#6a6a6a"/><rect x="4" y="16" width="2" height="2" fill="#6a6a6a"/><rect x="2" y="18" width="2" height="2" fill="#6a6a6a"/><rect x="0" y="20" width="2" height="2" fill="#6a6a6a"/><rect x="4" y="20" width="2" height="2" fill="#6a6a6a"/></svg>
<svg style="position:absolute;left:459px;top:1052.0px;opacity:0.9;" width="6" height="22" viewBox="0 0 6 22"><rect x="0" y="0" width="2" height="2" fill="#6a6a6a"/><rect x="4" y="0" width="2" height="2" fill="#6a6a6a"/><rect x="2" y="2" width="2" height="2" fill="#6a6a6a"/><rect x="0" y="4" width="2" height="2" fill="#6a6a6a"/><rect x="4" y="4" width="2" height="2" fill="#6a6a6a"/><rect x="2" y="6" width="2" height="2" fill="#6a6a6a"/><rect x="0" y="8" width="2" height="2" fill="#6a6a6a"/><rect x="4" y="8" width="2" height="2" fill="#6a6a6a"/><rect x="2" y="10" width="2" height="2" fill="#6a6a6a"/><rect x="0" y="12" width="2" height="2" fill="#6a6a6a"/><rect x="4" y="12" width="2" height="2" fill="#6a6a6a"/><rect x="2" y="14" width="2" height="2" fill="#6a6a6a"/><rect x="0" y="16" width="2" height="2" fill="#6a6a6a"/><rect x="4" y="16" width="2" height="2" fill="#6a6a6a"/><rect x="2" y="18" width="2" height="2" fill="#6a6a6a"/><rect x="0" y="20" width="2" height="2" fill="#6a6a6a"/><rect x="4" y="20" width="2" height="2" fill="#6a6a6a"/></svg>
<svg style="position:absolute;left:665px;top:1052.0px;opacity:0.9;" width="6" height="22" viewBox="0 0 6 22"><rect x="0" y="0" width="2" height="2" fill="#6a6a6a"/><rect x="4" y="0" width="2" height="2" fill="#6a6a6a"/><rect x="2" y="2" width="2" height="2" fill="#6a6a6a"/><rect x="0" y="4" width="2" height="2" fill="#6a6a6a"/><rect x="4" y="4" width="2" height="2" fill="#6a6a6a"/><rect x="2" y="6" width="2" height="2" fill="#6a6a6a"/><rect x="0" y="8" width="2" height="2" fill="#6a6a6a"/><rect x="4" y="8" width="2" height="2" fill="#6a6a6a"/><rect x="2" y="10" width="2" height="2" fill="#6a6a6a"/><rect x="0" y="12" width="2" height="2" fill="#6a6a6a"/><rect x="4" y="12" width="2" height="2" fill="#6a6a6a"/><rect x="2" y="14" width="2" height="2" fill="#6a6a6a"/><rect x="0" y="16" width="2" height="2" fill="#6a6a6a"/><rect x="4" y="16" width="2" height="2" fill="#6a6a6a"/><rect x="2" y="18" width="2" height="2" fill="#6a6a6a"/><rect x="0" y="20" width="2" height="2" fill="#6a6a6a"/><rect x="4" y="20" width="2" height="2" fill="#6a6a6a"/></svg>
<svg style="position:absolute;left:1124px;top:1052.0px;opacity:0.9;" width="6" height="22" viewBox="0 0 6 22"><rect x="0" y="0" width="2" height="2" fill="#6a6a6a"/><rect x="4" y="0" width="2" height="2" fill="#6a6a6a"/><rect x="2" y="2" width="2" height="2" fill="#6a6a6a"/><rect x="0" y="4" width="2" height="2" fill="#6a6a6a"/><rect x="4" y="4" width="2" height="2" fill="#6a6a6a"/><rect x="2" y="6" width="2" height="2" fill="#6a6a6a"/><rect x="0" y="8" width="2" height="2" fill="#6a6a6a"/><rect x="4" y="8" width="2" height="2" fill="#6a6a6a"/><rect x="2" y="10" width="2" height="2" fill="#6a6a6a"/><rect x="0" y="12" width="2" height="2" fill="#6a6a6a"/><rect x="4" y="12" width="2" height="2" fill="#6a6a6a"/><rect x="2" y="14" width="2" height="2" fill="#6a6a6a"/><rect x="0" y="16" width="2" height="2" fill="#6a6a6a"/><rect x="4" y="16" width="2" height="2" fill="#6a6a6a"/><rect x="2" y="18" width="2" height="2" fill="#6a6a6a"/><rect x="0" y="20" width="2" height="2" fill="#6a6a6a"/><rect x="4" y="20" width="2" height="2" fill="#6a6a6a"/></svg>
<div style="left:20px;top:1053px;width:293px;height:20px;background:linear-gradient(#f2f2f2,#d8d8d8);border:1px solid #9a9a9a;border-radius:2px;"></div>
<div style="left:28px;top:1057px;width:12px;height:12px;border:1px solid #333;border-top-width:3px;background:#fff;"></div>
<div class="t" style="left:47px;top:1057.68px;font-size:11.6px;line-height:11.6px;color:#1b1b1b;font-weight:normal;font-family:'Liberation Mono',monospace;transform-origin:0 0;">star_mask</div>
<div style="left:295px;top:1056px;width:1px;height:14px;background:#aaa;"></div>
<svg style="position:absolute;left:298px;top:1059px;" width="12" height="8" viewBox="0 0 12 8"><polygon points="1,1 11,1 6,7" fill="#111"/></svg>
<div style="left:318px;top:1054px;width:19px;height:19px;background:#fafafa;border:1px solid #8a8a8a;"></div>
<svg style="position:absolute;left:321px;top:1057px;" width="13" height="13" viewBox="0 0 13 13"><polygon points="2,4 5,1 11,1 11,12 2,12" fill="#222"/><rect x="5" y="2" width="5" height="9" fill="#fff"/></svg>
<div style="left:363px;top:1054px;width:19px;height:19px;background:linear-gradient(#7ab0ff,#2a6ae8);border:1px solid #555;"></div>
<div style="left:386px;top:1054px;width:19px;height:19px;background:linear-gradient(#909090,#303030);border:1px solid #555;"></div>
<div style="left:409px;top:1054px;width:19px;height:19px;background:linear-gradient(#909090,#303030);border:1px solid #555;"></div>
<div style="left:432px;top:1054px;width:19px;height:19px;background:linear-gradient(#909090,#303030);border:1px solid #555;"></div>
<svg style="position:absolute;left:1094px;top:1057px;" width="12" height="12" viewBox="0 0 12 12"><polygon points="2,1 11,6 2,11" fill="#111"/></svg>
<div class="t" style="left:1148.5px;top:1057.41px;font-size:11.68px;line-height:11.68px;color:#1b1b1b;font-weight:normal;font-family:'Liberation Mono',monospace;transform-origin:0 0;">w:6400 &#183; h:4297 &#183; n:1 &#183; i16 &#183; Gray &#183; 52.454 MiB &#183; Modified</div>
</body></html>
